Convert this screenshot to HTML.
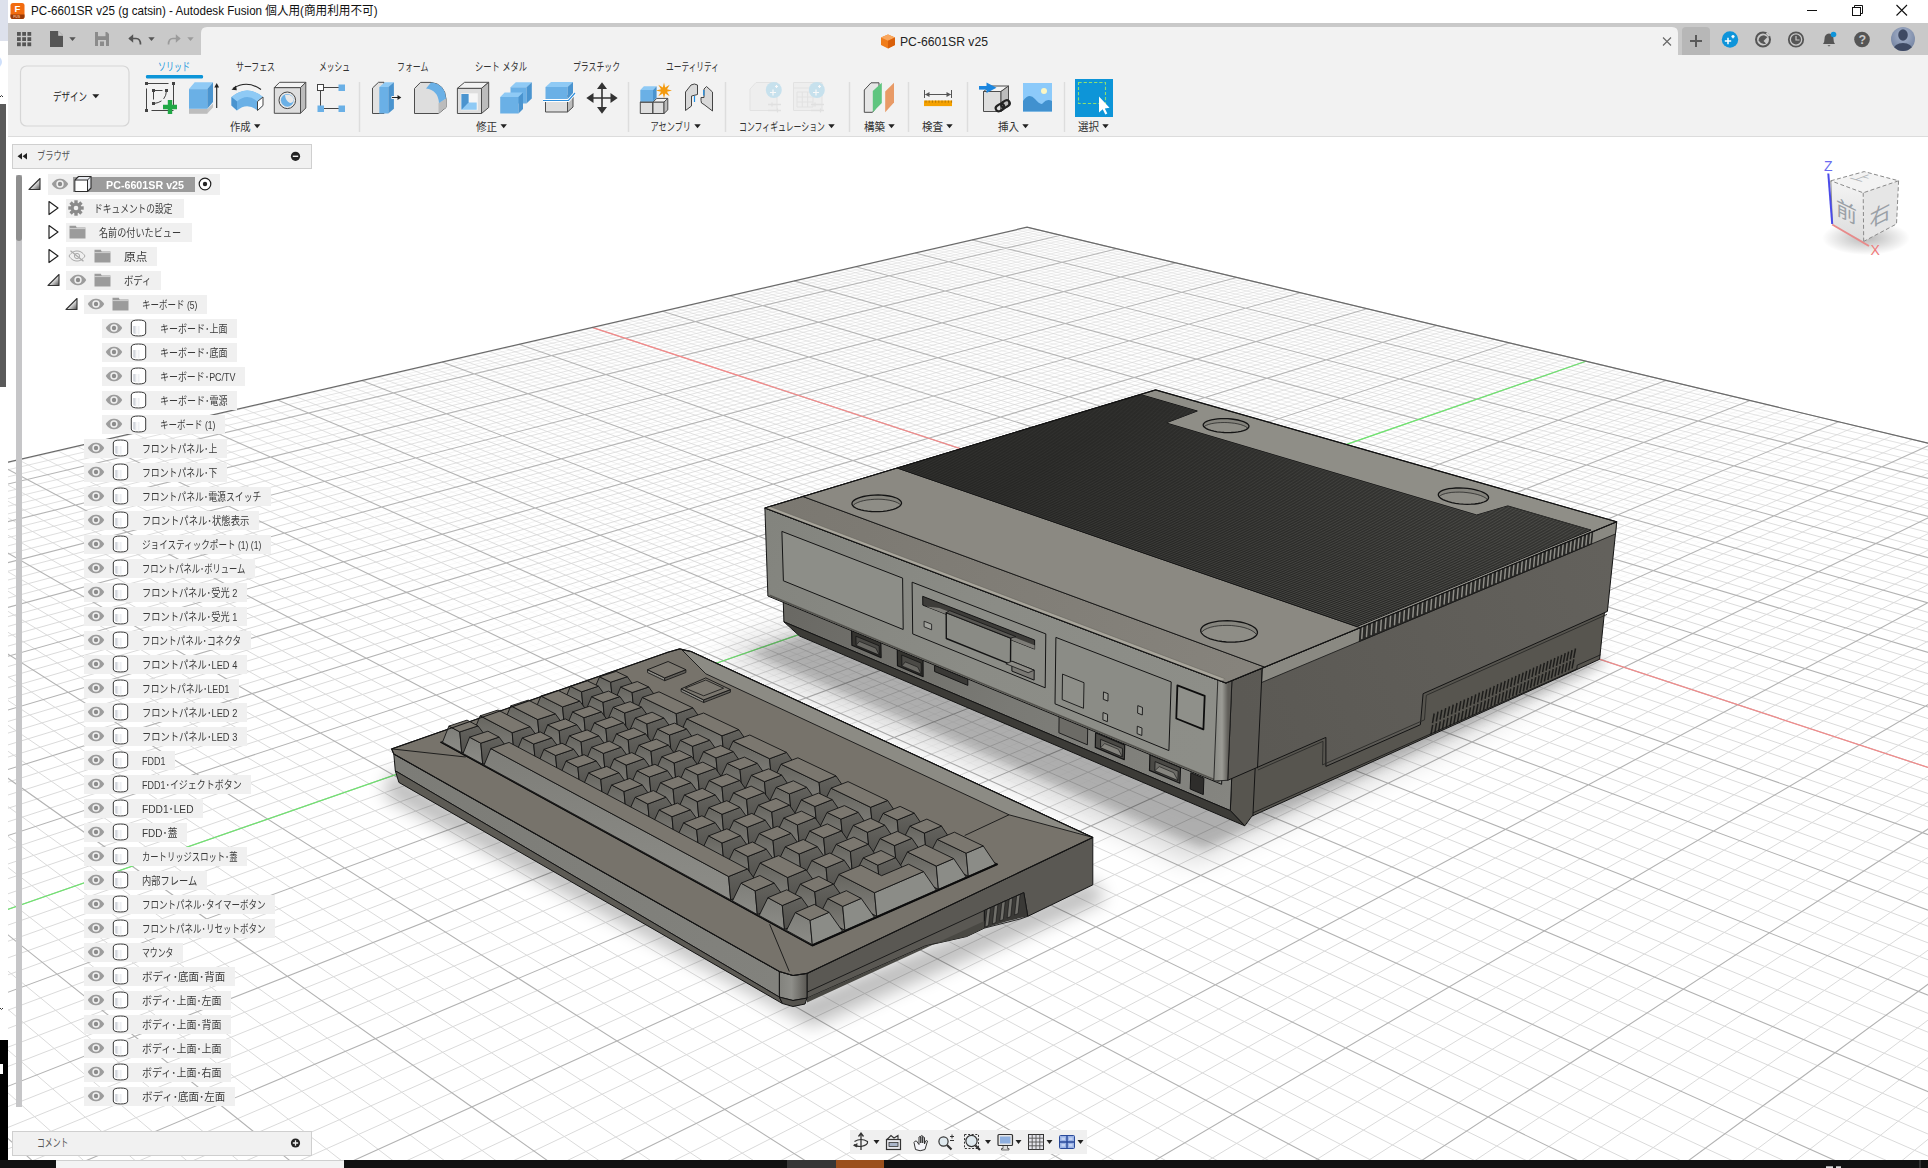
<!DOCTYPE html>
<html lang="ja"><head><meta charset="utf-8"><title>PC-6601SR v25 - Autodesk Fusion</title>
<style>
html,body{margin:0;padding:0}
body{width:1928px;height:1168px;overflow:hidden;background:#fff;position:relative;font-family:"Liberation Sans","Noto Sans CJK JP",sans-serif;font-size:11px;color:#3a3a3a}
#scene{position:absolute;left:0;top:0}
#ui{position:absolute;left:0;top:0}
.row{position:absolute;left:0;width:330px}
.rb{position:absolute;top:0;height:100%;background:#f0f0f0}
.ic{position:absolute;top:50%;transform:translateY(-50%)}
.rt{position:absolute;top:50%;margin-top:-7.2px;line-height:16px;font-size:11px;white-space:pre;transform-origin:0 50%}
.lb{position:absolute;white-space:pre;transform-origin:0 50%;line-height:1}
#browserhdr{position:absolute;left:12px;top:144px;width:298px;height:23px;background:#f1f1f1;border:1px solid #cfcfcf}
#comment{position:absolute;left:12px;top:1131px;width:298px;height:23px;background:#f1f1f1;border:1px solid #cfcfcf}
#scroll{position:absolute;left:16px;top:175px;width:6px;height:932px;background:#c6c6c8}
#thumb{position:absolute;left:16px;top:175px;width:6px;height:66px;background:#8f8f8f;border-radius:3px}
#navbar{position:absolute;left:850px;top:1130px;width:237px;height:24px;background:#f0f0f0}
</style></head>
<body>
<svg id="scene" width="1928" height="1168" viewBox="0 0 1928 1168" font-family='Liberation Sans,Noto Sans CJK JP,sans-serif'><defs><clipPath id="cv"><rect x="8" y="137" width="1920" height="1023"/></clipPath></defs><g clip-path="url(#cv)"><defs><radialGradient id="fineg" gradientUnits="userSpaceOnUse" cx="1050" cy="200" r="900" gradientTransform="translate(1050,200) scale(1,0.72) translate(-1050,-200)"><stop offset="0" stop-color="#d0d0d0" stop-opacity=".28"/><stop offset=".4" stop-color="#d2d2d2" stop-opacity=".42"/><stop offset=".75" stop-color="#d6d6d6" stop-opacity=".32"/><stop offset=".98" stop-color="#d9d9d9" stop-opacity="0"/></radialGradient><linearGradient id="minorg" gradientUnits="userSpaceOnUse" x1="0" y1="230" x2="0" y2="640"><stop offset="0" stop-color="#d0d0d0" stop-opacity=".4"/><stop offset="1" stop-color="#dadada"/></linearGradient><linearGradient id="majorg" gradientUnits="userSpaceOnUse" x1="0" y1="230" x2="0" y2="700"><stop offset="0" stop-color="#a8a8a8" stop-opacity=".8"/><stop offset="1" stop-color="#b2b2b2"/></linearGradient></defs>
<path d="M-1181.6 741.7L1033.4 228.8M-1177.9 750.0L1044.3 231.4M-1174.3 758.5L1055.2 234.0M-1170.5 767.1L1066.2 236.7M-1166.7 775.8L1077.3 239.3M-1162.9 784.6L1088.5 242.0M-1159.0 793.6L1099.8 244.7M-1155.0 802.7L1111.2 247.4M-1151.0 812.0L1122.7 250.2M-1146.9 821.4L1134.3 253.0M-1142.8 830.9L1146.0 255.8M-1138.6 840.6L1157.7 258.6M-1134.3 850.4L1169.6 261.4M-1130.0 860.4L1181.5 264.3M-1125.6 870.5L1193.6 267.2M-1121.1 880.8L1205.8 270.1M-1116.5 891.3L1218.0 273.1M-1111.9 901.9L1230.4 276.0M-1107.2 912.7L1242.9 279.0M-1102.5 923.7L1255.5 282.0M-1097.6 934.9L1268.2 285.1M-1092.7 946.2L1281.0 288.1M-1087.6 957.8L1293.9 291.2M-1082.5 969.5L1306.9 294.4M-1077.4 981.4L1320.1 297.5M-1072.1 993.6L1333.3 300.7M-1066.7 1005.9L1346.7 303.9M-1061.2 1018.5L1360.2 307.1M-1055.7 1031.3L1373.8 310.4M-1050.0 1044.4L1387.6 313.7M-1044.2 1057.6L1401.4 317.0M-1038.4 1071.1L1415.4 320.4M-1032.4 1084.9L1429.5 323.8M-1026.3 1098.9L1443.8 327.2M-1020.1 1113.2L1458.2 330.6M-1013.8 1127.7L1472.7 334.1M-1007.3 1142.5L1487.3 337.6M-1000.8 1157.6L1502.1 341.2M-994.1 1173.0L1517.0 344.7M-987.2 1188.8L1532.1 348.3M-980.3 1204.8L1547.3 352.0M-973.2 1221.1L1562.6 355.7M-965.9 1237.8L1578.1 359.4M-958.5 1254.8L1593.7 363.1M-951.0 1272.2L1609.5 366.9M-943.3 1289.9L1625.5 370.7M-935.4 1308.0L1641.6 374.6M-927.4 1326.5L1657.8 378.5M-919.2 1345.4L1674.2 382.4M-910.8 1364.7L1690.8 386.4M-902.2 1384.4L1707.6 390.4M-893.4 1404.5L1724.5 394.5M-884.5 1425.2L1741.5 398.6M-875.3 1446.3L1758.8 402.7M-865.9 1467.8L1776.2 406.9M-856.3 1489.9L1793.8 411.1M-846.5 1512.5L1811.6 415.4M-836.4 1535.7L1829.5 419.7M-826.1 1559.4L1847.7 424.0M-815.6 1583.6L1866.0 428.4M-804.8 1608.5L1884.5 432.8M-793.7 1634.0L1903.3 437.3M-782.3 1660.2L1922.2 441.9M-770.6 1687.0L1941.3 446.5M-758.7 1714.6L1960.6 451.1M-746.4 1742.8L1980.1 455.8M-733.8 1771.8L1999.9 460.5M-720.8 1801.6L2019.8 465.3M-707.5 1832.3L2040.0 470.1M-693.8 1863.7L2060.4 475.0M-679.7 1896.1L2081.0 479.9M-665.3 1929.4L2101.8 484.9M-650.4 1963.7L2122.9 490.0M-635.0 1999.0L2144.2 495.1M-619.2 2035.3L2165.8 500.3M-603.0 2072.8L2187.6 505.5M-586.2 2111.4L2209.6 510.8M-568.9 2151.2L2231.9 516.1M-551.0 2192.3L2254.4 521.5M-532.6 2234.7L2277.3 527.0M-513.5 2278.5L2300.3 532.5M-493.8 2323.8L2323.7 538.1M-473.5 2370.6L2347.3 543.8M-452.4 2419.1L2371.2 549.5M-430.6 2469.3L2395.4 555.3M-408.0 2521.2L2419.8 561.2M-384.6 2575.1L2444.6 567.1M-360.3 2631.0L2469.7 573.1M-335.1 2689.0L2495.1 579.2M-308.9 2749.2L2520.7 585.4M-281.7 2811.9L2546.7 591.6M-253.4 2877.0L2573.1 597.9M-223.9 2944.8L2599.7 604.3M-193.1 3015.5L2626.7 610.8M-161.1 3089.2L2654.1 617.3M-127.7 3166.1L2681.7 624.0M-92.7 3246.5L2709.8 630.7M-56.2 3330.5L2738.2 637.5M-17.9 3418.5L2766.9 644.4M22.1 3510.8L2796.1 651.4M64.2 3607.5L2825.6 658.5M108.4 3709.1L2855.5 665.6M154.8 3816.0L2885.9 672.9M203.8 3928.6L2916.6 680.3M255.4 4047.3L2947.7 687.7M309.9 4172.6L2979.3 695.3M367.5 4305.2L3011.3 703.0M428.6 4445.7L3043.7 710.8M493.4 4594.8L3076.6 718.6M562.3 4753.3L3110.0 726.6M635.6 4922.1L3143.8 734.8M714.0 5102.3L3178.1 743.0M797.8 5295.1L3212.9 751.3M-1166.6 732.8L892.4 5298.4M-1132.7 725.0L988.5 5111.7M-1099.3 717.3L1078.5 4936.8M-1066.3 709.7L1163.0 4772.7M-1033.7 702.2L1242.5 4618.3M-1001.6 694.8L1317.4 4472.8M-969.9 687.5L1388.0 4335.4M-938.6 680.3L1454.9 4205.6M-907.8 673.1L1518.1 4082.7M-877.3 666.1L1578.1 3966.1M-847.2 659.2L1635.1 3855.5M-817.5 652.3L1689.2 3750.2M-788.1 645.6L1740.8 3650.0M-759.2 638.9L1789.9 3554.6M-730.6 632.3L1836.8 3463.5M-702.3 625.8L1881.6 3376.5M-674.4 619.4L1924.4 3293.3M-646.8 613.0L1965.4 3213.6M-619.6 606.7L2004.7 3137.3M-592.7 600.5L2042.3 3064.2M-566.1 594.4L2078.4 2994.0M-539.9 588.4L2113.1 2926.5M-513.9 582.4L2146.5 2861.7M-488.3 576.5L2178.6 2799.4M-462.9 570.6L2209.5 2739.3M-437.9 564.8L2239.3 2681.5M-413.1 559.1L2268.0 2625.7M-388.6 553.5L2295.6 2572.0M-364.4 547.9L2322.4 2520.0M-340.5 542.4L2348.2 2469.9M-316.9 537.0L2373.1 2421.4M-293.5 531.6L2397.2 2374.6M-270.4 526.2L2420.6 2329.2M-247.5 521.0L2443.2 2285.3M-224.9 515.8L2465.0 2242.8M-202.5 510.6L2486.2 2201.6M-180.4 505.5L2506.8 2161.7M-158.6 500.5L2526.7 2122.9M-136.9 495.5L2546.1 2085.3M-115.5 490.6L2564.9 2048.8M-94.3 485.7L2583.1 2013.3M-73.4 480.8L2600.9 1978.9M-52.7 476.1L2618.1 1945.4M-32.2 471.3L2634.9 1912.8M-11.9 466.7L2651.2 1881.2M8.2 462.0L2667.0 1850.3M28.1 457.5L2682.5 1820.3M47.7 452.9L2697.5 1791.1M67.2 448.4L2712.2 1762.6M86.5 444.0L2726.5 1734.8M105.5 439.6L2740.4 1707.8M124.4 435.3L2754.0 1681.4M143.1 430.9L2767.2 1655.6M161.6 426.7L2780.2 1630.5M179.9 422.5L2792.8 1606.0M198.0 418.3L2805.1 1582.0M216.0 414.1L2817.1 1558.7M233.8 410.0L2828.9 1535.8M251.4 406.0L2840.4 1513.5M268.8 402.0L2851.6 1491.7M286.1 398.0L2862.6 1470.4M303.2 394.1L2873.3 1449.5M320.1 390.2L2883.8 1429.1M336.9 386.3L2894.1 1409.1M353.5 382.5L2904.2 1389.6M369.9 378.7L2914.0 1370.5M386.3 374.9L2923.6 1351.8M402.4 371.2L2933.1 1333.4M418.4 367.5L2942.3 1315.5M434.2 363.8L2951.4 1297.9M449.9 360.2L2960.2 1280.6M465.5 356.6L2968.9 1263.7M480.9 353.1L2977.5 1247.1M496.2 349.6L2985.8 1230.9M511.3 346.1L2994.0 1215.0M526.3 342.6L3002.1 1199.3M541.2 339.2L3010.0 1184.0M555.9 335.8L3017.7 1169.0M570.5 332.4L3025.3 1154.2M585.0 329.1L3032.8 1139.7M599.4 325.8L3040.1 1125.5M613.6 322.5L3047.3 1111.5M627.7 319.3L3054.3 1097.8M641.6 316.0L3061.3 1084.3M655.5 312.9L3068.1 1071.1M669.2 309.7L3074.8 1058.1M682.8 306.6L3081.4 1045.3M696.3 303.4L3087.8 1032.7M709.7 300.4L3094.2 1020.4M723.0 297.3L3100.4 1008.2M736.1 294.3L3106.6 996.3M749.2 291.3L3112.6 984.6M762.1 288.3L3118.6 973.0M774.9 285.3L3124.4 961.6M787.7 282.4L3130.2 950.5M800.3 279.5L3135.8 939.5M812.8 276.6L3141.4 928.6M825.2 273.7L3146.9 918.0M837.5 270.9L3152.3 907.5M849.7 268.1L3157.6 897.2M861.8 265.3L3162.8 887.0M873.8 262.5L3168.0 877.0M885.7 259.8L3173.0 867.2M897.6 257.1L3178.0 857.5M909.3 254.4L3182.9 847.9M920.9 251.7L3187.8 838.5M932.4 249.0L3192.6 829.2M943.9 246.4L3197.3 820.1M955.3 243.8L3201.9 811.1M966.5 241.2L3206.5 802.2M977.7 238.6L3211.0 793.4M988.8 236.0L3215.4 784.8M999.8 233.5L3219.8 776.3M1010.7 231.0L3224.1 767.9M1021.6 228.5L3228.4 759.6" stroke="url(#fineg)" stroke-width="1" fill="none"/>
<path d="M-1183.4 737.6L1028.0 227.5M-1179.8 745.9L1038.8 230.1M-1176.1 754.3L1049.7 232.7M-1168.6 771.4L1071.8 238.0M-1164.8 780.2L1082.9 240.7M-1161.0 789.1L1094.2 243.4M-1157.0 798.2L1105.5 246.1M-1149.0 816.6L1128.5 251.6M-1144.9 826.1L1140.1 254.4M-1140.7 835.7L1151.8 257.2M-1136.5 845.5L1163.6 260.0M-1127.8 865.4L1187.6 265.7M-1123.3 875.6L1199.7 268.7M-1118.8 886.0L1211.9 271.6M-1114.2 896.6L1224.2 274.5M-1104.9 918.2L1249.2 280.5M-1100.0 929.3L1261.8 283.6M-1095.1 940.5L1274.6 286.6M-1090.2 952.0L1287.4 289.7M-1080.0 975.4L1313.5 295.9M-1074.7 987.5L1326.7 299.1M-1069.4 999.7L1340.0 302.3M-1064.0 1012.2L1353.5 305.5M-1052.8 1037.8L1380.7 312.1M-1047.1 1051.0L1394.5 315.4M-1041.3 1064.3L1408.4 318.7M-1035.4 1078.0L1422.5 322.1M-1023.2 1106.0L1451.0 328.9M-1016.9 1120.4L1465.4 332.4M-1010.6 1135.1L1480.0 335.9M-1004.1 1150.1L1494.7 339.4M-990.7 1180.9L1524.5 346.5M-983.8 1196.7L1539.7 350.2M-976.7 1212.9L1554.9 353.8M-969.6 1229.4L1570.3 357.5M-954.8 1263.4L1601.6 365.0M-947.1 1281.0L1617.5 368.8M-939.4 1298.9L1633.5 372.7M-931.4 1317.2L1649.7 376.5M-915.0 1355.0L1682.5 384.4M-906.5 1374.5L1699.2 388.4M-897.8 1394.4L1716.0 392.4M-889.0 1414.8L1733.0 396.5M-870.6 1457.0L1767.5 404.8M-861.1 1478.8L1785.0 409.0M-851.4 1501.2L1802.7 413.2M-841.5 1524.0L1820.5 417.5M-820.9 1571.4L1856.8 426.2M-810.2 1596.0L1875.3 430.6M-799.2 1621.2L1893.9 435.1M-788.0 1647.0L1912.7 439.6M-764.7 1700.7L1950.9 448.8M-752.6 1728.6L1970.4 453.4M-740.1 1757.2L1990.0 458.1M-727.3 1786.6L2009.8 462.9M-700.7 1847.9L2050.2 472.6M-686.8 1879.8L2070.7 477.5M-672.6 1912.6L2091.4 482.4M-657.9 1946.4L2112.4 487.5M-627.2 2017.0L2155.0 497.7M-611.2 2053.9L2176.6 502.9M-594.6 2091.9L2198.6 508.1M-577.6 2131.1L2220.7 513.4M-541.9 2213.3L2265.8 524.3M-523.1 2256.4L2288.8 529.8M-503.8 2301.0L2312.0 535.3M-483.7 2347.0L2335.4 540.9M-441.6 2444.0L2383.2 552.4M-419.4 2495.0L2407.6 558.2M-396.4 2547.9L2432.2 564.1M-372.6 2602.8L2457.1 570.1M-322.1 2718.8L2507.9 582.3M-295.4 2780.2L2533.7 588.5M-267.7 2844.1L2559.9 594.8M-238.8 2910.6L2586.4 601.1M-177.3 3052.0L2640.3 614.0M-144.6 3127.2L2667.8 620.6M-110.4 3205.9L2695.7 627.3M-74.7 3288.0L2723.9 634.1M1.9 3464.1L2781.5 647.9M42.9 3558.5L2810.8 654.9M86.0 3657.7L2840.5 662.0M131.3 3761.9L2870.6 669.3M229.2 3987.1L2932.1 684.0M282.2 4109.1L2963.5 691.5M338.3 4238.0L2995.2 699.1M397.6 4374.4L3027.5 706.9M527.3 4672.8L3093.2 722.6M598.4 4836.3L3126.8 730.7M674.2 5010.7L3160.9 738.8M755.2 5197.0L3195.4 747.1M-1149.6 728.9L941.3 5203.5M-1115.9 721.1L1034.2 5022.9M-1082.7 713.5L1121.4 4853.5M-1050.0 705.9L1203.3 4694.3M-985.7 691.1L1353.2 4403.1M-954.2 683.9L1421.9 4269.6M-923.2 676.7L1486.9 4143.3M-892.5 669.6L1548.5 4023.6M-832.3 655.7L1662.5 3802.2M-802.8 648.9L1715.3 3699.5M-773.6 642.2L1765.6 3601.7M-744.8 635.6L1813.6 3508.5M-688.3 622.6L1903.2 3334.4M-660.6 616.2L1945.1 3253.0M-633.2 609.9L1985.2 3175.1M-606.1 603.6L2023.7 3100.4M-552.9 591.4L2096.0 2959.9M-526.8 585.4L2130.0 2893.8M-501.0 579.4L2162.7 2830.2M-475.5 573.5L2194.2 2769.1M-425.4 562.0L2253.7 2653.4M-400.8 556.3L2281.9 2598.6M-376.5 550.7L2309.1 2545.8M-352.4 545.2L2335.4 2494.8M-305.2 534.3L2385.3 2397.8M-281.9 528.9L2409.0 2351.7M-258.9 523.6L2432.0 2307.1M-236.2 518.4L2454.2 2263.9M-191.5 508.1L2496.6 2181.5M-169.5 503.0L2516.9 2142.1M-147.7 498.0L2536.5 2104.0M-126.2 493.0L2555.6 2066.9M-83.8 483.3L2592.1 1996.0M-63.0 478.5L2609.5 1962.0M-42.4 473.7L2626.5 1929.0M-22.0 469.0L2643.1 1896.9M18.2 459.7L2674.8 1835.2M37.9 455.2L2690.1 1805.6M57.5 450.7L2704.9 1776.7M76.9 446.2L2719.4 1748.6M115.0 437.4L2747.2 1694.5M133.8 433.1L2760.7 1668.4M152.4 428.8L2773.7 1643.0M170.8 424.6L2786.5 1618.2M207.0 416.2L2811.2 1570.3M224.9 412.1L2823.1 1547.2M242.6 408.0L2834.7 1524.6M260.1 404.0L2846.0 1502.5M294.6 396.0L2868.0 1459.9M311.7 392.1L2878.6 1439.2M328.5 388.2L2889.0 1419.1M345.2 384.4L2899.2 1399.3M378.1 376.8L2918.8 1361.1M394.3 373.0L2928.4 1342.5M410.4 369.3L2937.7 1324.4M426.3 365.7L2946.9 1306.6M457.7 358.4L2964.6 1272.1M473.2 354.9L2973.2 1255.4M488.6 351.3L2981.7 1239.0M503.8 347.8L2990.0 1222.9M533.8 340.9L3006.0 1191.6M548.6 337.5L3013.9 1176.5M563.3 334.1L3021.5 1161.6M577.8 330.8L3029.1 1146.9M606.5 324.2L3043.7 1118.5M620.6 320.9L3050.8 1104.6M634.7 317.7L3057.8 1091.0M648.6 314.4L3064.7 1077.7M676.0 308.1L3078.1 1051.7M689.6 305.0L3084.6 1039.0M703.0 301.9L3091.0 1026.5M716.4 298.8L3097.3 1014.3M742.7 292.8L3109.6 990.4M755.7 289.8L3115.6 978.8M768.5 286.8L3121.5 967.3M781.3 283.9L3127.3 956.0M806.5 278.0L3138.6 934.0M819.0 275.2L3144.1 923.3M831.4 272.3L3149.6 912.7M843.6 269.5L3154.9 902.3M867.8 263.9L3165.4 882.0M879.8 261.2L3170.5 872.1M891.7 258.4L3175.5 862.3M903.4 255.7L3180.5 852.7M926.7 250.4L3190.2 833.8M938.2 247.7L3194.9 824.6M949.6 245.1L3199.6 815.5M960.9 242.5L3204.2 806.6M983.3 237.3L3213.2 789.1M994.3 234.8L3217.6 780.5M1005.3 232.2L3222.0 772.1M1016.2 229.7L3226.3 763.7" stroke="url(#minorg)" stroke-width="1" fill="none"/>
<path d="M-1172.4 762.8L1060.7 235.3M-1153.0 807.3L1117.0 248.8M-1132.2 855.4L1175.6 262.9M-1109.6 907.3L1236.7 277.5M-1085.1 963.6L1300.4 292.8M-1058.5 1024.9L1367.0 308.8M-1029.4 1091.9L1436.7 325.5M-997.4 1165.3L1509.5 342.9M-962.2 1246.2L1585.9 361.3M-923.3 1335.9L1666.0 380.5M-879.9 1435.7L1750.1 400.6M-831.3 1547.4L1838.6 421.8M-776.5 1673.5L1931.7 444.2M-714.2 1816.8L2029.9 467.7M-642.8 1981.2L2133.5 492.5M-560.0 2171.6L2243.1 518.8M-463.0 2394.7L2359.2 546.6M-347.8 2659.7L2482.3 576.2M-208.7 2979.8L2613.2 607.5M-37.3 3374.0L2752.5 640.9M179.0 3871.6L2901.2 676.6M460.5 4519.1L3060.1 714.7M841.9 5396.6L3230.5 755.5M-1183.7 736.7L841.9 5396.6M-1017.6 698.5L1280.5 4544.4M-862.2 662.6L1607.0 3910.1M-716.4 629.0L1859.5 3419.5M-579.4 597.5L2060.6 3028.7M-450.4 567.7L2224.5 2710.2M-328.7 539.7L2360.7 2445.5M-213.7 513.2L2475.7 2222.0M-104.9 488.1L2574.1 2030.9M-1.8 464.3L2659.2 1865.6M96.0 441.8L2733.5 1721.2M189.0 420.4L2799.0 1593.9M277.5 400.0L2857.1 1481.0M361.7 380.6L2909.1 1380.0M442.1 362.0L2955.8 1289.2M518.9 344.3L2998.1 1207.1M592.2 327.4L3036.4 1132.6M662.4 311.3L3071.4 1064.5M729.6 295.8L3103.5 1002.2M794.0 280.9L3133.0 944.9M855.8 266.7L3160.2 892.1M915.1 253.0L3185.4 843.2M972.1 239.9L3208.7 797.8M1027.0 227.2L3230.5 755.5" stroke="url(#majorg)" stroke-width="1.1" fill="none"/>
<path d="M592.2 327.4L3036.4 1132.6" stroke="#f48a8a" stroke-width="1.2" fill="none"/>
<path d="M-962.2 1246.2L1585.9 361.3" stroke="#6ee66e" stroke-width="1.2" fill="none"/>
<path d="M-1183.7 736.7L1027.0 227.2L3230.5 755.5" stroke="#6a6a6a" stroke-width="1.2" fill="none"/>
<defs>
<filter id="blur12" x="-20%" y="-20%" width="140%" height="140%"><feGaussianBlur stdDeviation="14"/></filter>
<filter id="blur8" x="-20%" y="-20%" width="140%" height="140%"><feGaussianBlur stdDeviation="9"/></filter>
<filter id="blur5" x="-20%" y="-20%" width="140%" height="140%"><feGaussianBlur stdDeviation="5"/></filter>
<linearGradient id="gfs" gradientUnits="userSpaceOnUse" x1="765" y1="520" x2="1225" y2="700"><stop offset="0" stop-color="#83847e"/><stop offset=".5" stop-color="#8b8c86"/><stop offset="1" stop-color="#8d8e88"/></linearGradient>
<linearGradient id="grs" gradientUnits="userSpaceOnUse" x1="1240" y1="700" x2="1610" y2="560"><stop offset="0" stop-color="#5b5954"/><stop offset="1" stop-color="#63615c"/></linearGradient>
<linearGradient id="glf" gradientUnits="userSpaceOnUse" x1="790" y1="610" x2="1235" y2="790"><stop offset="0" stop-color="#6a6964"/><stop offset=".5" stop-color="#7a7a75"/><stop offset="1" stop-color="#858580"/></linearGradient>
<linearGradient id="gtf" gradientUnits="userSpaceOnUse" x1="780" y1="500" x2="1240" y2="675"><stop offset="0" stop-color="#7b7871"/><stop offset="1" stop-color="#86837c"/></linearGradient>
<linearGradient id="gcorner" gradientUnits="userSpaceOnUse" x1="1216" y1="0" x2="1228" y2="0"><stop offset="0" stop-color="#8d8e88"/><stop offset=".5" stop-color="#9b9b95"/><stop offset="1" stop-color="#605e59"/></linearGradient>
<linearGradient id="gribs" gradientUnits="userSpaceOnUse" x1="1150" y1="400" x2="1300" y2="640"><stop offset="0" stop-color="#363634"/><stop offset="1" stop-color="#5a5a56"/></linearGradient>
<linearGradient id="gkf0" x1="0" y1="0" x2="0" y2="1"><stop offset="0" stop-color="#66655f"/><stop offset="1" stop-color="#807f7a"/></linearGradient>
<linearGradient id="gkf1" x1="0" y1="0" x2="0" y2="1"><stop offset="0" stop-color="#7e7e79"/><stop offset="1" stop-color="#8c8c87"/></linearGradient>
<linearGradient id="gkr0" x1="0" y1="0" x2="0" y2="1"><stop offset="0" stop-color="#64635e"/><stop offset="1" stop-color="#51504c"/></linearGradient>
<linearGradient id="gkbf" gradientUnits="userSpaceOnUse" x1="400" y1="760" x2="780" y2="985"><stop offset="0" stop-color="#7c7c77"/><stop offset="1" stop-color="#82827d"/></linearGradient>
<linearGradient id="gkbc" gradientUnits="userSpaceOnUse" x1="779" y1="0" x2="807" y2="0"><stop offset="0" stop-color="#82827d"/><stop offset=".45" stop-color="#8e8e89"/><stop offset="1" stop-color="#5a5853"/></linearGradient>
</defs><path d="M716.7 653.7L1193.5 862.6L1464.3 739.1L1602.3 660.2L1152.2 511.9Z" fill="#000" opacity=".16" filter="url(#blur12)"/>
<path d="M748.2 652.2L1204.7 849.2L1608.9 662.3L1152.2 511.9Z" fill="#000" opacity=".18" filter="url(#blur5)"/>
<path d="M1231.7 777.4L1604.7 609.9L1599.6 659.3L1251.9 816.1L1244.8 825.8L1230.3 810.6Z" fill="#57554f" stroke="#141414" stroke-width="1" stroke-linejoin="round" />
<path d="M782.8 586.9L1232.0 770.7L1230.3 810.6L783.9 621.8Z" fill="url(#glf)" stroke="#141414" stroke-width="1" stroke-linejoin="round" />
<path d="M783.9 621.8L1230.3 810.6L1244.8 825.8L799.7 636.1Z" fill="#3c3b37" stroke="#141414" stroke-width="1" stroke-linejoin="round" />
<path d="M851.6 630.2L880.8 642.4L881.1 657.6L851.9 645.3Z" fill="#34332f" stroke="#141414" stroke-width="1.2" stroke-linejoin="round" /><path d="M855.9 636.2L879.2 645.8L879.3 655.1L856.1 645.3Z" fill="#4b4a46" stroke="#141414" stroke-width="0.8" stroke-linejoin="round" /><path d="M856.1 645.3L879.3 655.1L875.8 648.2L859.4 641.4Z" fill="#6a6964" stroke="#141414" stroke-width="0.6" stroke-linejoin="round" />
<path d="M897.3 648.9L923.0 659.6L923.1 676.6L897.5 665.8Z" fill="#34332f" stroke="#141414" stroke-width="1.2" stroke-linejoin="round" /><path d="M901.7 655.0L921.2 663.1L921.3 674.1L901.9 665.9Z" fill="#4b4a46" stroke="#141414" stroke-width="0.8" stroke-linejoin="round" /><path d="M901.9 665.9L921.3 674.1L917.7 667.1L905.3 661.9Z" fill="#6a6964" stroke="#141414" stroke-width="0.6" stroke-linejoin="round" />
<path d="M934.6 665.3L967.8 679.1L967.8 685.4L934.6 671.5Z" fill="#3a3936" stroke="#141414" stroke-width="1" stroke-linejoin="round" />
<path d="M1059.1 716.2L1087.7 728.1L1087.4 744.8L1058.9 732.8Z" fill="#6c6b66" stroke="#141414" stroke-width="0.9" stroke-linejoin="round" />
<path d="M1095.6 732.8L1124.7 744.9L1124.3 759.6L1095.3 747.4Z" fill="#4a4945" stroke="#141414" stroke-width="1.2" stroke-linejoin="round" /><path d="M1100.6 739.4L1122.5 748.5L1122.3 756.8L1100.5 747.6Z" fill="#6d6c67" stroke="#141414" stroke-width="0.8" stroke-linejoin="round" /><path d="M1100.5 747.6L1122.3 756.8L1118.3 749.3L1104.7 743.6Z" fill="#85847e" stroke="#141414" stroke-width="0.6" stroke-linejoin="round" />
<path d="M1149.9 754.8L1180.5 767.5L1179.9 783.3L1149.5 770.4Z" fill="#4a4945" stroke="#141414" stroke-width="1.2" stroke-linejoin="round" /><path d="M1155.1 761.6L1178.2 771.2L1177.9 780.4L1154.8 770.7Z" fill="#6d6c67" stroke="#141414" stroke-width="0.8" stroke-linejoin="round" /><path d="M1154.8 770.7L1177.9 780.4L1173.7 772.7L1159.3 766.6Z" fill="#85847e" stroke="#141414" stroke-width="0.6" stroke-linejoin="round" />
<path d="M1190.8 772.7L1203.9 778.2L1203.3 794.6L1190.2 789.0Z" fill="#2e2d2b" stroke="#141414" stroke-width="1" stroke-linejoin="round" />
<path d="M1432.5 723.2L1434.2 713.5" fill="none" stroke="#1d1d1b" stroke-width="1.5" />
<path d="M1430.9 734.7L1432.7 724.9" fill="none" stroke="#1d1d1b" stroke-width="1.5" />
<path d="M1436.3 721.5L1438.0 711.7" fill="none" stroke="#1d1d1b" stroke-width="1.5" />
<path d="M1434.8 732.9L1436.5 723.2" fill="none" stroke="#1d1d1b" stroke-width="1.5" />
<path d="M1440.1 719.7L1441.8 709.9" fill="none" stroke="#1d1d1b" stroke-width="1.5" />
<path d="M1438.6 731.1L1440.3 721.4" fill="none" stroke="#1d1d1b" stroke-width="1.5" />
<path d="M1443.9 717.9L1445.7 708.2" fill="none" stroke="#1d1d1b" stroke-width="1.5" />
<path d="M1442.4 729.3L1444.1 719.6" fill="none" stroke="#1d1d1b" stroke-width="1.5" />
<path d="M1447.7 716.2L1449.5 706.4" fill="none" stroke="#1d1d1b" stroke-width="1.5" />
<path d="M1446.2 727.6L1447.9 717.9" fill="none" stroke="#1d1d1b" stroke-width="1.5" />
<path d="M1451.5 714.4L1453.2 704.7" fill="none" stroke="#1d1d1b" stroke-width="1.5" />
<path d="M1450.0 725.8L1451.7 716.1" fill="none" stroke="#1d1d1b" stroke-width="1.5" />
<path d="M1455.3 712.7L1457.0 703.0" fill="none" stroke="#1d1d1b" stroke-width="1.5" />
<path d="M1453.8 724.0L1455.5 714.4" fill="none" stroke="#1d1d1b" stroke-width="1.5" />
<path d="M1459.1 710.9L1460.8 701.2" fill="none" stroke="#1d1d1b" stroke-width="1.5" />
<path d="M1457.5 722.3L1459.2 712.6" fill="none" stroke="#1d1d1b" stroke-width="1.5" />
<path d="M1462.8 709.2L1464.5 699.5" fill="none" stroke="#1d1d1b" stroke-width="1.5" />
<path d="M1461.3 720.5L1463.0 710.9" fill="none" stroke="#1d1d1b" stroke-width="1.5" />
<path d="M1466.6 707.4L1468.3 697.8" fill="none" stroke="#1d1d1b" stroke-width="1.5" />
<path d="M1465.0 718.8L1466.7 709.1" fill="none" stroke="#1d1d1b" stroke-width="1.5" />
<path d="M1470.3 705.7L1472.0 696.1" fill="none" stroke="#1d1d1b" stroke-width="1.5" />
<path d="M1468.7 717.0L1470.5 707.4" fill="none" stroke="#1d1d1b" stroke-width="1.5" />
<path d="M1474.0 704.0L1475.7 694.4" fill="none" stroke="#1d1d1b" stroke-width="1.5" />
<path d="M1472.4 715.3L1474.2 705.7" fill="none" stroke="#1d1d1b" stroke-width="1.5" />
<path d="M1477.7 702.3L1479.4 692.6" fill="none" stroke="#1d1d1b" stroke-width="1.5" />
<path d="M1476.1 713.6L1477.9 704.0" fill="none" stroke="#1d1d1b" stroke-width="1.5" />
<path d="M1481.4 700.6L1483.1 690.9" fill="none" stroke="#1d1d1b" stroke-width="1.5" />
<path d="M1479.8 711.8L1481.6 702.2" fill="none" stroke="#1d1d1b" stroke-width="1.5" />
<path d="M1485.1 698.9L1486.8 689.3" fill="none" stroke="#1d1d1b" stroke-width="1.5" />
<path d="M1483.5 710.1L1485.3 700.5" fill="none" stroke="#1d1d1b" stroke-width="1.5" />
<path d="M1488.8 697.1L1490.5 687.6" fill="none" stroke="#1d1d1b" stroke-width="1.5" />
<path d="M1487.2 708.4L1488.9 698.8" fill="none" stroke="#1d1d1b" stroke-width="1.5" />
<path d="M1492.4 695.5L1494.2 685.9" fill="none" stroke="#1d1d1b" stroke-width="1.5" />
<path d="M1490.8 706.7L1492.6 697.1" fill="none" stroke="#1d1d1b" stroke-width="1.5" />
<path d="M1496.1 693.8L1497.8 684.2" fill="none" stroke="#1d1d1b" stroke-width="1.5" />
<path d="M1494.5 705.0L1496.2 695.4" fill="none" stroke="#1d1d1b" stroke-width="1.5" />
<path d="M1499.7 692.1L1501.5 682.5" fill="none" stroke="#1d1d1b" stroke-width="1.5" />
<path d="M1498.1 703.3L1499.9 693.7" fill="none" stroke="#1d1d1b" stroke-width="1.5" />
<path d="M1503.3 690.4L1505.1 680.9" fill="none" stroke="#1d1d1b" stroke-width="1.5" />
<path d="M1501.8 701.6L1503.5 692.1" fill="none" stroke="#1d1d1b" stroke-width="1.5" />
<path d="M1507.0 688.7L1508.7 679.2" fill="none" stroke="#1d1d1b" stroke-width="1.5" />
<path d="M1505.4 699.9L1507.1 690.4" fill="none" stroke="#1d1d1b" stroke-width="1.5" />
<path d="M1510.6 687.0L1512.3 677.5" fill="none" stroke="#1d1d1b" stroke-width="1.5" />
<path d="M1509.0 698.2L1510.7 688.7" fill="none" stroke="#1d1d1b" stroke-width="1.5" />
<path d="M1514.2 685.4L1515.9 675.9" fill="none" stroke="#1d1d1b" stroke-width="1.5" />
<path d="M1512.6 696.5L1514.3 687.0" fill="none" stroke="#1d1d1b" stroke-width="1.5" />
<path d="M1517.8 683.7L1519.5 674.2" fill="none" stroke="#1d1d1b" stroke-width="1.5" />
<path d="M1516.2 694.8L1517.9 685.4" fill="none" stroke="#1d1d1b" stroke-width="1.5" />
<path d="M1521.3 682.1L1523.1 672.6" fill="none" stroke="#1d1d1b" stroke-width="1.5" />
<path d="M1519.7 693.2L1521.5 683.7" fill="none" stroke="#1d1d1b" stroke-width="1.5" />
<path d="M1524.9 680.4L1526.6 670.9" fill="none" stroke="#1d1d1b" stroke-width="1.5" />
<path d="M1523.3 691.5L1525.0 682.1" fill="none" stroke="#1d1d1b" stroke-width="1.5" />
<path d="M1528.4 678.8L1530.2 669.3" fill="none" stroke="#1d1d1b" stroke-width="1.5" />
<path d="M1526.8 689.8L1528.6 680.4" fill="none" stroke="#1d1d1b" stroke-width="1.5" />
<path d="M1532.0 677.1L1533.7 667.7" fill="none" stroke="#1d1d1b" stroke-width="1.5" />
<path d="M1530.4 688.2L1532.1 678.8" fill="none" stroke="#1d1d1b" stroke-width="1.5" />
<path d="M1535.5 675.5L1537.3 666.1" fill="none" stroke="#1d1d1b" stroke-width="1.5" />
<path d="M1533.9 686.5L1535.7 677.1" fill="none" stroke="#1d1d1b" stroke-width="1.5" />
<path d="M1539.0 673.8L1540.8 664.4" fill="none" stroke="#1d1d1b" stroke-width="1.5" />
<path d="M1537.4 684.9L1539.2 675.5" fill="none" stroke="#1d1d1b" stroke-width="1.5" />
<path d="M1542.6 672.2L1544.3 662.8" fill="none" stroke="#1d1d1b" stroke-width="1.5" />
<path d="M1540.9 683.2L1542.7 673.9" fill="none" stroke="#1d1d1b" stroke-width="1.5" />
<path d="M1546.1 670.6L1547.8 661.2" fill="none" stroke="#1d1d1b" stroke-width="1.5" />
<path d="M1544.4 681.6L1546.2 672.2" fill="none" stroke="#1d1d1b" stroke-width="1.5" />
<path d="M1549.5 669.0L1551.3 659.6" fill="none" stroke="#1d1d1b" stroke-width="1.5" />
<path d="M1547.9 680.0L1549.7 670.6" fill="none" stroke="#1d1d1b" stroke-width="1.5" />
<path d="M1553.0 667.4L1554.8 658.0" fill="none" stroke="#1d1d1b" stroke-width="1.5" />
<path d="M1551.4 678.3L1553.2 669.0" fill="none" stroke="#1d1d1b" stroke-width="1.5" />
<path d="M1556.5 665.8L1558.3 656.4" fill="none" stroke="#1d1d1b" stroke-width="1.5" />
<path d="M1554.9 676.7L1556.6 667.4" fill="none" stroke="#1d1d1b" stroke-width="1.5" />
<path d="M1560.0 664.2L1561.7 654.8" fill="none" stroke="#1d1d1b" stroke-width="1.5" />
<path d="M1558.3 675.1L1560.1 665.8" fill="none" stroke="#1d1d1b" stroke-width="1.5" />
<path d="M1563.4 662.6L1565.2 653.2" fill="none" stroke="#1d1d1b" stroke-width="1.5" />
<path d="M1561.8 673.5L1563.5 664.2" fill="none" stroke="#1d1d1b" stroke-width="1.5" />
<path d="M1566.8 661.0L1568.6 651.6" fill="none" stroke="#1d1d1b" stroke-width="1.5" />
<path d="M1565.2 671.9L1567.0 662.6" fill="none" stroke="#1d1d1b" stroke-width="1.5" />
<path d="M1570.3 659.4L1572.0 650.1" fill="none" stroke="#1d1d1b" stroke-width="1.5" />
<path d="M1568.6 670.3L1570.4 661.0" fill="none" stroke="#1d1d1b" stroke-width="1.5" />
<path d="M1573.7 657.8L1575.5 648.5" fill="none" stroke="#1d1d1b" stroke-width="1.5" />
<path d="M1572.0 668.7L1573.8 659.4" fill="none" stroke="#1d1d1b" stroke-width="1.5" />
<path d="M1255.2 767.3L1252.9 816.1" fill="none" stroke="#141414" stroke-width="1" />
<path d="M1253.1 812.8L1576.8 669.0L1577.2 665.2L1600.6 654.8" fill="none" stroke="#141414" stroke-width="0.8" />
<path d="M1231.9 680.6L1616.7 521.8L1607.4 611.4L1423.1 693.7L1420.4 724.7L1325.9 766.4L1325.9 737.4L1227.7 780.3Z" fill="url(#grs)" stroke="#141414" stroke-width="1" stroke-linejoin="round" />
<path d="M1607.0 614.4L1426.3 695.3L1424.5 719.8L1322.5 764.9L1323.0 741.3L1257.9 770.0" fill="none" stroke="#2a2a28" stroke-width="0.9" />
<path d="M1262.2 668.1L1616.7 521.8L1615.4 534.0L1261.6 682.5Z" fill="#8a8982" stroke="#141414" stroke-width="0.8" stroke-linejoin="round" />
<path d="M1262.2 668.1L1257.5 768.2" fill="none" stroke="#141414" stroke-width="1" />
<path d="M764.9 508.0L1225.9 683.1L1221.6 784.3L767.9 596.0Z" fill="url(#gfs)" stroke="#141414" stroke-width="1" stroke-linejoin="round" />
<path d="M769.5 595.2L1219.5 781.8" fill="none" stroke="#55544f" stroke-width="1.6" />
<path d="M1217.8 680.0L1231.9 680.6L1227.7 780.3L1213.8 781.0Z" fill="url(#gcorner)" stroke="#141414" stroke-width="0.8" stroke-linejoin="round" />
<path d="M781.9 531.4L902.6 578.1L903.2 629.5L783.4 580.8Z" fill="#8d8e88" stroke="#141414" stroke-width="1" stroke-linejoin="round" />
<path d="M912.1 582.2L1045.8 633.9L1045.2 687.8L912.7 633.9Z" fill="#8b8c86" stroke="#141414" stroke-width="1" stroke-linejoin="round" />
<path d="M1055.9 637.4L1171.2 681.9L1168.9 750.6L1055.0 703.8Z" fill="#8b8c86" stroke="#141414" stroke-width="1" stroke-linejoin="round" />
<path d="M1062.5 674.1L1084.0 682.7L1083.5 708.3L1062.2 699.6Z" fill="#8e8f89" stroke="#141414" stroke-width="0.9" stroke-linejoin="round" />
<path d="M1103.5 691.9L1108.1 693.7L1107.9 701.1L1103.3 699.3Z" fill="#9a9b95" stroke="#141414" stroke-width="0.9" stroke-linejoin="round" />
<path d="M1137.8 705.6L1142.5 707.5L1142.3 715.0L1137.6 713.1Z" fill="#9a9b95" stroke="#141414" stroke-width="0.9" stroke-linejoin="round" />
<path d="M1103.0 712.5L1107.6 714.4L1107.4 721.7L1102.9 719.9Z" fill="#9a9b95" stroke="#141414" stroke-width="0.9" stroke-linejoin="round" />
<path d="M1137.3 726.2L1142.0 728.1L1141.8 735.5L1137.1 733.6Z" fill="#9a9b95" stroke="#141414" stroke-width="0.9" stroke-linejoin="round" />
<path d="M1177.4 685.3L1204.7 695.9L1203.4 729.4L1176.3 718.5Z" fill="#8f908a" stroke="#0d0d0d" stroke-width="1.8" stroke-linejoin="round" stroke-linejoin="round"/>
<path d="M922.7 596.3L1034.6 640.0L1034.6 649.1L922.8 605.1Z" fill="#3d3c39" stroke="#141414" stroke-width="1" stroke-linejoin="round" />
<path d="M926.5 606.6L1034.6 649.1L1034.6 645.2L939.4 607.9Z" fill="#7d7c77" />
<path d="M946.2 612.7L1010.7 638.1L1010.5 664.4L946.3 638.5Z" fill="#8a8b85" stroke="#141414" stroke-width="1.4" stroke-linejoin="round" />
<path d="M946.2 612.7L1010.7 638.1L1015.8 636.6L949.6 610.6Z" fill="#595854" stroke="#141414" stroke-width="0.8" stroke-linejoin="round" />
<path d="M1011.9 661.2L1034.2 670.2L1034.1 680.1L1011.9 671.1Z" fill="#7a7974" stroke="#141414" stroke-width="1" stroke-linejoin="round" />
<path d="M1011.9 661.2L1034.2 670.2L1028.2 672.7L1005.9 663.8Z" fill="#8d8c86" stroke="#141414" stroke-width="0.8" stroke-linejoin="round" />
<path d="M924.1 621.2L931.6 624.2L931.6 629.8L924.1 626.8Z" fill="#a2a39d" stroke="#141414" stroke-width="0.8" stroke-linejoin="round" />
<path d="M764.9 508.0L1225.9 683.1L1616.7 521.8L1155.6 389.9Z" fill="#8f8e87" stroke="#141414" stroke-width="1" stroke-linejoin="round" />
<path d="M764.9 508.0L1225.9 683.1L1264.7 667.1L803.0 496.5Z" fill="url(#gtf)" stroke="#141414" stroke-width="0.9" stroke-linejoin="round" />
<path d="M803.0 496.5L1264.7 667.1L1360.2 627.7L897.3 468.0Z" fill="#8b8982" stroke="#141414" stroke-width="0.9" stroke-linejoin="round" />
<path d="M764.9 508.0L1220.1 680.9L1225.2 678.8L769.9 506.5Z" fill="#a8a59b" />
<path d="M769.9 506.5L1225.2 678.8" fill="none" stroke="#6a6862" stroke-width="0.6" />
<clipPath id="ventc"><path d="M897.3 468.0L1356.8 626.5L1591.0 530.1L1507.8 505.9L1476.7 515.0L1166.1 422.9L1197.3 411.0L1140.5 394.5Z"/></clipPath>
<path d="M897.3 468.0L1356.8 626.5L1591.0 530.1L1507.8 505.9L1476.7 515.0L1166.1 422.9L1197.3 411.0L1140.5 394.5Z" fill="#222220" stroke="#141414" stroke-width="1"/>
<path d="M898.6 467.6L1358.1 625.9M901.1 466.9L1360.6 624.9M903.7 466.1L1363.2 623.8M906.2 465.3L1365.7 622.8M908.8 464.6L1368.3 621.7M911.3 463.8L1370.8 620.7M913.8 463.0L1373.4 619.6M916.3 462.3L1375.9 618.6M918.8 461.5L1378.4 617.6M921.3 460.8L1380.9 616.5M923.9 460.0L1383.5 615.5M926.4 459.2L1386.0 614.5M928.9 458.5L1388.5 613.4M931.3 457.7L1391.0 612.4M933.8 457.0L1393.5 611.4M936.3 456.2L1396.0 610.3M938.8 455.5L1398.5 609.3M941.3 454.7L1400.9 608.3M943.7 454.0L1403.4 607.3M946.2 453.2L1405.9 606.3M948.7 452.5L1408.4 605.2M951.1 451.7L1410.8 604.2M953.6 451.0L1413.3 603.2M956.0 450.3L1415.7 602.2M958.5 449.5L1418.2 601.2M960.9 448.8L1420.6 600.2M963.4 448.1L1423.1 599.2M965.8 447.3L1425.5 598.2M968.2 446.6L1427.9 597.2M970.7 445.8L1430.3 596.2M973.1 445.1L1432.8 595.2M975.5 444.4L1435.2 594.2M977.9 443.7L1437.6 593.2M980.3 442.9L1440.0 592.2M982.7 442.2L1442.4 591.2M985.1 441.5L1444.8 590.2M987.5 440.8L1447.2 589.3M989.9 440.0L1449.6 588.3M992.3 439.3L1451.9 587.3M994.7 438.6L1454.3 586.3M997.1 437.9L1456.7 585.3M999.4 437.1L1459.1 584.4M1001.8 436.4L1461.4 583.4M1004.2 435.7L1463.8 582.4M1006.6 435.0L1466.1 581.5M1008.9 434.3L1468.5 580.5M1011.3 433.6L1470.8 579.5M1013.6 432.9L1473.2 578.6M1016.0 432.2L1475.5 577.6M1018.3 431.4L1477.8 576.6M1020.7 430.7L1480.2 575.7M1023.0 430.0L1482.5 574.7M1025.3 429.3L1484.8 573.8M1027.7 428.6L1487.1 572.8M1030.0 427.9L1489.4 571.9M1032.3 427.2L1491.7 570.9M1034.6 426.5L1494.0 570.0M1036.9 425.8L1496.3 569.0M1039.3 425.1L1498.6 568.1M1041.6 424.4L1500.9 567.1M1043.9 423.7L1503.2 566.2M1046.2 423.0L1505.5 565.3M1048.5 422.3L1507.7 564.3M1050.8 421.6L1510.0 563.4M1053.0 420.9L1512.3 562.5M1055.3 420.3L1514.5 561.5M1057.6 419.6L1516.8 560.6M1059.9 418.9L1519.1 559.7M1062.2 418.2L1521.3 558.7M1064.4 417.5L1523.5 557.8M1066.7 416.8L1525.8 556.9M1069.0 416.1L1528.0 556.0M1071.2 415.5L1530.3 555.1M1073.5 414.8L1532.5 554.1M1075.7 414.1L1534.7 553.2M1078.0 413.4L1536.9 552.3M1080.2 412.7L1539.1 551.4M1082.4 412.1L1541.4 550.5M1084.7 411.4L1543.6 549.6M1086.9 410.7L1545.8 548.7M1089.1 410.0L1548.0 547.8M1091.4 409.4L1550.2 546.9M1093.6 408.7L1552.3 546.0M1095.8 408.0L1554.5 545.1M1098.0 407.4L1556.7 544.2M1100.2 406.7L1558.9 543.3M1102.4 406.0L1561.1 542.4M1104.6 405.4L1563.2 541.5M1106.8 404.7L1565.4 540.6M1109.0 404.0L1567.6 539.7M1111.2 403.4L1569.7 538.8M1113.4 402.7L1571.9 537.9M1115.6 402.0L1574.0 537.0M1117.8 401.4L1576.2 536.2M1120.0 400.7L1578.3 535.3M1122.1 400.1L1580.4 534.4M1124.3 399.4L1582.6 533.5M1126.5 398.7L1584.7 532.6M1128.7 398.1L1586.8 531.8M1130.8 397.4L1589.0 530.9M1133.0 396.8L1591.1 530.0M1135.1 396.1L1593.2 529.1M1137.3 395.5L1595.3 528.3M1139.4 394.8L1597.4 527.4" stroke="url(#gribs)" stroke-width=".85" fill="none" clip-path="url(#ventc)" opacity=".85"/>
<path d="M1360.2 627.7L1592.8 531.7L1591.6 543.9L1359.3 641.6Z" fill="#2a2a28" stroke="#141414" stroke-width="0.7" stroke-linejoin="round" />
<path d="M1362.5 627.2L1361.8 638.4M1367.3 625.3L1366.5 636.4M1372.0 623.3L1371.2 634.5M1376.7 621.4L1375.9 632.5M1381.3 619.5L1380.6 630.6M1386.0 617.5L1385.2 628.6M1390.6 615.6L1389.9 626.7M1395.2 613.7L1394.5 624.8M1399.9 611.8L1399.1 622.8M1404.4 609.9L1403.7 620.9M1409.0 608.0L1408.2 619.0M1413.6 606.1L1412.8 617.1M1418.1 604.3L1417.3 615.2M1422.6 602.4L1421.8 613.4M1427.1 600.5L1426.3 611.5M1431.6 598.7L1430.8 609.6M1436.1 596.9L1435.3 607.8M1440.5 595.0L1439.7 605.9M1445.0 593.2L1444.1 604.0M1449.4 591.4L1448.6 602.2M1453.8 589.5L1453.0 600.4M1458.2 587.7L1457.3 598.5M1462.6 585.9L1461.7 596.7M1466.9 584.1L1466.1 594.9M1471.3 582.3L1470.4 593.1M1475.6 580.5L1474.7 591.3M1479.9 578.8L1479.0 589.5M1484.2 577.0L1483.3 587.7M1488.5 575.2L1487.6 585.9M1492.8 573.5L1491.9 584.1M1497.0 571.7L1496.1 582.4M1501.3 569.9L1500.3 580.6M1505.5 568.2L1504.6 578.8M1509.7 566.5L1508.8 577.1M1513.9 564.7L1512.9 575.3M1518.1 563.0L1517.1 573.6M1522.2 561.3L1521.3 571.9M1526.4 559.6L1525.4 570.1M1530.5 557.9L1529.5 568.4M1534.6 556.2L1533.7 566.7M1538.7 554.5L1537.8 565.0M1542.8 552.8L1541.8 563.3M1546.9 551.1L1545.9 561.6M1551.0 549.4L1550.0 559.9M1555.0 547.8L1554.0 558.2M1559.0 546.1L1558.1 556.5M1563.1 544.4L1562.1 554.9M1567.1 542.8L1566.1 553.2M1571.1 541.1L1570.1 551.5M1575.1 539.5L1574.0 549.9M1579.0 537.8L1578.0 548.2M1583.0 536.2L1581.9 546.6M1586.9 534.6L1585.9 544.9M1590.8 533.0L1589.8 543.3" stroke="#8f8e88" stroke-width="1.5" fill="none" stroke-linecap="round"/>
<clipPath id="cc0"><path d="M893.3 509.3L896.0 508.3L898.2 507.2L899.9 506.0L901.0 504.7L901.5 503.4L901.4 502.1L900.6 500.9L899.3 499.7L897.5 498.5L895.1 497.5L892.3 496.7L889.1 496.0L885.6 495.5L881.9 495.2L878.1 495.0L874.2 495.1L870.4 495.4L866.8 495.9L863.4 496.5L860.3 497.3L857.6 498.3L855.4 499.4L853.7 500.6L852.5 501.8L852.0 503.1L852.0 504.4L852.7 505.7L853.9 506.9L855.7 508.0L858.1 509.1L860.9 509.9L864.1 510.6L867.7 511.2L871.4 511.5L875.3 511.6L879.2 511.6L883.1 511.3L886.8 510.8L890.2 510.1Z"/></clipPath>
<path d="M893.3 509.3L896.0 508.3L898.2 507.2L899.9 506.0L901.0 504.7L901.5 503.4L901.4 502.1L900.6 500.9L899.3 499.7L897.5 498.5L895.1 497.5L892.3 496.7L889.1 496.0L885.6 495.5L881.9 495.2L878.1 495.0L874.2 495.1L870.4 495.4L866.8 495.9L863.4 496.5L860.3 497.3L857.6 498.3L855.4 499.4L853.7 500.6L852.5 501.8L852.0 503.1L852.0 504.4L852.7 505.7L853.9 506.9L855.7 508.0L858.1 509.1L860.9 509.9L864.1 510.6L867.7 511.2L871.4 511.5L875.3 511.6L879.2 511.6L883.1 511.3L886.8 510.8L890.2 510.1Z" fill="#85847d"/>
<path d="M893.4 513.5L896.1 512.5L898.3 511.4L899.9 510.2L901.0 508.9L901.5 507.6L901.4 506.3L900.7 505.0L899.4 503.8L897.5 502.7L895.1 501.7L892.3 500.9L889.1 500.2L885.7 499.7L882.0 499.3L878.1 499.2L874.3 499.3L870.5 499.6L866.9 500.0L863.4 500.7L860.4 501.5L857.7 502.5L855.4 503.6L853.7 504.8L852.6 506.0L852.0 507.3L852.1 508.6L852.8 509.9L854.0 511.1L855.8 512.3L858.2 513.3L861.0 514.2L864.2 514.9L867.7 515.4L871.5 515.7L875.4 515.9L879.3 515.8L883.2 515.5L886.8 515.0L890.3 514.3Z" fill="#8e8d86" stroke="#2a2a28" stroke-width=".8" clip-path="url(#cc0)"/>
<path d="M893.3 509.3L896.0 508.3L898.2 507.2L899.9 506.0L901.0 504.7L901.5 503.4L901.4 502.1L900.6 500.9L899.3 499.7L897.5 498.5L895.1 497.5L892.3 496.7L889.1 496.0L885.6 495.5L881.9 495.2L878.1 495.0L874.2 495.1L870.4 495.4L866.8 495.9L863.4 496.5L860.3 497.3L857.6 498.3L855.4 499.4L853.7 500.6L852.5 501.8L852.0 503.1L852.0 504.4L852.7 505.7L853.9 506.9L855.7 508.0L858.1 509.1L860.9 509.9L864.1 510.6L867.7 511.2L871.4 511.5L875.3 511.6L879.2 511.6L883.1 511.3L886.8 510.8L890.2 510.1Z" fill="none" stroke="#141414" stroke-width="1.3"/>
<clipPath id="cc1"><path d="M1243.5 430.6L1245.6 429.8L1247.2 428.9L1248.3 427.9L1248.9 426.8L1248.9 425.7L1248.3 424.6L1247.2 423.6L1245.6 422.6L1243.5 421.6L1240.9 420.8L1238.0 420.0L1234.9 419.5L1231.5 419.0L1227.9 418.7L1224.4 418.6L1220.9 418.7L1217.5 418.9L1214.3 419.3L1211.4 419.9L1208.8 420.5L1206.7 421.4L1205.0 422.3L1203.9 423.3L1203.3 424.3L1203.2 425.4L1203.7 426.5L1204.8 427.6L1206.4 428.6L1208.5 429.6L1211.0 430.4L1213.9 431.2L1217.1 431.8L1220.5 432.2L1224.1 432.5L1227.7 432.6L1231.3 432.5L1234.8 432.3L1238.0 431.9L1240.9 431.3Z"/></clipPath>
<path d="M1243.5 430.6L1245.6 429.8L1247.2 428.9L1248.3 427.9L1248.9 426.8L1248.9 425.7L1248.3 424.6L1247.2 423.6L1245.6 422.6L1243.5 421.6L1240.9 420.8L1238.0 420.0L1234.9 419.5L1231.5 419.0L1227.9 418.7L1224.4 418.6L1220.9 418.7L1217.5 418.9L1214.3 419.3L1211.4 419.9L1208.8 420.5L1206.7 421.4L1205.0 422.3L1203.9 423.3L1203.3 424.3L1203.2 425.4L1203.7 426.5L1204.8 427.6L1206.4 428.6L1208.5 429.6L1211.0 430.4L1213.9 431.2L1217.1 431.8L1220.5 432.2L1224.1 432.5L1227.7 432.6L1231.3 432.5L1234.8 432.3L1238.0 431.9L1240.9 431.3Z" fill="#85847d"/>
<path d="M1243.3 434.6L1245.4 433.7L1247.1 432.8L1248.2 431.8L1248.7 430.7L1248.7 429.6L1248.1 428.5L1247.0 427.5L1245.4 426.4L1243.3 425.5L1240.8 424.6L1237.9 423.9L1234.7 423.3L1231.3 422.9L1227.8 422.6L1224.2 422.5L1220.7 422.6L1217.3 422.8L1214.1 423.2L1211.2 423.7L1208.7 424.4L1206.5 425.2L1204.9 426.1L1203.7 427.1L1203.1 428.2L1203.1 429.3L1203.6 430.4L1204.7 431.5L1206.2 432.5L1208.3 433.5L1210.8 434.3L1213.7 435.1L1217.0 435.7L1220.4 436.1L1224.0 436.4L1227.6 436.5L1231.2 436.5L1234.6 436.2L1237.8 435.8L1240.8 435.3Z" fill="#8e8d86" stroke="#2a2a28" stroke-width=".8" clip-path="url(#cc1)"/>
<path d="M1243.5 430.6L1245.6 429.8L1247.2 428.9L1248.3 427.9L1248.9 426.8L1248.9 425.7L1248.3 424.6L1247.2 423.6L1245.6 422.6L1243.5 421.6L1240.9 420.8L1238.0 420.0L1234.9 419.5L1231.5 419.0L1227.9 418.7L1224.4 418.6L1220.9 418.7L1217.5 418.9L1214.3 419.3L1211.4 419.9L1208.8 420.5L1206.7 421.4L1205.0 422.3L1203.9 423.3L1203.3 424.3L1203.2 425.4L1203.7 426.5L1204.8 427.6L1206.4 428.6L1208.5 429.6L1211.0 430.4L1213.9 431.2L1217.1 431.8L1220.5 432.2L1224.1 432.5L1227.7 432.6L1231.3 432.5L1234.8 432.3L1238.0 431.9L1240.9 431.3Z" fill="none" stroke="#141414" stroke-width="1.3"/>
<clipPath id="cc2"><path d="M1483.8 502.0L1485.9 501.1L1487.4 500.0L1488.3 498.8L1488.6 497.6L1488.3 496.3L1487.3 495.0L1485.8 493.7L1483.7 492.6L1481.2 491.5L1478.2 490.5L1474.8 489.6L1471.2 488.9L1467.4 488.4L1463.5 488.1L1459.6 488.0L1455.8 488.0L1452.1 488.3L1448.8 488.7L1445.8 489.4L1443.2 490.2L1441.1 491.1L1439.6 492.2L1438.6 493.3L1438.3 494.6L1438.5 495.8L1439.4 497.1L1440.9 498.4L1442.9 499.6L1445.5 500.7L1448.4 501.7L1451.8 502.6L1455.5 503.3L1459.3 503.8L1463.3 504.2L1467.3 504.3L1471.1 504.2L1474.8 504.0L1478.2 503.5L1481.2 502.8Z"/></clipPath>
<path d="M1483.8 502.0L1485.9 501.1L1487.4 500.0L1488.3 498.8L1488.6 497.6L1488.3 496.3L1487.3 495.0L1485.8 493.7L1483.7 492.6L1481.2 491.5L1478.2 490.5L1474.8 489.6L1471.2 488.9L1467.4 488.4L1463.5 488.1L1459.6 488.0L1455.8 488.0L1452.1 488.3L1448.8 488.7L1445.8 489.4L1443.2 490.2L1441.1 491.1L1439.6 492.2L1438.6 493.3L1438.3 494.6L1438.5 495.8L1439.4 497.1L1440.9 498.4L1442.9 499.6L1445.5 500.7L1448.4 501.7L1451.8 502.6L1455.5 503.3L1459.3 503.8L1463.3 504.2L1467.3 504.3L1471.1 504.2L1474.8 504.0L1478.2 503.5L1481.2 502.8Z" fill="#85847d"/>
<path d="M1483.5 506.2L1485.5 505.2L1487.0 504.2L1488.0 503.0L1488.2 501.7L1487.9 500.4L1487.0 499.2L1485.5 497.9L1483.4 496.7L1480.8 495.6L1477.8 494.6L1474.5 493.8L1470.9 493.1L1467.0 492.6L1463.1 492.2L1459.2 492.1L1455.4 492.2L1451.8 492.4L1448.5 492.9L1445.5 493.5L1442.9 494.3L1440.8 495.3L1439.3 496.3L1438.3 497.5L1438.0 498.7L1438.2 500.0L1439.1 501.3L1440.6 502.6L1442.6 503.8L1445.1 504.9L1448.1 505.9L1451.5 506.8L1455.1 507.5L1459.0 508.0L1463.0 508.4L1466.9 508.5L1470.8 508.4L1474.5 508.2L1477.9 507.7L1480.9 507.0Z" fill="#8e8d86" stroke="#2a2a28" stroke-width=".8" clip-path="url(#cc2)"/>
<path d="M1483.8 502.0L1485.9 501.1L1487.4 500.0L1488.3 498.8L1488.6 497.6L1488.3 496.3L1487.3 495.0L1485.8 493.7L1483.7 492.6L1481.2 491.5L1478.2 490.5L1474.8 489.6L1471.2 488.9L1467.4 488.4L1463.5 488.1L1459.6 488.0L1455.8 488.0L1452.1 488.3L1448.8 488.7L1445.8 489.4L1443.2 490.2L1441.1 491.1L1439.6 492.2L1438.6 493.3L1438.3 494.6L1438.5 495.8L1439.4 497.1L1440.9 498.4L1442.9 499.6L1445.5 500.7L1448.4 501.7L1451.8 502.6L1455.5 503.3L1459.3 503.8L1463.3 504.2L1467.3 504.3L1471.1 504.2L1474.8 504.0L1478.2 503.5L1481.2 502.8Z" fill="none" stroke="#141414" stroke-width="1.3"/>
<clipPath id="cc3"><path d="M1250.6 639.1L1253.2 637.9L1255.3 636.4L1256.7 634.9L1257.4 633.2L1257.4 631.6L1256.7 629.9L1255.4 628.3L1253.3 626.7L1250.7 625.3L1247.6 624.0L1244.1 622.9L1240.1 622.0L1235.9 621.3L1231.6 620.9L1227.2 620.7L1222.8 620.8L1218.6 621.2L1214.6 621.8L1211.0 622.6L1207.8 623.6L1205.1 624.9L1203.0 626.3L1201.6 627.8L1200.8 629.4L1200.7 631.1L1201.3 632.8L1202.6 634.4L1204.5 636.0L1207.1 637.5L1210.2 638.8L1213.8 639.9L1217.7 640.8L1222.0 641.5L1226.4 642.0L1230.9 642.1L1235.4 642.0L1239.7 641.7L1243.7 641.1L1247.4 640.2Z"/></clipPath>
<path d="M1250.6 639.1L1253.2 637.9L1255.3 636.4L1256.7 634.9L1257.4 633.2L1257.4 631.6L1256.7 629.9L1255.4 628.3L1253.3 626.7L1250.7 625.3L1247.6 624.0L1244.1 622.9L1240.1 622.0L1235.9 621.3L1231.6 620.9L1227.2 620.7L1222.8 620.8L1218.6 621.2L1214.6 621.8L1211.0 622.6L1207.8 623.6L1205.1 624.9L1203.0 626.3L1201.6 627.8L1200.8 629.4L1200.7 631.1L1201.3 632.8L1202.6 634.4L1204.5 636.0L1207.1 637.5L1210.2 638.8L1213.8 639.9L1217.7 640.8L1222.0 641.5L1226.4 642.0L1230.9 642.1L1235.4 642.0L1239.7 641.7L1243.7 641.1L1247.4 640.2Z" fill="#85847d"/>
<path d="M1250.4 643.8L1253.0 642.6L1255.1 641.1L1256.5 639.6L1257.2 637.9L1257.2 636.2L1256.5 634.6L1255.1 632.9L1253.1 631.4L1250.5 629.9L1247.4 628.6L1243.9 627.5L1239.9 626.6L1235.7 626.0L1231.4 625.5L1227.0 625.4L1222.6 625.5L1218.4 625.8L1214.4 626.4L1210.8 627.2L1207.6 628.3L1204.9 629.5L1202.8 630.9L1201.4 632.5L1200.6 634.1L1200.5 635.8L1201.1 637.4L1202.4 639.1L1204.3 640.7L1206.9 642.2L1210.0 643.5L1213.6 644.6L1217.5 645.5L1221.8 646.2L1226.2 646.7L1230.7 646.9L1235.2 646.8L1239.5 646.4L1243.5 645.8L1247.2 644.9Z" fill="#8e8d86" stroke="#2a2a28" stroke-width=".8" clip-path="url(#cc3)"/>
<path d="M1250.6 639.1L1253.2 637.9L1255.3 636.4L1256.7 634.9L1257.4 633.2L1257.4 631.6L1256.7 629.9L1255.4 628.3L1253.3 626.7L1250.7 625.3L1247.6 624.0L1244.1 622.9L1240.1 622.0L1235.9 621.3L1231.6 620.9L1227.2 620.7L1222.8 620.8L1218.6 621.2L1214.6 621.8L1211.0 622.6L1207.8 623.6L1205.1 624.9L1203.0 626.3L1201.6 627.8L1200.8 629.4L1200.7 631.1L1201.3 632.8L1202.6 634.4L1204.5 636.0L1207.1 637.5L1210.2 638.8L1213.8 639.9L1217.7 640.8L1222.0 641.5L1226.4 642.0L1230.9 642.1L1235.4 642.0L1239.7 641.7L1243.7 641.1L1247.4 640.2Z" fill="none" stroke="#141414" stroke-width="1.3"/>
<path d="M764.9 508.0L1225.9 683.1L1616.7 521.8L1155.6 389.9Z" fill="none" stroke="#141414" stroke-width="1.1" stroke-linejoin="round" /><path d="M392.0 770.0L800.0 1000.0L1093.0 880.0L1105.0 900.0L812.0 1026.0L384.0 796.0Z" fill="#000" opacity=".26" filter="url(#blur8)"/>
<path d="M807.0 973.4L1092.8 837.4L1092.8 884.8L1027.8 916.3L1023.8 892.6L984.4 910.4L984.4 928.1L966.7 936.5L925.3 945.9L807.0 998.1Z" fill="#5a5853" stroke="#141414" stroke-width="1" stroke-linejoin="round" />
<path d="M984.4 910.4L1023.8 892.6L1027.8 916.3L1008.0 921.0L984.4 928.1Z" fill="#3a3936" />
<path d="M987.0 909.0L990.5 907.4L988.5 925.5L985.0 927.0Z" fill="#706f6a" stroke="#141414" stroke-width="0.6" stroke-linejoin="round" />
<path d="M994.4 905.7L997.9 904.1L995.9 922.5L992.4 924.0Z" fill="#706f6a" stroke="#141414" stroke-width="0.6" stroke-linejoin="round" />
<path d="M1001.8 902.4L1005.3 900.8L1003.3 919.5L999.8 921.0Z" fill="#706f6a" stroke="#141414" stroke-width="0.6" stroke-linejoin="round" />
<path d="M1009.2 899.1L1012.7 897.5L1010.7 916.5L1007.2 918.0Z" fill="#706f6a" stroke="#141414" stroke-width="0.6" stroke-linejoin="round" />
<path d="M1016.6 895.8L1020.1 894.2L1018.1 913.5L1014.6 915.0Z" fill="#706f6a" stroke="#141414" stroke-width="0.6" stroke-linejoin="round" />
<path d="M984.4 910.4L1023.8 892.6L1027.8 916.3L1020.0 919.0L984.4 928.1Z" fill="none" stroke="#141414" stroke-width="0.9" stroke-linejoin="round" />
<path d="M807.0 992.2L984.4 910.4" fill="none" stroke="#141414" stroke-width="0.9" />
<path d="M807.0 998.1L925.3 945.9L966.7 936.5L984.4 928.1L984.4 921.0L807.0 1002.5Z" fill="#494843" />
<path d="M393.8 754.0L779.4 971.5L779.4 997.1L395.3 770.8Z" fill="url(#gkbf)" stroke="#141414" stroke-width="1" stroke-linejoin="round" />
<path d="M395.3 770.8L779.4 997.1L782.4 1003.5L398.9 782.4Z" fill="#5d5b55" stroke="#141414" stroke-width="1" stroke-linejoin="round" />
<path d="M779.4 971.5L793.0 975.5L807.0 973.4L807.0 998.1L793.0 1000.5L779.4 997.1Z" fill="url(#gkbc)" stroke="#141414" stroke-width="1" stroke-linejoin="round" />
<path d="M779.4 997.1L793.0 1000.5L807.0 998.1L805.0 1004.0L793.0 1006.5L782.4 1003.5Z" fill="#55534e" stroke="#141414" stroke-width="1" stroke-linejoin="round" />
<path d="M391.6 748.9L668.0 652.2L679.7 648.9L691.0 651.5L1092.8 837.4L807.0 973.4L793.0 975.5L779.4 971.5L393.8 754.0Z" fill="#77736b" stroke="#141414" stroke-width="1" stroke-linejoin="round" />
<path d="M682.0 650.0L691.0 651.5L1092.8 837.4L1009.0 814.8L705.8 673.8Z" fill="#8c8b84" stroke="#141414" stroke-width="0.9" stroke-linejoin="round" />
<path d="M964.7 835.5L1009.0 814.8" fill="none" stroke="#141414" stroke-width="0.9" />
<path d="M391.6 748.9L465.7 757.0" fill="none" stroke="#141414" stroke-width="0.9" />
<path d="M769.6 924.2L789.3 971.5" fill="none" stroke="#141414" stroke-width="0.9" />
<path d="M440.7 742.2L812.2 945.7L997.5 864.2L619.6 683.0Z" fill="#4b4a46" stroke="#141414" stroke-width="1.2" stroke-linejoin="round" />
<path d="M647.5 669.7L664.7 677.9L664.7 680.7L647.5 672.5Z" fill="#8a8983" stroke="#141414" stroke-width="0.8" stroke-linejoin="round" /><path d="M664.7 677.9L685.9 669.7L685.9 672.5L664.7 680.7Z" fill="#5f5d58" stroke="#141414" stroke-width="0.8" stroke-linejoin="round" /><path d="M647.5 669.7L668.1 661.5L685.9 669.7L664.7 677.9Z" fill="#7b776f" stroke="#141414" stroke-width="0.9" stroke-linejoin="round" />
<path d="M681.1 688.9L703.7 699.9L703.7 702.5L681.1 691.5Z" fill="#8a8983" stroke="#141414" stroke-width="0.8" stroke-linejoin="round" /><path d="M703.7 699.9L730.4 689.6L730.4 692.2L703.7 702.5Z" fill="#5f5d58" stroke="#141414" stroke-width="0.8" stroke-linejoin="round" /><path d="M681.1 688.9L705.8 677.9L730.4 689.6L703.7 699.9Z" fill="#7b776f" stroke="#141414" stroke-width="0.9" stroke-linejoin="round" />
<path d="M685.2 688.2L705.8 680.0L723.6 688.2L703.7 695.8Z" fill="#7d7971" stroke="#141414" stroke-width="0.8" stroke-linejoin="round" />
<path d="M599.5 676.8L610.7 682.2L612.5 702.0L592.9 692.5Z" fill="url(#gkf0)" stroke="#141414" stroke-width="0.9" stroke-linejoin="round" /><path d="M610.7 682.2L627.3 676.7L639.0 693.1L612.5 702.0Z" fill="url(#gkr0)" stroke="#141414" stroke-width="0.9" stroke-linejoin="round" /><path d="M599.5 676.8L610.7 682.2L627.3 676.7L616.1 671.4Z" fill="#7b776f" stroke="#141414" stroke-width="0.9" stroke-linejoin="round" />
<path d="M620.7 687.0L632.1 692.5L633.9 712.5L614.0 702.8Z" fill="url(#gkf0)" stroke="#141414" stroke-width="0.9" stroke-linejoin="round" /><path d="M632.1 692.5L648.8 687.0L660.5 703.4L633.9 712.5Z" fill="url(#gkr0)" stroke="#141414" stroke-width="0.9" stroke-linejoin="round" /><path d="M620.7 687.0L632.1 692.5L648.8 687.0L637.3 681.5Z" fill="#7b776f" stroke="#141414" stroke-width="0.9" stroke-linejoin="round" />
<path d="M642.3 697.4L676.2 713.7L678.0 734.1L635.4 713.3Z" fill="url(#gkf0)" stroke="#141414" stroke-width="0.9" stroke-linejoin="round" /><path d="M676.2 713.7L692.9 707.9L704.8 724.7L678.0 734.1Z" fill="url(#gkr0)" stroke="#141414" stroke-width="0.9" stroke-linejoin="round" /><path d="M642.3 697.4L676.2 713.7L692.9 707.9L659.0 691.8Z" fill="#7b776f" stroke="#141414" stroke-width="0.9" stroke-linejoin="round" />
<path d="M686.8 718.8L722.0 735.8L723.9 756.6L679.6 734.9Z" fill="url(#gkf0)" stroke="#141414" stroke-width="0.9" stroke-linejoin="round" /><path d="M722.0 735.8L738.8 729.7L750.7 746.7L723.9 756.6Z" fill="url(#gkr0)" stroke="#141414" stroke-width="0.9" stroke-linejoin="round" /><path d="M686.8 718.8L722.0 735.8L738.8 729.7L703.6 713.0Z" fill="#7b776f" stroke="#141414" stroke-width="0.9" stroke-linejoin="round" />
<path d="M733.0 741.1L769.6 758.7L771.5 779.9L725.5 757.4Z" fill="url(#gkf0)" stroke="#141414" stroke-width="0.9" stroke-linejoin="round" /><path d="M769.6 758.7L786.5 752.4L798.5 769.6L771.5 779.9Z" fill="url(#gkr0)" stroke="#141414" stroke-width="0.9" stroke-linejoin="round" /><path d="M733.0 741.1L769.6 758.7L786.5 752.4L749.8 735.0Z" fill="#7b776f" stroke="#141414" stroke-width="0.9" stroke-linejoin="round" />
<path d="M781.0 764.2L819.1 782.5L821.1 804.1L773.2 780.7Z" fill="url(#gkf0)" stroke="#141414" stroke-width="0.9" stroke-linejoin="round" /><path d="M819.1 782.5L836.0 775.9L848.1 793.5L821.1 804.1Z" fill="url(#gkr0)" stroke="#141414" stroke-width="0.9" stroke-linejoin="round" /><path d="M781.0 764.2L819.1 782.5L836.0 775.9L797.9 757.8Z" fill="#7b776f" stroke="#141414" stroke-width="0.9" stroke-linejoin="round" />
<path d="M831.0 788.2L870.6 807.3L872.7 829.4L822.8 805.0Z" fill="url(#gkf0)" stroke="#141414" stroke-width="0.9" stroke-linejoin="round" /><path d="M870.6 807.3L887.6 800.5L899.8 818.3L872.7 829.4Z" fill="url(#gkr0)" stroke="#141414" stroke-width="0.9" stroke-linejoin="round" /><path d="M831.0 788.2L870.6 807.3L887.6 800.5L848.0 781.6Z" fill="#7b776f" stroke="#141414" stroke-width="0.9" stroke-linejoin="round" />
<path d="M883.1 813.3L897.2 820.1L899.3 842.4L874.5 830.3Z" fill="url(#gkf0)" stroke="#141414" stroke-width="0.9" stroke-linejoin="round" /><path d="M897.2 820.1L914.2 813.1L926.5 831.1L899.3 842.4Z" fill="url(#gkr0)" stroke="#141414" stroke-width="0.9" stroke-linejoin="round" /><path d="M883.1 813.3L897.2 820.1L914.2 813.1L900.1 806.4Z" fill="#7b776f" stroke="#141414" stroke-width="0.9" stroke-linejoin="round" />
<path d="M909.9 826.2L924.4 833.1L926.4 855.7L901.2 843.3Z" fill="url(#gkf0)" stroke="#141414" stroke-width="0.9" stroke-linejoin="round" /><path d="M924.4 833.1L941.4 826.0L953.6 844.1L926.4 855.7Z" fill="url(#gkr0)" stroke="#141414" stroke-width="0.9" stroke-linejoin="round" /><path d="M909.9 826.2L924.4 833.1L941.4 826.0L926.9 819.1Z" fill="#7b776f" stroke="#141414" stroke-width="0.9" stroke-linejoin="round" />
<path d="M937.3 839.4L966.1 853.2L968.3 876.2L928.4 856.6Z" fill="url(#gkf0)" stroke="#141414" stroke-width="0.9" stroke-linejoin="round" /><path d="M966.1 853.2L983.2 845.9L995.5 864.2L968.3 876.2Z" fill="#8b8c87" stroke="#141414" stroke-width="0.9" stroke-linejoin="round" /><path d="M937.3 839.4L966.1 853.2L983.2 845.9L954.4 832.2Z" fill="#7b776f" stroke="#141414" stroke-width="0.9" stroke-linejoin="round" />
<path d="M570.4 686.3L581.6 691.8L583.4 711.8L563.9 702.1Z" fill="url(#gkf0)" stroke="#141414" stroke-width="0.9" stroke-linejoin="round" /><path d="M581.6 691.8L598.5 686.2L610.4 702.7L583.4 711.8Z" fill="url(#gkr0)" stroke="#141414" stroke-width="0.9" stroke-linejoin="round" /><path d="M570.4 686.3L581.6 691.8L598.5 686.2L587.3 680.8Z" fill="#7b776f" stroke="#141414" stroke-width="0.9" stroke-linejoin="round" />
<path d="M591.6 696.7L603.0 702.3L604.8 722.5L584.9 712.6Z" fill="url(#gkf0)" stroke="#141414" stroke-width="0.9" stroke-linejoin="round" /><path d="M603.0 702.3L619.9 696.6L631.9 713.2L604.8 722.5Z" fill="url(#gkr0)" stroke="#141414" stroke-width="0.9" stroke-linejoin="round" /><path d="M591.6 696.7L603.0 702.3L619.9 696.6L608.5 691.1Z" fill="#7b776f" stroke="#141414" stroke-width="0.9" stroke-linejoin="round" />
<path d="M613.1 707.3L624.7 713.0L626.5 733.4L606.3 723.3Z" fill="url(#gkf0)" stroke="#141414" stroke-width="0.9" stroke-linejoin="round" /><path d="M624.7 713.0L641.7 707.2L653.7 723.9L626.5 733.4Z" fill="url(#gkr0)" stroke="#141414" stroke-width="0.9" stroke-linejoin="round" /><path d="M613.1 707.3L624.7 713.0L641.7 707.2L630.1 701.6Z" fill="#7b776f" stroke="#141414" stroke-width="0.9" stroke-linejoin="round" />
<path d="M635.1 718.1L646.9 723.9L648.7 744.5L628.1 734.2Z" fill="url(#gkf0)" stroke="#141414" stroke-width="0.9" stroke-linejoin="round" /><path d="M646.9 723.9L663.9 718.0L676.0 734.9L648.7 744.5Z" fill="url(#gkr0)" stroke="#141414" stroke-width="0.9" stroke-linejoin="round" /><path d="M635.1 718.1L646.9 723.9L663.9 718.0L652.1 712.2Z" fill="#7b776f" stroke="#141414" stroke-width="0.9" stroke-linejoin="round" />
<path d="M657.5 729.1L669.5 735.0L671.4 755.8L650.3 745.3Z" fill="url(#gkf0)" stroke="#141414" stroke-width="0.9" stroke-linejoin="round" /><path d="M669.5 735.0L686.6 729.0L698.7 746.0L671.4 755.8Z" fill="url(#gkr0)" stroke="#141414" stroke-width="0.9" stroke-linejoin="round" /><path d="M657.5 729.1L669.5 735.0L686.6 729.0L674.5 723.1Z" fill="#7b776f" stroke="#141414" stroke-width="0.9" stroke-linejoin="round" />
<path d="M680.3 740.3L692.5 746.3L694.4 767.3L673.0 756.6Z" fill="url(#gkf0)" stroke="#141414" stroke-width="0.9" stroke-linejoin="round" /><path d="M692.5 746.3L709.7 740.2L721.8 757.3L694.4 767.3Z" fill="url(#gkr0)" stroke="#141414" stroke-width="0.9" stroke-linejoin="round" /><path d="M680.3 740.3L692.5 746.3L709.7 740.2L697.4 734.2Z" fill="#7b776f" stroke="#141414" stroke-width="0.9" stroke-linejoin="round" />
<path d="M703.5 751.7L716.0 757.9L718.0 779.1L696.1 768.1Z" fill="url(#gkf0)" stroke="#141414" stroke-width="0.9" stroke-linejoin="round" /><path d="M716.0 757.9L733.2 751.6L745.4 768.9L718.0 779.1Z" fill="url(#gkr0)" stroke="#141414" stroke-width="0.9" stroke-linejoin="round" /><path d="M703.5 751.7L716.0 757.9L733.2 751.6L720.7 745.5Z" fill="#7b776f" stroke="#141414" stroke-width="0.9" stroke-linejoin="round" />
<path d="M727.2 763.4L740.0 769.7L742.0 791.1L719.6 779.9Z" fill="url(#gkf0)" stroke="#141414" stroke-width="0.9" stroke-linejoin="round" /><path d="M740.0 769.7L757.2 763.3L769.5 780.6L742.0 791.1Z" fill="url(#gkr0)" stroke="#141414" stroke-width="0.9" stroke-linejoin="round" /><path d="M727.2 763.4L740.0 769.7L757.2 763.3L744.4 757.1Z" fill="#7b776f" stroke="#141414" stroke-width="0.9" stroke-linejoin="round" />
<path d="M751.4 775.3L764.5 781.7L766.4 803.3L743.7 791.9Z" fill="url(#gkf0)" stroke="#141414" stroke-width="0.9" stroke-linejoin="round" /><path d="M764.5 781.7L781.7 775.1L794.0 792.7L766.4 803.3Z" fill="url(#gkr0)" stroke="#141414" stroke-width="0.9" stroke-linejoin="round" /><path d="M751.4 775.3L764.5 781.7L781.7 775.1L768.7 768.8Z" fill="#7b776f" stroke="#141414" stroke-width="0.9" stroke-linejoin="round" />
<path d="M776.1 787.4L789.4 793.9L791.4 815.8L768.2 804.2Z" fill="url(#gkf0)" stroke="#141414" stroke-width="0.9" stroke-linejoin="round" /><path d="M789.4 793.9L806.7 787.3L819.0 804.9L791.4 815.8Z" fill="url(#gkr0)" stroke="#141414" stroke-width="0.9" stroke-linejoin="round" /><path d="M776.1 787.4L789.4 793.9L806.7 787.3L793.4 780.8Z" fill="#7b776f" stroke="#141414" stroke-width="0.9" stroke-linejoin="round" />
<path d="M801.3 799.8L814.9 806.5L816.9 828.5L793.2 816.7Z" fill="url(#gkf0)" stroke="#141414" stroke-width="0.9" stroke-linejoin="round" /><path d="M814.9 806.5L832.2 799.6L844.6 817.4L816.9 828.5Z" fill="url(#gkr0)" stroke="#141414" stroke-width="0.9" stroke-linejoin="round" /><path d="M801.3 799.8L814.9 806.5L832.2 799.6L818.6 793.1Z" fill="#7b776f" stroke="#141414" stroke-width="0.9" stroke-linejoin="round" />
<path d="M827.0 812.4L840.9 819.2L842.9 841.5L818.7 829.4Z" fill="url(#gkf0)" stroke="#141414" stroke-width="0.9" stroke-linejoin="round" /><path d="M840.9 819.2L858.2 812.3L870.6 830.2L842.9 841.5Z" fill="url(#gkr0)" stroke="#141414" stroke-width="0.9" stroke-linejoin="round" /><path d="M827.0 812.4L840.9 819.2L858.2 812.3L844.4 805.6Z" fill="#7b776f" stroke="#141414" stroke-width="0.9" stroke-linejoin="round" />
<path d="M853.3 825.3L867.4 832.3L869.5 854.8L844.8 842.5Z" fill="url(#gkf0)" stroke="#141414" stroke-width="0.9" stroke-linejoin="round" /><path d="M867.4 832.3L884.8 825.2L897.2 843.3L869.5 854.8Z" fill="url(#gkr0)" stroke="#141414" stroke-width="0.9" stroke-linejoin="round" /><path d="M853.3 825.3L867.4 832.3L884.8 825.2L870.6 818.3Z" fill="#7b776f" stroke="#141414" stroke-width="0.9" stroke-linejoin="round" />
<path d="M880.1 838.5L894.5 845.6L896.6 868.4L871.4 855.8Z" fill="url(#gkf0)" stroke="#141414" stroke-width="0.9" stroke-linejoin="round" /><path d="M894.5 845.6L911.9 838.3L924.4 856.6L896.6 868.4Z" fill="url(#gkr0)" stroke="#141414" stroke-width="0.9" stroke-linejoin="round" /><path d="M880.1 838.5L894.5 845.6L911.9 838.3L897.4 831.3Z" fill="#7b776f" stroke="#141414" stroke-width="0.9" stroke-linejoin="round" />
<path d="M907.4 852.0L936.3 866.1L938.4 889.3L898.5 869.3Z" fill="url(#gkf0)" stroke="#141414" stroke-width="0.9" stroke-linejoin="round" /><path d="M936.3 866.1L953.7 858.6L966.2 877.1L938.4 889.3Z" fill="#8b8c87" stroke="#141414" stroke-width="0.9" stroke-linejoin="round" /><path d="M907.4 852.0L936.3 866.1L953.7 858.6L924.8 844.6Z" fill="#7b776f" stroke="#141414" stroke-width="0.9" stroke-linejoin="round" />
<path d="M540.9 696.0L562.6 706.9L564.4 727.2L534.4 711.8Z" fill="url(#gkf0)" stroke="#141414" stroke-width="0.9" stroke-linejoin="round" /><path d="M562.6 706.9L579.8 701.1L592.0 717.8L564.4 727.2Z" fill="url(#gkr0)" stroke="#141414" stroke-width="0.9" stroke-linejoin="round" /><path d="M540.9 696.0L562.6 706.9L579.8 701.1L558.1 690.4Z" fill="#7b776f" stroke="#141414" stroke-width="0.9" stroke-linejoin="round" />
<path d="M572.6 711.9L584.0 717.7L585.9 738.1L565.9 727.9Z" fill="url(#gkf0)" stroke="#141414" stroke-width="0.9" stroke-linejoin="round" /><path d="M584.0 717.7L601.4 711.8L613.5 728.6L585.9 738.1Z" fill="url(#gkr0)" stroke="#141414" stroke-width="0.9" stroke-linejoin="round" /><path d="M572.6 711.9L584.0 717.7L601.4 711.8L589.9 706.1Z" fill="#7b776f" stroke="#141414" stroke-width="0.9" stroke-linejoin="round" />
<path d="M594.3 722.8L605.9 728.7L607.8 749.3L587.4 738.9Z" fill="url(#gkf0)" stroke="#141414" stroke-width="0.9" stroke-linejoin="round" /><path d="M605.9 728.7L623.3 722.7L635.5 739.6L607.8 749.3Z" fill="url(#gkr0)" stroke="#141414" stroke-width="0.9" stroke-linejoin="round" /><path d="M594.3 722.8L605.9 728.7L623.3 722.7L611.6 716.9Z" fill="#7b776f" stroke="#141414" stroke-width="0.9" stroke-linejoin="round" />
<path d="M616.4 733.9L628.2 739.9L630.1 760.8L609.3 750.1Z" fill="url(#gkf0)" stroke="#141414" stroke-width="0.9" stroke-linejoin="round" /><path d="M628.2 739.9L645.6 733.8L657.9 750.8L630.1 760.8Z" fill="url(#gkr0)" stroke="#141414" stroke-width="0.9" stroke-linejoin="round" /><path d="M616.4 733.9L628.2 739.9L645.6 733.8L633.7 727.9Z" fill="#7b776f" stroke="#141414" stroke-width="0.9" stroke-linejoin="round" />
<path d="M638.9 745.2L651.0 751.3L652.9 772.4L631.7 761.6Z" fill="url(#gkf0)" stroke="#141414" stroke-width="0.9" stroke-linejoin="round" /><path d="M651.0 751.3L668.4 745.1L680.8 762.3L652.9 772.4Z" fill="url(#gkr0)" stroke="#141414" stroke-width="0.9" stroke-linejoin="round" /><path d="M638.9 745.2L651.0 751.3L668.4 745.1L656.3 739.1Z" fill="#7b776f" stroke="#141414" stroke-width="0.9" stroke-linejoin="round" />
<path d="M661.8 756.7L674.2 763.0L676.1 784.2L654.5 773.2Z" fill="url(#gkf0)" stroke="#141414" stroke-width="0.9" stroke-linejoin="round" /><path d="M674.2 763.0L691.7 756.6L704.1 773.9L676.1 784.2Z" fill="url(#gkr0)" stroke="#141414" stroke-width="0.9" stroke-linejoin="round" /><path d="M661.8 756.7L674.2 763.0L691.7 756.6L679.3 750.5Z" fill="#7b776f" stroke="#141414" stroke-width="0.9" stroke-linejoin="round" />
<path d="M685.2 768.5L697.8 774.8L699.8 796.4L677.8 785.1Z" fill="url(#gkf0)" stroke="#141414" stroke-width="0.9" stroke-linejoin="round" /><path d="M697.8 774.8L715.4 768.4L727.8 785.8L699.8 796.4Z" fill="url(#gkr0)" stroke="#141414" stroke-width="0.9" stroke-linejoin="round" /><path d="M685.2 768.5L697.8 774.8L715.4 768.4L702.8 762.1Z" fill="#7b776f" stroke="#141414" stroke-width="0.9" stroke-linejoin="round" />
<path d="M709.1 780.5L722.0 787.0L724.0 808.7L701.5 797.2Z" fill="url(#gkf0)" stroke="#141414" stroke-width="0.9" stroke-linejoin="round" /><path d="M722.0 787.0L739.6 780.4L752.0 798.0L724.0 808.7Z" fill="url(#gkr0)" stroke="#141414" stroke-width="0.9" stroke-linejoin="round" /><path d="M709.1 780.5L722.0 787.0L739.6 780.4L726.7 774.0Z" fill="#7b776f" stroke="#141414" stroke-width="0.9" stroke-linejoin="round" />
<path d="M733.5 792.8L746.6 799.3L748.6 821.3L725.7 809.6Z" fill="url(#gkf0)" stroke="#141414" stroke-width="0.9" stroke-linejoin="round" /><path d="M746.6 799.3L764.2 792.6L776.8 810.3L748.6 821.3Z" fill="url(#gkr0)" stroke="#141414" stroke-width="0.9" stroke-linejoin="round" /><path d="M733.5 792.8L746.6 799.3L764.2 792.6L751.1 786.1Z" fill="#7b776f" stroke="#141414" stroke-width="0.9" stroke-linejoin="round" />
<path d="M758.4 805.2L771.8 812.0L773.8 834.2L750.4 822.2Z" fill="url(#gkf0)" stroke="#141414" stroke-width="0.9" stroke-linejoin="round" /><path d="M771.8 812.0L789.4 805.1L802.0 823.0L773.8 834.2Z" fill="url(#gkr0)" stroke="#141414" stroke-width="0.9" stroke-linejoin="round" /><path d="M758.4 805.2L771.8 812.0L789.4 805.1L776.0 798.4Z" fill="#7b776f" stroke="#141414" stroke-width="0.9" stroke-linejoin="round" />
<path d="M783.8 818.0L797.4 824.9L799.5 847.3L775.6 835.1Z" fill="url(#gkf0)" stroke="#141414" stroke-width="0.9" stroke-linejoin="round" /><path d="M797.4 824.9L815.1 817.8L827.7 835.9L799.5 847.3Z" fill="url(#gkr0)" stroke="#141414" stroke-width="0.9" stroke-linejoin="round" /><path d="M783.8 818.0L797.4 824.9L815.1 817.8L801.4 811.1Z" fill="#7b776f" stroke="#141414" stroke-width="0.9" stroke-linejoin="round" />
<path d="M809.7 831.0L823.7 838.0L825.7 860.7L801.3 848.2Z" fill="url(#gkf0)" stroke="#141414" stroke-width="0.9" stroke-linejoin="round" /><path d="M823.7 838.0L841.4 830.9L854.0 849.0L825.7 860.7Z" fill="url(#gkr0)" stroke="#141414" stroke-width="0.9" stroke-linejoin="round" /><path d="M809.7 831.0L823.7 838.0L841.4 830.9L827.4 823.9Z" fill="#7b776f" stroke="#141414" stroke-width="0.9" stroke-linejoin="round" />
<path d="M836.2 844.3L850.4 851.5L852.5 874.4L827.6 861.6Z" fill="url(#gkf0)" stroke="#141414" stroke-width="0.9" stroke-linejoin="round" /><path d="M850.4 851.5L868.2 844.2L880.9 862.5L852.5 874.4Z" fill="url(#gkr0)" stroke="#141414" stroke-width="0.9" stroke-linejoin="round" /><path d="M836.2 844.3L850.4 851.5L868.2 844.2L853.9 837.1Z" fill="#7b776f" stroke="#141414" stroke-width="0.9" stroke-linejoin="round" />
<path d="M863.2 857.9L877.8 865.2L879.9 888.4L854.4 875.4Z" fill="url(#gkf0)" stroke="#141414" stroke-width="0.9" stroke-linejoin="round" /><path d="M877.8 865.2L895.5 857.7L908.3 876.2L879.9 888.4Z" fill="url(#gkr0)" stroke="#141414" stroke-width="0.9" stroke-linejoin="round" /><path d="M863.2 857.9L877.8 865.2L895.5 857.7L881.0 850.5Z" fill="#7b776f" stroke="#141414" stroke-width="0.9" stroke-linejoin="round" />
<path d="M510.8 705.8L537.7 719.6L539.5 740.2L504.3 721.8Z" fill="url(#gkf0)" stroke="#141414" stroke-width="0.9" stroke-linejoin="round" /><path d="M537.7 719.6L555.3 713.8L567.6 730.6L539.5 740.2Z" fill="url(#gkr0)" stroke="#141414" stroke-width="0.9" stroke-linejoin="round" /><path d="M510.8 705.8L537.7 719.6L555.3 713.8L528.3 700.1Z" fill="#7b776f" stroke="#141414" stroke-width="0.9" stroke-linejoin="round" />
<path d="M547.7 724.8L559.2 730.7L561.0 751.4L541.0 740.9Z" fill="url(#gkf0)" stroke="#141414" stroke-width="0.9" stroke-linejoin="round" /><path d="M559.2 730.7L576.8 724.7L589.2 741.7L561.0 751.4Z" fill="url(#gkr0)" stroke="#141414" stroke-width="0.9" stroke-linejoin="round" /><path d="M547.7 724.8L559.2 730.7L576.8 724.7L565.3 718.9Z" fill="#7b776f" stroke="#141414" stroke-width="0.9" stroke-linejoin="round" />
<path d="M569.4 735.9L581.1 741.9L582.9 762.9L562.5 752.2Z" fill="url(#gkf0)" stroke="#141414" stroke-width="0.9" stroke-linejoin="round" /><path d="M581.1 741.9L598.8 735.8L611.2 752.9L582.9 762.9Z" fill="url(#gkr0)" stroke="#141414" stroke-width="0.9" stroke-linejoin="round" /><path d="M569.4 735.9L581.1 741.9L598.8 735.8L587.1 729.9Z" fill="#7b776f" stroke="#141414" stroke-width="0.9" stroke-linejoin="round" />
<path d="M591.5 747.3L603.4 753.4L605.3 774.5L584.5 763.7Z" fill="url(#gkf0)" stroke="#141414" stroke-width="0.9" stroke-linejoin="round" /><path d="M603.4 753.4L621.1 747.2L633.7 764.4L605.3 774.5Z" fill="url(#gkr0)" stroke="#141414" stroke-width="0.9" stroke-linejoin="round" /><path d="M591.5 747.3L603.4 753.4L621.1 747.2L609.2 741.1Z" fill="#7b776f" stroke="#141414" stroke-width="0.9" stroke-linejoin="round" />
<path d="M614.0 758.9L626.2 765.1L628.1 786.5L606.9 775.4Z" fill="url(#gkf0)" stroke="#141414" stroke-width="0.9" stroke-linejoin="round" /><path d="M626.2 765.1L644.0 758.7L656.5 776.1L628.1 786.5Z" fill="url(#gkr0)" stroke="#141414" stroke-width="0.9" stroke-linejoin="round" /><path d="M614.0 758.9L626.2 765.1L644.0 758.7L631.8 752.6Z" fill="#7b776f" stroke="#141414" stroke-width="0.9" stroke-linejoin="round" />
<path d="M637.0 770.7L649.4 777.0L651.4 798.6L629.7 787.3Z" fill="url(#gkf0)" stroke="#141414" stroke-width="0.9" stroke-linejoin="round" /><path d="M649.4 777.0L667.3 770.6L679.9 788.0L651.4 798.6Z" fill="url(#gkr0)" stroke="#141414" stroke-width="0.9" stroke-linejoin="round" /><path d="M637.0 770.7L649.4 777.0L667.3 770.6L654.9 764.3Z" fill="#7b776f" stroke="#141414" stroke-width="0.9" stroke-linejoin="round" />
<path d="M660.5 782.7L673.1 789.2L675.1 811.0L653.0 799.5Z" fill="url(#gkf0)" stroke="#141414" stroke-width="0.9" stroke-linejoin="round" /><path d="M673.1 789.2L691.0 782.6L703.7 800.2L675.1 811.0Z" fill="url(#gkr0)" stroke="#141414" stroke-width="0.9" stroke-linejoin="round" /><path d="M660.5 782.7L673.1 789.2L691.0 782.6L678.4 776.2Z" fill="#7b776f" stroke="#141414" stroke-width="0.9" stroke-linejoin="round" />
<path d="M684.4 795.0L697.3 801.6L699.3 823.7L676.8 811.9Z" fill="url(#gkf0)" stroke="#141414" stroke-width="0.9" stroke-linejoin="round" /><path d="M697.3 801.6L715.2 794.9L728.0 812.6L699.3 823.7Z" fill="url(#gkr0)" stroke="#141414" stroke-width="0.9" stroke-linejoin="round" /><path d="M684.4 795.0L697.3 801.6L715.2 794.9L702.3 788.3Z" fill="#7b776f" stroke="#141414" stroke-width="0.9" stroke-linejoin="round" />
<path d="M708.9 807.6L722.0 814.3L724.0 836.6L701.0 824.5Z" fill="url(#gkf0)" stroke="#141414" stroke-width="0.9" stroke-linejoin="round" /><path d="M722.0 814.3L740.0 807.4L752.7 825.3L724.0 836.6Z" fill="url(#gkr0)" stroke="#141414" stroke-width="0.9" stroke-linejoin="round" /><path d="M708.9 807.6L722.0 814.3L740.0 807.4L726.8 800.7Z" fill="#7b776f" stroke="#141414" stroke-width="0.9" stroke-linejoin="round" />
<path d="M733.8 820.4L747.2 827.3L749.3 849.8L725.8 837.5Z" fill="url(#gkf0)" stroke="#141414" stroke-width="0.9" stroke-linejoin="round" /><path d="M747.2 827.3L765.2 820.2L778.0 838.3L749.3 849.8Z" fill="url(#gkr0)" stroke="#141414" stroke-width="0.9" stroke-linejoin="round" /><path d="M733.8 820.4L747.2 827.3L765.2 820.2L751.8 813.4Z" fill="#7b776f" stroke="#141414" stroke-width="0.9" stroke-linejoin="round" />
<path d="M759.2 833.5L773.0 840.5L775.0 863.2L751.0 850.7Z" fill="url(#gkf0)" stroke="#141414" stroke-width="0.9" stroke-linejoin="round" /><path d="M773.0 840.5L791.0 833.3L803.9 851.5L775.0 863.2Z" fill="url(#gkr0)" stroke="#141414" stroke-width="0.9" stroke-linejoin="round" /><path d="M759.2 833.5L773.0 840.5L791.0 833.3L777.3 826.3Z" fill="#7b776f" stroke="#141414" stroke-width="0.9" stroke-linejoin="round" />
<path d="M785.2 846.8L799.2 854.0L801.4 877.0L776.9 864.2Z" fill="url(#gkf0)" stroke="#141414" stroke-width="0.9" stroke-linejoin="round" /><path d="M799.2 854.0L817.3 846.6L830.2 865.0L801.4 877.0Z" fill="url(#gkr0)" stroke="#141414" stroke-width="0.9" stroke-linejoin="round" /><path d="M785.2 846.8L799.2 854.0L817.3 846.6L803.3 839.5Z" fill="#7b776f" stroke="#141414" stroke-width="0.9" stroke-linejoin="round" />
<path d="M811.8 860.5L826.1 867.8L828.2 891.0L803.2 877.9Z" fill="url(#gkf0)" stroke="#141414" stroke-width="0.9" stroke-linejoin="round" /><path d="M826.1 867.8L844.2 860.3L857.2 878.8L828.2 891.0Z" fill="url(#gkr0)" stroke="#141414" stroke-width="0.9" stroke-linejoin="round" /><path d="M811.8 860.5L826.1 867.8L844.2 860.3L829.9 853.0Z" fill="#7b776f" stroke="#141414" stroke-width="0.9" stroke-linejoin="round" />
<path d="M838.9 874.4L874.5 892.7L876.7 916.3L830.1 892.0Z" fill="url(#gkf0)" stroke="#141414" stroke-width="0.9" stroke-linejoin="round" />
<path d="M874.5 892.7L923.5 871.6L936.3 890.2L876.7 916.3Z" fill="#8b8c87" stroke="#141414" stroke-width="0.9" stroke-linejoin="round" />
<path d="M838.9 874.4L874.5 892.7L923.5 871.6L908.6 864.2L881.6 875.7L860.8 865.2Z" fill="#7b776f" stroke="#141414" stroke-width="0.9" stroke-linejoin="round" />
<path d="M480.1 715.8L512.2 732.7L514.0 753.5L473.7 731.9Z" fill="url(#gkf0)" stroke="#141414" stroke-width="0.9" stroke-linejoin="round" /><path d="M512.2 732.7L530.1 726.7L542.7 743.7L514.0 753.5Z" fill="url(#gkr0)" stroke="#141414" stroke-width="0.9" stroke-linejoin="round" /><path d="M480.1 715.8L512.2 732.7L530.1 726.7L498.0 710.0Z" fill="#7b776f" stroke="#141414" stroke-width="0.9" stroke-linejoin="round" />
<path d="M522.2 738.0L533.7 744.0L535.6 765.0L515.5 754.3Z" fill="url(#gkf0)" stroke="#141414" stroke-width="0.9" stroke-linejoin="round" /><path d="M533.7 744.0L551.7 737.9L564.3 755.0L535.6 765.0Z" fill="url(#gkr0)" stroke="#141414" stroke-width="0.9" stroke-linejoin="round" /><path d="M522.2 738.0L533.7 744.0L551.7 737.9L540.2 731.9Z" fill="#7b776f" stroke="#141414" stroke-width="0.9" stroke-linejoin="round" />
<path d="M543.9 749.4L555.6 755.5L557.5 776.7L537.1 765.8Z" fill="url(#gkf0)" stroke="#141414" stroke-width="0.9" stroke-linejoin="round" /><path d="M555.6 755.5L573.7 749.3L586.3 766.5L557.5 776.7Z" fill="url(#gkr0)" stroke="#141414" stroke-width="0.9" stroke-linejoin="round" /><path d="M543.9 749.4L555.6 755.5L573.7 749.3L562.0 743.2Z" fill="#7b776f" stroke="#141414" stroke-width="0.9" stroke-linejoin="round" />
<path d="M566.0 761.0L577.9 767.3L579.9 788.7L559.0 777.5Z" fill="url(#gkf0)" stroke="#141414" stroke-width="0.9" stroke-linejoin="round" /><path d="M577.9 767.3L596.1 760.9L608.8 778.3L579.9 788.7Z" fill="url(#gkr0)" stroke="#141414" stroke-width="0.9" stroke-linejoin="round" /><path d="M566.0 761.0L577.9 767.3L596.1 760.9L584.1 754.7Z" fill="#7b776f" stroke="#141414" stroke-width="0.9" stroke-linejoin="round" />
<path d="M588.6 772.9L600.8 779.3L602.7 800.9L581.5 789.5Z" fill="url(#gkf0)" stroke="#141414" stroke-width="0.9" stroke-linejoin="round" /><path d="M600.8 779.3L618.9 772.7L631.7 790.3L602.7 800.9Z" fill="url(#gkr0)" stroke="#141414" stroke-width="0.9" stroke-linejoin="round" /><path d="M588.6 772.9L600.8 779.3L618.9 772.7L606.7 766.4Z" fill="#7b776f" stroke="#141414" stroke-width="0.9" stroke-linejoin="round" />
<path d="M611.6 785.0L624.0 791.5L626.0 813.3L604.3 801.7Z" fill="url(#gkf0)" stroke="#141414" stroke-width="0.9" stroke-linejoin="round" /><path d="M624.0 791.5L642.2 784.8L655.1 802.5L626.0 813.3Z" fill="url(#gkr0)" stroke="#141414" stroke-width="0.9" stroke-linejoin="round" /><path d="M611.6 785.0L624.0 791.5L642.2 784.8L629.8 778.4Z" fill="#7b776f" stroke="#141414" stroke-width="0.9" stroke-linejoin="round" />
<path d="M635.1 797.3L647.8 804.0L649.8 826.0L627.6 814.2Z" fill="url(#gkf0)" stroke="#141414" stroke-width="0.9" stroke-linejoin="round" /><path d="M647.8 804.0L666.0 797.2L678.9 815.0L649.8 826.0Z" fill="url(#gkr0)" stroke="#141414" stroke-width="0.9" stroke-linejoin="round" /><path d="M635.1 797.3L647.8 804.0L666.0 797.2L653.4 790.6Z" fill="#7b776f" stroke="#141414" stroke-width="0.9" stroke-linejoin="round" />
<path d="M659.1 809.9L672.0 816.7L674.0 839.0L651.4 826.9Z" fill="url(#gkf0)" stroke="#141414" stroke-width="0.9" stroke-linejoin="round" /><path d="M672.0 816.7L690.3 809.8L703.3 827.7L674.0 839.0Z" fill="url(#gkr0)" stroke="#141414" stroke-width="0.9" stroke-linejoin="round" /><path d="M659.1 809.9L672.0 816.7L690.3 809.8L677.4 803.1Z" fill="#7b776f" stroke="#141414" stroke-width="0.9" stroke-linejoin="round" />
<path d="M683.6 822.8L696.7 829.7L698.8 852.2L675.7 839.9Z" fill="url(#gkf0)" stroke="#141414" stroke-width="0.9" stroke-linejoin="round" /><path d="M696.7 829.7L715.1 822.6L728.1 840.7L698.8 852.2Z" fill="url(#gkr0)" stroke="#141414" stroke-width="0.9" stroke-linejoin="round" /><path d="M683.6 822.8L696.7 829.7L715.1 822.6L701.9 815.8Z" fill="#7b776f" stroke="#141414" stroke-width="0.9" stroke-linejoin="round" />
<path d="M708.6 835.9L722.0 843.0L724.1 865.8L700.5 853.2Z" fill="url(#gkf0)" stroke="#141414" stroke-width="0.9" stroke-linejoin="round" /><path d="M722.0 843.0L740.4 835.7L753.5 854.0L724.1 865.8Z" fill="url(#gkr0)" stroke="#141414" stroke-width="0.9" stroke-linejoin="round" /><path d="M708.6 835.9L722.0 843.0L740.4 835.7L726.9 828.8Z" fill="#7b776f" stroke="#141414" stroke-width="0.9" stroke-linejoin="round" />
<path d="M734.1 849.3L747.8 856.5L749.9 879.6L725.9 866.7Z" fill="url(#gkf0)" stroke="#141414" stroke-width="0.9" stroke-linejoin="round" /><path d="M747.8 856.5L766.3 849.2L779.4 867.5L749.9 879.6Z" fill="url(#gkr0)" stroke="#141414" stroke-width="0.9" stroke-linejoin="round" /><path d="M734.1 849.3L747.8 856.5L766.3 849.2L752.5 842.0Z" fill="#7b776f" stroke="#141414" stroke-width="0.9" stroke-linejoin="round" />
<path d="M760.1 863.0L787.6 877.5L789.7 900.8L751.7 880.5Z" fill="url(#gkf0)" stroke="#141414" stroke-width="0.9" stroke-linejoin="round" /><path d="M787.6 877.5L806.1 869.8L819.3 888.4L789.7 900.8Z" fill="url(#gkr0)" stroke="#141414" stroke-width="0.9" stroke-linejoin="round" /><path d="M760.1 863.0L787.6 877.5L806.1 869.8L778.6 855.6Z" fill="#7b776f" stroke="#141414" stroke-width="0.9" stroke-linejoin="round" />
<path d="M800.3 884.1L814.8 891.8L817.0 915.4L791.6 901.9Z" fill="url(#gkf0)" stroke="#141414" stroke-width="0.9" stroke-linejoin="round" /><path d="M814.8 891.8L833.4 884.0L846.6 902.7L817.0 915.4Z" fill="url(#gkr0)" stroke="#141414" stroke-width="0.9" stroke-linejoin="round" /><path d="M800.3 884.1L814.8 891.8L833.4 884.0L818.8 876.4Z" fill="#7b776f" stroke="#141414" stroke-width="0.9" stroke-linejoin="round" />
<path d="M827.8 898.6L842.7 906.4L844.9 930.3L818.9 916.5Z" fill="url(#gkf0)" stroke="#141414" stroke-width="0.9" stroke-linejoin="round" /><path d="M842.7 906.4L861.2 898.4L874.5 917.3L844.9 930.3Z" fill="#8b8c87" stroke="#141414" stroke-width="0.9" stroke-linejoin="round" /><path d="M827.8 898.6L842.7 906.4L861.2 898.4L846.4 890.7Z" fill="#7b776f" stroke="#141414" stroke-width="0.9" stroke-linejoin="round" />
<path d="M448.9 726.1L459.8 731.9L461.7 752.7L442.5 742.2Z" fill="url(#gkf1)" stroke="#141414" stroke-width="0.9" stroke-linejoin="round" /><path d="M459.8 731.9L478.0 725.9L490.8 742.9L461.7 752.7Z" fill="url(#gkr0)" stroke="#141414" stroke-width="0.9" stroke-linejoin="round" /><path d="M448.9 726.1L459.8 731.9L478.0 725.9L467.0 720.1Z" fill="#7b776f" stroke="#141414" stroke-width="0.9" stroke-linejoin="round" />
<path d="M469.6 737.2L480.8 743.2L482.7 764.2L463.1 753.5Z" fill="url(#gkf1)" stroke="#141414" stroke-width="0.9" stroke-linejoin="round" /><path d="M480.8 743.2L499.1 737.1L511.9 754.2L482.7 764.2Z" fill="url(#gkr0)" stroke="#141414" stroke-width="0.9" stroke-linejoin="round" /><path d="M469.6 737.2L480.8 743.2L499.1 737.1L487.9 731.2Z" fill="#7b776f" stroke="#141414" stroke-width="0.9" stroke-linejoin="round" />
<path d="M490.8 748.6L728.6 876.5L730.7 899.9L484.1 765.0Z" fill="url(#gkf1)" stroke="#141414" stroke-width="0.9" stroke-linejoin="round" /><path d="M728.6 876.5L747.4 868.9L760.8 887.5L730.7 899.9Z" fill="url(#gkr0)" stroke="#141414" stroke-width="0.9" stroke-linejoin="round" /><path d="M490.8 748.6L728.6 876.5L747.4 868.9L509.1 742.4Z" fill="#7b776f" stroke="#141414" stroke-width="0.9" stroke-linejoin="round" />
<path d="M741.0 883.2L755.2 890.9L757.3 914.5L732.5 900.9Z" fill="url(#gkf1)" stroke="#141414" stroke-width="0.9" stroke-linejoin="round" /><path d="M755.2 890.9L774.1 883.0L787.5 901.8L757.3 914.5Z" fill="url(#gkr0)" stroke="#141414" stroke-width="0.9" stroke-linejoin="round" /><path d="M741.0 883.2L755.2 890.9L774.1 883.0L759.9 875.5Z" fill="#7b776f" stroke="#141414" stroke-width="0.9" stroke-linejoin="round" />
<path d="M767.9 897.7L782.3 905.5L784.5 929.4L759.2 915.5Z" fill="url(#gkf1)" stroke="#141414" stroke-width="0.9" stroke-linejoin="round" /><path d="M782.3 905.5L801.3 897.5L814.8 916.4L784.5 929.4Z" fill="url(#gkr0)" stroke="#141414" stroke-width="0.9" stroke-linejoin="round" /><path d="M767.9 897.7L782.3 905.5L801.3 897.5L786.8 889.8Z" fill="#7b776f" stroke="#141414" stroke-width="0.9" stroke-linejoin="round" />
<path d="M795.3 912.5L810.1 920.4L812.3 944.6L786.5 930.4Z" fill="url(#gkf1)" stroke="#141414" stroke-width="0.9" stroke-linejoin="round" /><path d="M810.1 920.4L829.1 912.3L842.6 931.3L812.3 944.6Z" fill="#8b8c87" stroke="#141414" stroke-width="0.9" stroke-linejoin="round" /><path d="M795.3 912.5L810.1 920.4L829.1 912.3L814.3 904.4Z" fill="#7b776f" stroke="#141414" stroke-width="0.9" stroke-linejoin="round" />
<path d="M812.2 945.7L997.5 864.2" fill="none" stroke="#0c0c0c" stroke-width="2" />
<path d="M440.7 742.2L812.2 945.7" fill="none" stroke="#0c0c0c" stroke-width="0.8" />
<path d="M391.6 748.9L668.0 652.2L679.7 648.9L691.0 651.5L1092.8 837.4L807.0 973.4L793.0 975.5L779.4 971.5L393.8 754.0Z" fill="none" stroke="#141414" stroke-width="1.1" stroke-linejoin="round" /></g><defs><radialGradient id="vcs"><stop offset="0" stop-color="#000" stop-opacity=".28"/><stop offset="1" stop-color="#000" stop-opacity="0"/></radialGradient><linearGradient id="vcf" x1="0" y1="0" x2="0" y2="1"><stop offset="0" stop-color="#f4f4f4"/><stop offset="1" stop-color="#dcdcdc"/></linearGradient></defs>
<ellipse cx="1866" cy="238" rx="44" ry="17" fill="url(#vcs)"/>
<path d="M1830.8 180.8L1864.2 171.6L1898.6 180.8L1863.2 192.8Z" fill="#f3f3f3"/>
<path d="M1830.8 180.8L1863.2 192.8L1863.7 241.4L1832.4 224.0Z" fill="url(#vcf)"/>
<path d="M1863.2 192.8L1898.6 180.8L1896.5 224.0L1863.7 241.4Z" fill="#e6e6e6"/>
<path d="M1830.8 180.8L1864.2 171.6L1898.6 180.8L1863.2 192.8ZM1863.2 192.8L1863.7 241.4M1898.6 180.8L1896.5 224.0L1863.7 241.4" fill="none" stroke="#8a8a8a" stroke-width="1" stroke-dasharray="4 2.4"/>
<path d="M1830.8 180.8L1832.4 224.0" stroke="#8a8a8a" stroke-width="1"/>
<path d="M1828.3 173.5L1832.2 224" stroke="#4a4ae8" stroke-width="2"/>
<path d="M1832.2 224.5L1869 246" stroke="#e88a8a" stroke-width="2"/>
<text x="1824" y="171" font-size="14" fill="#6a6af0">Z</text><text x="1870.5" y="255" font-size="14" fill="#f07a7a">X</text>
<text transform="matrix(1 .5 0 1 1836 200)" x="0" y="14" font-size="21" fill="#9aa0a6">前</text>
<text transform="matrix(1 -.52 0 1 1869.5 220)" x="0" y="8" font-size="21" fill="#9aa0a6">右</text>
<text transform="matrix(1 .3 -1.2 .45 1866 173)" x="-2" y="12" font-size="13" fill="#b0b4b8">上</text></svg>
<svg id="ui" width="1928" height="1168" viewBox="0 0 1928 1168" style="pointer-events:none"><rect x="0" y="0" width="8" height="1168" fill="#fff"/>
<rect x="0" y="0" width="8" height="41" fill="#dde1ec"/>
<path d="M0 41Q8 41 8 49V86H0Z" fill="#fff"/><circle cx="-4" cy="62" r="6" fill="#cfe0fb"/>
<path d="M0 97L1.5 95.5L3 97" stroke="#333" stroke-width="1" fill="none"/>
<rect x="0" y="104" width="6" height="283" fill="#5a5a5a"/>
<path d="M0 1008L1.5 1009.5L3 1008" stroke="#333" stroke-width="1" fill="none"/>
<rect x="0" y="1040" width="8" height="128" fill="#000"/><rect x="0" y="1064" width="3" height="10" fill="#fff"/>
<rect x="8" y="0" width="1920" height="23" fill="#fff"/>
<rect x="10.5" y="3" width="14" height="16" rx="2.5" fill="#f26b0f"/><path d="M10.5 14.5H24.5V16.5Q24.5 19 22 19H13Q10.5 19 10.5 16.5Z" fill="#9a3a07"/>
<text x="14.6" y="12.3" font-size="9.5" font-weight="700" fill="#fff">F</text><text x="13.2" y="17.9" font-size="3.4" font-weight="700" fill="#f3b48a">FUS</text>
<text x="31.0" y="15.3" font-size="12.2" fill="#111" font-weight="400" textLength="346.5" lengthAdjust="spacingAndGlyphs" >PC-6601SR v25 (g catsin) - Autodesk Fusion 個人用(商用利用不可)</text>
<path d="M1807 10.5H1817" stroke="#111" stroke-width="1"/>
<rect x="1852.5" y="7.5" width="8" height="8" fill="none" stroke="#111"/><path d="M1854.5 7.5V5.5H1862.5V13.5H1860.5" fill="none" stroke="#111"/>
<path d="M1896.5 5L1907 15.5M1907 5L1896.5 15.5" stroke="#111" stroke-width="1.1"/>
<rect x="8" y="23" width="1920" height="32" fill="#c9c9c9"/>
<path d="M201 55V33Q201 27 207 27H1672Q1678 27 1678 33V55Z" fill="#f2f2f2"/>
<rect x="17.0" y="32.0" width="3.8" height="3.8" fill="#555"/>
<rect x="22.2" y="32.0" width="3.8" height="3.8" fill="#555"/>
<rect x="27.4" y="32.0" width="3.8" height="3.8" fill="#555"/>
<rect x="17.0" y="37.2" width="3.8" height="3.8" fill="#555"/>
<rect x="22.2" y="37.2" width="3.8" height="3.8" fill="#555"/>
<rect x="27.4" y="37.2" width="3.8" height="3.8" fill="#555"/>
<rect x="17.0" y="42.4" width="3.8" height="3.8" fill="#555"/>
<rect x="22.2" y="42.4" width="3.8" height="3.8" fill="#555"/>
<rect x="27.4" y="42.4" width="3.8" height="3.8" fill="#555"/>
<path d="M50 31H58.5L63 35.5V47H50Z" fill="#555"/><path d="M58.5 31V35.5H63" fill="#c9c9c9" stroke="#c9c9c9" stroke-width=".6"/>
<path d="M69.3 37.2H75.7L72.5 41Z" fill="#555"/>
<path d="M95 32H107L109 34V46H95Z" fill="#8b8b8b"/><rect x="98" y="32" width="7.5" height="4.2" fill="#c9c9c9"/><rect x="98" y="40" width="8" height="6" fill="#c9c9c9"/><rect x="100" y="41.5" width="4" height="4.5" fill="#8b8b8b"/>
<path d="M129.5 38.5H136Q140.5 38.5 140.5 44.5" fill="none" stroke="#555" stroke-width="1.7"/><path d="M128.3 38.5L133.2 34.2V42.8Z" fill="#555"/>
<path d="M148.3 37.2H154.7L151.5 41Z" fill="#555"/>
<path d="M179.5 38.5H173Q168.5 38.5 168.5 44.5" fill="none" stroke="#9b9b9b" stroke-width="1.7"/><path d="M180.7 38.5L175.8 34.2V42.8Z" fill="#9b9b9b"/>
<path d="M187.3 37.2H193.7L190.5 41Z" fill="#9b9b9b"/>
<path d="M881 37.5L888 34.5L895 37.5V45L888 48.5L881 45Z" fill="#f07d1a"/><path d="M881 37.5L888 34.5L895 37.5L888 40.7Z" fill="#f9a75e"/><path d="M888 40.7L895 37.5V45L888 48.5Z" fill="#d9600a"/>
<text x="900.0" y="46.0" font-size="12.6" fill="#222" font-weight="400" textLength="88.0" lengthAdjust="spacingAndGlyphs" >PC-6601SR v25</text>
<path d="M1663 37.5L1671 45.5M1671 37.5L1663 45.5" stroke="#666" stroke-width="1.1"/>
<path d="M1682 55V31Q1682 27 1686 27H1706Q1710 27 1710 31V55Z" fill="#b7b7b7"/><path d="M1690 41H1702M1696 35V47" stroke="#5a5a5a" stroke-width="2"/>
<circle cx="1730" cy="39.5" r="8.2" fill="#0e94da"/><path d="M1724.8 41h6.4M1728 37.8v6.4M1733 35v3.2M1731.4 36.6h3.2" stroke="#fff" stroke-width="1.5"/>
<circle cx="1763" cy="39.5" r="7" fill="none" stroke="#555" stroke-width="2"/><path d="M1758.5 40.5Q1759 35.5 1764 35.3L1767.5 37L1763.5 41L1766 43.5Q1762 45.5 1758.5 40.5Z" fill="#555"/><path d="M1766.5 33L1769.5 36" stroke="#c9c9c9" stroke-width="2"/>
<circle cx="1796" cy="39.5" r="7.2" fill="none" stroke="#555" stroke-width="1.8"/><circle cx="1796" cy="39.5" r="5" fill="#555"/><path d="M1796 36V40H1799.5" stroke="#c9c9c9" stroke-width="1.2" fill="none"/>
<path d="M1823 44Q1824.5 42.5 1824.5 39Q1824.5 34 1829 33.5Q1833.5 34 1833.5 39Q1833.5 42.5 1835 44Z" fill="#555"/><path d="M1827.5 45.3H1830.5Q1829 47.5 1827.5 45.3Z" fill="#555"/><circle cx="1833.5" cy="34.5" r="2.8" fill="#0e94da"/>
<circle cx="1862" cy="39.5" r="7.8" fill="#555"/><text x="1858.4" y="44" font-size="12.5" font-weight="700" fill="#c9c9c9">?</text>
<defs><radialGradient id="av" cx=".5" cy=".35" r=".7"><stop offset="0" stop-color="#aab6cd"/><stop offset="1" stop-color="#6f7f9e"/></radialGradient><clipPath id="avc"><circle cx="1903" cy="39" r="12"/></clipPath></defs><circle cx="1903" cy="39" r="12" fill="url(#av)"/><g clip-path="url(#avc)" fill="#3f4a63"><ellipse cx="1903" cy="35" rx="4.8" ry="5.8"/><path d="M1892 52Q1894 43 1903 43T1914 52Z"/></g>
<rect x="8" y="55" width="1920" height="81" fill="#f2f2f2"/><rect x="8" y="136" width="1920" height="1" fill="#dcdcdc"/>
<rect x="20.5" y="66" width="108.5" height="60" rx="6" fill="#f2f2f2" stroke="#d6d6d6" stroke-width="1.2"/>
<text x="53.0" y="100.5" font-size="11.5" fill="#222" font-weight="400" textLength="34.0" lengthAdjust="spacingAndGlyphs" >デザイン</text>
<path d="M92.3 94.3H99.3L95.8 98.3Z" fill="#222"/>
<text x="158.0" y="71.2" font-size="11.5" fill="#1a97dc" font-weight="400" textLength="32.0" lengthAdjust="spacingAndGlyphs" >ソリッド</text>
<text x="236.0" y="71.2" font-size="11.5" fill="#333" font-weight="400" textLength="39.0" lengthAdjust="spacingAndGlyphs" >サーフェス</text>
<text x="319.0" y="71.2" font-size="11.5" fill="#333" font-weight="400" textLength="31.0" lengthAdjust="spacingAndGlyphs" >メッシュ</text>
<text x="397.0" y="71.2" font-size="11.5" fill="#333" font-weight="400" textLength="31.5" lengthAdjust="spacingAndGlyphs" >フォーム</text>
<text x="475.0" y="71.2" font-size="11.5" fill="#333" font-weight="400" textLength="52.0" lengthAdjust="spacingAndGlyphs" >シート メタル</text>
<text x="573.0" y="71.2" font-size="11.5" fill="#333" font-weight="400" textLength="47.0" lengthAdjust="spacingAndGlyphs" >プラスチック</text>
<text x="666.0" y="71.2" font-size="11.5" fill="#333" font-weight="400" textLength="53.0" lengthAdjust="spacingAndGlyphs" >ユーティリティ</text>
<rect x="146" y="75" width="57" height="3.4" rx="1.2" fill="#0d95d8"/>
<text x="230.0" y="131.0" font-size="11.5" fill="#333" font-weight="400" textLength="20.7" lengthAdjust="spacingAndGlyphs" >作成</text>
<path d="M254.0 124.3H260.4L257.2 128.2Z" fill="#222"/>
<text x="476.0" y="131.0" font-size="11.5" fill="#333" font-weight="400" textLength="21.2" lengthAdjust="spacingAndGlyphs" >修正</text>
<path d="M500.5 124.3H506.9L503.7 128.2Z" fill="#222"/>
<text x="650.5" y="131.0" font-size="11.5" fill="#333" font-weight="400" textLength="40.5" lengthAdjust="spacingAndGlyphs" >アセンブリ</text>
<path d="M694.3 124.3H700.7L697.5 128.2Z" fill="#222"/>
<text x="739.0" y="131.0" font-size="11.5" fill="#333" font-weight="400" textLength="86.0" lengthAdjust="spacingAndGlyphs" >コンフィギュレーション</text>
<path d="M828.3 124.3H834.7L831.5 128.2Z" fill="#222"/>
<text x="864.0" y="131.0" font-size="11.5" fill="#333" font-weight="400" textLength="21.0" lengthAdjust="spacingAndGlyphs" >構築</text>
<path d="M888.3 124.3H894.7L891.5 128.2Z" fill="#222"/>
<text x="922.0" y="131.0" font-size="11.5" fill="#333" font-weight="400" textLength="21.0" lengthAdjust="spacingAndGlyphs" >検査</text>
<path d="M946.3 124.3H952.7L949.5 128.2Z" fill="#222"/>
<text x="998.0" y="131.0" font-size="11.5" fill="#333" font-weight="400" textLength="21.0" lengthAdjust="spacingAndGlyphs" >挿入</text>
<path d="M1022.3 124.3H1028.7L1025.5 128.2Z" fill="#222"/>
<text x="1078.0" y="131.0" font-size="11.5" fill="#333" font-weight="400" textLength="21.0" lengthAdjust="spacingAndGlyphs" >選択</text>
<path d="M1102.3 124.3H1108.7L1105.5 128.2Z" fill="#222"/>
<rect x="146.5" y="83.5" width="27" height="27" fill="none" stroke="#444" stroke-width="1" stroke-dasharray="22 5"/>
<rect x="145.0" y="82.0" width="3" height="3" fill="#444"/>
<rect x="172.0" y="82.0" width="3" height="3" fill="#444"/>
<rect x="145.0" y="109.0" width="3" height="3" fill="#444"/>
<path d="M153.5 90.5H166.5M153.5 90.5V103.5M166.5 90.5Q166 102 154 103.5" fill="none" stroke="#444" stroke-width="1" stroke-dasharray="9 3"/>
<rect x="152.0" y="89.0" width="3" height="3" fill="#444"/>
<rect x="165.0" y="89.0" width="3" height="3" fill="#444"/>
<rect x="152.0" y="102.0" width="3" height="3" fill="#444"/>
<path d="M163 107H177M170 100V114" stroke="#20a845" stroke-width="4.4"/>
<path d="M189.0 109.0L207.3 109.0L213.0 103.8L213.0 107.5L207.3 113.6L189.0 113.6Z" fill="#c4c4c4" />
<path d="M189.0 109.0L207.3 109.0L207.3 113.6L189.0 113.6Z" fill="#bdbdbd" />
<path d="M189.0 89.1L207.3 89.1L207.3 108.8L189.0 108.8Z" fill="#6ab0e6" /><path d="M189.0 89.1L194.7 82.3L213.0 82.3L207.3 89.1Z" fill="#8fcaf5" /><path d="M207.3 89.1L213.0 82.3L213.0 102.0L207.3 108.8Z" fill="#4a94cf" />
<path d="M216.7 108V85" stroke="#222" stroke-width="1.1"/><path d="M214.3 87.5L216.7 83L219.1 87.5Z" fill="#222"/>
<path d="M231.5 97Q247 84 263 97V105.5L257.5 110.5Q247 102 237 110.5L231.5 105.5Z" fill="#6ab0e6"/>
<path d="M231.5 97Q247 84 263 97L257.5 101.5Q247 92.5 237 101.5Z" fill="#8fcaf5"/>
<path d="M231.5 97L237 101.5V110.5L231.5 105.5Z" fill="#4a94cf"/>
<path d="M257.5 101.5L263 97V105.5L257.5 110.5Z" fill="#fff" stroke="#444" stroke-width="1"/>
<path d="M261 89.5Q247 79.5 233 88.5" fill="none" stroke="#222" stroke-width="1.1"/><path d="M231.5 89.8L236 85.5L236.8 90.2Z" fill="#222"/>
<path d="M274.3 87.6L300.5 87.6L300.5 113.3L274.3 113.3Z" fill="#dedede" stroke="#4d4d4d" stroke-width="1" stroke-linejoin="round" /><path d="M274.3 87.6L279.6 82.3L305.8 82.3L300.5 87.6Z" fill="#f3f3f3" stroke="#4d4d4d" stroke-width="1" stroke-linejoin="round" /><path d="M300.5 87.6L305.8 82.3L305.8 108.0L300.5 113.3Z" fill="#bcbcbc" stroke="#4d4d4d" stroke-width="1" stroke-linejoin="round" />
<circle cx="287.3" cy="100.3" r="8.3" fill="#e8e8e8" stroke="#444" stroke-width="1"/><circle cx="287.3" cy="100.3" r="6.4" fill="#6ab0e6"/><path d="M285 95Q292 93.5 293.8 99.5Q293 103 290 103Q285.5 101 285 95Z" fill="#e8e8e8"/>
<path d="M320.5 87.5H342M320.5 87.5V108.5M320.5 108.5H342" stroke="#444" stroke-width="1" fill="none"/>
<rect x="317.5" y="84.5" width="6" height="6" fill="#fff" stroke="#444"/>
<rect x="338.5" y="84.5" width="6.5" height="6.5" fill="#6ab0e6"/>
<rect x="317.5" y="105.5" width="6.5" height="6.5" fill="#6ab0e6"/>
<rect x="338.5" y="105.5" width="6.5" height="6.5" fill="#6ab0e6"/>
<path d="M359.5 82V132" stroke="#dddddd" stroke-width="1.4"/>
<path d="M628.5 82V132" stroke="#dddddd" stroke-width="1.4"/>
<path d="M725.5 82V132" stroke="#dddddd" stroke-width="1.4"/>
<path d="M849.5 82V132" stroke="#dddddd" stroke-width="1.4"/>
<path d="M908.5 82V132" stroke="#dddddd" stroke-width="1.4"/>
<path d="M967.5 82V132" stroke="#dddddd" stroke-width="1.4"/>
<path d="M1064.5 82V132" stroke="#dddddd" stroke-width="1.4"/>
<path d="M372.5 113.5L372.5 88.0L378.5 82.3L384.0 82.3L384.0 113.5Z" fill="#e2e2e2" stroke="#4d4d4d" stroke-width="1" stroke-linejoin="round" />
<path d="M379.3 87.0L388.3 87.0L388.3 113.5L379.3 113.5Z" fill="#6ab0e6" /><path d="M379.3 87.0L384.9 82.2L393.9 82.2L388.3 87.0Z" fill="#8fcaf5" /><path d="M388.3 87.0L393.9 82.2L393.9 108.7L388.3 113.5Z" fill="#4a94cf" />
<path d="M391.5 97.5H399" stroke="#fff" stroke-width="3"/><path d="M392 97.5H399" stroke="#222" stroke-width="1.1"/><path d="M397.5 95L401.3 97.5L397.5 100Z" fill="#222"/>
<path d="M414.5 113.5V88.5L420.5 82.4H431Q445 84 446 99V107.5L438.5 113.5Z" fill="#dedede" stroke="#4d4d4d" stroke-width="1" stroke-linejoin="round"/>
<path d="M438.5 113.5V103L446 98.5V107.5Z" fill="#bcbcbc"/>
<path d="M426 88.5L431 82.4Q445 84 446 98.5L439 103Q438 90 426 88.5Z" fill="#6ab0e6"/>
<path d="M457.4 88.3L481.5 88.3L481.5 113.5L457.4 113.5Z" fill="#dedede" stroke="#4d4d4d" stroke-width="1" stroke-linejoin="round" /><path d="M457.4 88.3L464.6 82.3L488.7 82.3L481.5 88.3Z" fill="#f3f3f3" stroke="#4d4d4d" stroke-width="1" stroke-linejoin="round" /><path d="M481.5 88.3L488.7 82.3L488.7 107.5L481.5 113.5Z" fill="#bcbcbc" stroke="#4d4d4d" stroke-width="1" stroke-linejoin="round" />
<rect x="460.8" y="93.3" width="17" height="17" fill="#f6f6f6"/>
<path d="M461.5 94.0L468.5 94.0L468.5 102.5L476.7 102.5L476.7 109.7L461.5 109.7Z" fill="#8fcaf5" />
<path d="M461.5 94.0L468.5 94.0L468.5 102.5L461.5 109.7Z" fill="#4a94cf" />
<path d="M510.5 87.2L526.5 87.2L526.5 103.5L510.5 103.5Z" fill="#6ab0e6" /><path d="M510.5 87.2L515.8 82.2L531.8 82.2L526.5 87.2Z" fill="#8fcaf5" /><path d="M526.5 87.2L531.8 82.2L531.8 98.5L526.5 103.5Z" fill="#4a94cf" />
<path d="M500.2 97.0L518.5 97.0L518.5 113.5L500.2 113.5Z" fill="#6ab0e6" /><path d="M500.2 97.0L504.7 92.5L523.0 92.5L518.5 97.0Z" fill="#8fcaf5" /><path d="M518.5 97.0L523.0 92.5L523.0 109.0L518.5 113.5Z" fill="#4a94cf" />
<path d="M545.5 101.0L567.5 101.0L567.5 112.0L545.5 112.0Z" fill="#dedede" stroke="#4d4d4d" stroke-width="1" stroke-linejoin="round" /><path d="M545.5 101.0L551.0 96.0L573.0 96.0L567.5 101.0Z" fill="#f3f3f3" stroke="#4d4d4d" stroke-width="1" stroke-linejoin="round" /><path d="M567.5 101.0L573.0 96.0L573.0 107.0L567.5 112.0Z" fill="#bcbcbc" stroke="#4d4d4d" stroke-width="1" stroke-linejoin="round" />
<path d="M545.5 87.0L567.5 87.0L567.5 99.5L545.5 99.5Z" fill="#6ab0e6" /><path d="M545.5 87.0L551.0 82.0L573.0 82.0L567.5 87.0Z" fill="#8fcaf5" /><path d="M567.5 87.0L573.0 82.0L573.0 94.5L567.5 99.5Z" fill="#4a94cf" />
<path d="M543 100.5H568.5L575 93" fill="none" stroke="#fff" stroke-width="3"/><path d="M543 100.5H568.5L575 93" fill="none" stroke="#2f8fdc" stroke-width="1.2"/>
<path d="M589 98H615M602 85V111" stroke="#333" stroke-width="1.6"/>
<path d="M602 82.3L607 89H597ZM602 113.7L607 107H597ZM586.3 98L593.5 93V103ZM617.7 98L610.5 93V103Z" fill="#333"/>
<path d="M640.3 102.0L653.0 102.0L653.0 113.5L640.3 113.5Z" fill="#dedede" stroke="#4d4d4d" stroke-width="1" stroke-linejoin="round" /><path d="M640.3 102.0L640.3 102.0L653.0 102.0L653.0 102.0Z" fill="#f3f3f3" stroke="#4d4d4d" stroke-width="1" stroke-linejoin="round" /><path d="M653.0 102.0L653.0 102.0L653.0 113.5L653.0 113.5Z" fill="#bcbcbc" stroke="#4d4d4d" stroke-width="1" stroke-linejoin="round" />
<path d="M653.0 102.0L664.0 102.0L664.0 113.5L653.0 113.5Z" fill="#dedede" stroke="#4d4d4d" stroke-width="1" stroke-linejoin="round" /><path d="M653.0 102.0L656.8 98.4L667.8 98.4L664.0 102.0Z" fill="#f3f3f3" stroke="#4d4d4d" stroke-width="1" stroke-linejoin="round" /><path d="M664.0 102.0L667.8 98.4L667.8 109.9L664.0 113.5Z" fill="#bcbcbc" stroke="#4d4d4d" stroke-width="1" stroke-linejoin="round" />
<path d="M640.3 90.0L653.0 90.0L653.0 101.5L640.3 101.5Z" fill="#6ab0e6" /><path d="M640.3 90.0L643.9 86.2L656.6 86.2L653.0 90.0Z" fill="#8fcaf5" /><path d="M653.0 90.0L656.6 86.2L656.6 97.7L653.0 101.5Z" fill="#4a94cf" />
<path d="M664 82.5L665.2 87.5L669.7 84.8L667.0 89.3L672.0 90.5L667.0 91.7L669.7 96.2L665.2 93.5L664.0 98.5L662.8 93.5L658.3 96.2L661.0 91.7L656.0 90.5L661.0 89.3L658.3 84.8L662.8 87.5Z" fill="#f39a0e"/>
<path d="M685.5 110.5V92L691 85Q694.5 83 697.5 85V94.5L691.5 96V106Z" fill="#d9d9d9" stroke="#444" stroke-width="1" stroke-linejoin="round"/>
<path d="M704 97.5V89L706.5 86.5L712.5 92V111L704 104.5Q700.5 103.5 701 100.5V97.5Z" fill="#d9d9d9" stroke="#444" stroke-width="1" stroke-linejoin="round"/>
<path d="M694.5 96V102M703.8 90V95.5" stroke="#1b8ee6" stroke-width="1.2"/>
<g opacity=".55"><path d="M750 110.5V89L756 82.5H777V110.5Z" fill="#ebebeb" stroke="#d6d6d6"/><circle cx="773.8" cy="90" r="8" fill="#a5d4ea"/><path d="M770 92.5h6M773 89.5v6M776.5 85v3M775 86.5h3" stroke="#fff" stroke-width="1.2"/><path d="M768 104.5h13M768 110.5h13M772 102.5v4M777.5 108.5v4" stroke="#d2d2d2" stroke-width="1.3"/>
<path d="M793.5 82.5H822V110.5H793.5Z" fill="#ebebeb" stroke="#d6d6d6"/><path d="M793.5 88H822M797 92h16v15h-16zM802.3 92v15M807.6 92v15M797 97h16M797 102h16" fill="none" stroke="#d6d6d6"/><circle cx="816.8" cy="90" r="8" fill="#a5d4ea"/><path d="M813 92.5h6M816 89.5v6M819.5 85v3M818 86.5h3" stroke="#fff" stroke-width="1.2"/><path d="M811 104.5h13M811 110.5h13M815 102.5v4M820.5 108.5v4" stroke="#d2d2d2" stroke-width="1.3"/></g>
<path d="M864.3 112.3L864.3 90.0L871.0 82.8L879.0 82.8L879.0 104.0L872.5 112.3Z" fill="#e6e6e6" stroke="#4d4d4d" stroke-width="1" stroke-linejoin="round" />
<path d="M872.8 112.3L872.8 91.0L881.8 82.8L881.8 103.0Z" fill="#5fc57f" />
<path d="M885.2 112.3L885.2 91.5L894.0 82.8L894.0 102.5Z" fill="#e89a66" />
<path d="M924.5 90V98M951.5 90V98M925.5 94.5H950.5" stroke="#555" stroke-width="1"/><path d="M925 94.5L929.5 92V97ZM951 94.5L946.5 92V97Z" fill="#555"/>
<rect x="924" y="100.5" width="28" height="5.6" fill="#f5a100"/><path d="M926.0 100.5v2.2M929.2 100.5v2.2M932.4 100.5v2.2M935.6 100.5v2.2M938.8 100.5v2.2M942.0 100.5v2.2M945.2 100.5v2.2M948.4 100.5v2.2M951.6 100.5v2.2" stroke="#a36a00" stroke-width=".8"/>
<path d="M983.5 91.5L1001.0 91.5L1001.0 111.5L983.5 111.5Z" fill="#dedede" stroke="#4d4d4d" stroke-width="1" stroke-linejoin="round" /><path d="M983.5 91.5L991.0 86.0L1008.5 86.0L1001.0 91.5Z" fill="#f3f3f3" stroke="#4d4d4d" stroke-width="1" stroke-linejoin="round" /><path d="M1001.0 91.5L1008.5 86.0L1008.5 106.0L1001.0 111.5Z" fill="#bcbcbc" stroke="#4d4d4d" stroke-width="1" stroke-linejoin="round" />
<path d="M979 87.8H987" stroke="#1b86df" stroke-width="3.6"/><path d="M986.5 82.5L996.5 87.8L986.5 93Z" fill="#1b86df"/>
<g fill="none" stroke="#222" stroke-width="2.1"><rect x="995.5" y="104.5" width="9" height="6" rx="3" transform="rotate(-32 1000 107.5)"/><rect x="1001" y="101" width="9" height="6" rx="3" transform="rotate(-32 1005.5 104)"/></g>
<rect x="1023" y="83" width="29" height="28.5" fill="#8ccafa"/><path d="M1023 111.5V101Q1029 92 1035 99T1043 103Q1047 98 1052 101V111.5Z" fill="#4191cf"/><circle cx="1044" cy="91" r="3" fill="#fbf6c4"/>
<rect x="1075" y="79" width="38" height="38" fill="#0d95d8"/><rect x="1078.5" y="82.5" width="27" height="21" fill="none" stroke="#8ee06f" stroke-width="1.1" stroke-dasharray="3.2 2"/>
<path d="M1099 96.5V112.5L1102.7 109.3L1105.3 114.5L1107.3 113.5L1104.8 108.4L1109.5 107.7Z" fill="#fff"/>
<rect x="850" y="1130" width="237" height="24" fill="#f0f0f0"/>
<path d="M861 1134V1150M858.5 1136.5L861 1133L863.5 1136.5" fill="none" stroke="#333" stroke-width="1.3"/><path d="M854.5 1141.5Q861 1137.5 867.5 1141.5Q868.5 1145 861 1146.5Q856 1146.5 854 1144.5" fill="none" stroke="#333" stroke-width="1.2"/><path d="M853 1145.5L857.5 1143L857 1147.5Z" fill="#333"/>
<path d="M873.5 1140H879.5L876.5 1144Z" fill="#222"/>
<rect x="886.5" y="1139.5" width="14" height="10" fill="#e8e8ee" stroke="#333" stroke-width="1.2"/><rect x="889" y="1142.5" width="9" height="4" fill="#a9b4c9" stroke="#333" stroke-width=".8"/><path d="M887 1139.5L891 1135.5L894 1138L898 1135.5V1139.5" fill="none" stroke="#333" stroke-width="1.1"/>
<path d="M914 1142.5L915.5 1149.5Q920 1152 925 1149.5L927.5 1141Q926.5 1140 925.5 1141L924.5 1144V1137.5Q923.5 1136.5 922.7 1137.5V1143V1136Q921.7 1135 920.8 1136V1143V1137Q919.8 1136 919 1137V1144.5L916.5 1141Q915 1140.5 914 1142.5Z" fill="#f4f4f8" stroke="#333" stroke-width="1"/>
<circle cx="943.5" cy="1141.5" r="4.6" fill="#dfe9ee" stroke="#333" stroke-width="1.2"/><path d="M947 1145L951.5 1149.5" stroke="#333" stroke-width="2.2"/><path d="M950 1136.5H954M952 1134.5V1138.5M950 1140.5H954" stroke="#333" stroke-width="1"/>
<rect x="964.5" y="1134.5" width="14" height="14" fill="none" stroke="#333" stroke-dasharray="2 1.6"/><circle cx="971.5" cy="1141" r="5.6" fill="#dfe9ee" stroke="#333" stroke-width="1.2"/><path d="M975.5 1145.5L980 1150" stroke="#333" stroke-width="2.2"/>
<path d="M985 1140H991L988 1144Z" fill="#222"/>
<rect x="998" y="1134.5" width="14.5" height="11" rx="1" fill="#e6e6e6" stroke="#333" stroke-width="1.2"/><rect x="1000" y="1136.5" width="10.5" height="7" fill="#8fb0e0"/><path d="M1003 1146V1148.5H1001.5V1150H1009V1148.5H1007.5V1146" fill="#ddd" stroke="#333" stroke-width=".7"/>
<path d="M1015.5 1140H1021.5L1018.5 1144Z" fill="#222"/>
<rect x="1028.5" y="1134.5" width="15" height="15" fill="#e4e4ea" stroke="#333" stroke-width="1"/><path d="M1032.2 1134.5V1149.5M1036 1134.5V1149.5M1039.8 1134.5V1149.5M1028.5 1138.2H1043.5M1028.5 1142H1043.5M1028.5 1145.8H1043.5" stroke="#555" stroke-width=".9"/>
<path d="M1046.5 1140H1052.5L1049.5 1144Z" fill="#222"/>
<rect x="1059.5" y="1135.5" width="15" height="13" rx="1" fill="#9bb3e6" stroke="#2a4a9a" stroke-width="1"/><path d="M1067 1135.5V1148.5M1059.5 1142H1074.5" stroke="#2a4a9a" stroke-width="1.4"/><path d="M1061.5 1137.5h3.5v2.5h-3.5zM1069 1137.5h3.5v2.5h-3.5zM1061.5 1144h3.5v2.5h-3.5zM1069 1144h3.5v2.5h-3.5z" fill="#c4d3f3"/>
<path d="M1077.5 1140H1083.5L1080.5 1144Z" fill="#222"/>
<rect x="0" y="1160" width="1928" height="8" fill="#111"/><rect x="56" y="1160" width="288" height="8" fill="#f3f3f3"/><rect x="56" y="1160" width="288" height="1" fill="#cfcfcf"/><rect x="787" y="1160" width="49" height="8" fill="#363636"/><rect x="836" y="1160" width="48" height="8" fill="#9a4f1c"/><rect x="1919.5" y="1160" width="1" height="8" fill="#555"/><rect x="1826" y="1166.3" width="7" height="1.7" fill="#ddd"/><rect x="1836" y="1166.3" width="5" height="1.7" fill="#ddd"/></svg>
<div id="browserhdr"></div>
<svg style="position:absolute;left:0;top:140px" width="330" height="40" viewBox="0 140 330 40"><path d="M17.5 156.3L22 153V159.6ZM22.5 156.3L27 153V159.6Z" fill="#222"/><text x="37.0" y="160.3" font-size="11.3" fill="#555" font-weight="400" textLength="33.0" lengthAdjust="spacingAndGlyphs" >ブラウザ</text><circle cx="295.5" cy="156.3" r="4.6" fill="#222"/><rect x="292.8" y="155.6" width="5.4" height="1.4" fill="#f1f1f1"/></svg>
<div id="scroll"></div><div id="thumb"></div>
<div class="row" style="top:174.0px;height:20.5px"><div class="rb" style="left:48.0px;width:171.6px"></div><div style="position:absolute;left:73px;top:2.5px;width:121.6px;height:15.4px;background:#9b9b9b"></div><svg class="ic" style="left:28.0px" width="13" height="13" viewBox="0 0 13 13"><defs><linearGradient id="tg1" x1="0" y1="0" x2="1" y2="1"><stop offset=".45" stop-color="#fff"/><stop offset="1" stop-color="#4a4a4a"/></linearGradient></defs><path d="M12 1V12H1Z" fill="url(#tg1)" stroke="#333" stroke-width="1.1" stroke-linejoin="round"/></svg><svg class="ic" style="left:51.0px" width="18" height="12" viewBox="0 0 18 12"><path d="M.8 6C3.4 1.7 6.4.7 9 .7S14.6 1.7 17.2 6C14.6 10.3 11.6 11.3 9 11.3S3.4 10.3.8 6Z" fill="#9c9c9c"/><circle cx="9" cy="6" r="3.7" fill="#f1f1f1"/><circle cx="9" cy="6" r="2.2" fill="#8c8c8c"/></svg><svg class="ic" style="left:74.0px" width="18" height="17" viewBox="0 0 18 17"><path d="M1 4.5L4.5 1H17V12.5L13.5 16H1Z" fill="#e9ebf0" stroke="#2d2d2d" stroke-width="1.1" stroke-linejoin="round"/><path d="M1.6 5h11.4v10.4H1.6z" fill="#fff"/><path d="M13.5 4.5V16M13.5 4.5L17 1M13.5 4.5H1" fill="none" stroke="#2d2d2d" stroke-width="1"/></svg><svg class="ic" style="left:198.0px" width="14" height="14" viewBox="0 0 14 14"><circle cx="7" cy="7" r="5.8" fill="#fff" stroke="#222" stroke-width="1.2"/><circle cx="7" cy="7" r="2.2" fill="#222"/></svg><span class="rt" style="left:106.0px;color:#fff;font-weight:700;transform:scaleX(0.9737)">PC-6601SR v25</span></div>
<div class="row" style="top:198.5px;height:19.0px"><div class="rb" style="left:66.0px;width:117.6px"></div><svg class="ic" style="left:48.0px" width="11" height="15" viewBox="0 0 11 15"><path d="M1 1L10 7.5L1 14Z" fill="#fff" stroke="#222" stroke-width="1.2" stroke-linejoin="round"/></svg><svg class="ic" style="left:68.0px" width="16" height="16" viewBox="-8 -8 16 16"><g fill="#8a8a8a"><circle r="5.3"/><rect x="-1.7" y="-7.7" width="3.4" height="4" transform="rotate(0)"/><rect x="-1.7" y="-7.7" width="3.4" height="4" transform="rotate(45)"/><rect x="-1.7" y="-7.7" width="3.4" height="4" transform="rotate(90)"/><rect x="-1.7" y="-7.7" width="3.4" height="4" transform="rotate(135)"/><rect x="-1.7" y="-7.7" width="3.4" height="4" transform="rotate(180)"/><rect x="-1.7" y="-7.7" width="3.4" height="4" transform="rotate(225)"/><rect x="-1.7" y="-7.7" width="3.4" height="4" transform="rotate(270)"/><rect x="-1.7" y="-7.7" width="3.4" height="4" transform="rotate(315)"/></g><circle r="2.3" fill="#f0f0f0"/></svg><span class="rt" style="left:94.0px;color:#3a3a3a;font-weight:400;transform:scaleX(0.7929)">ドキュメントの設定</span></div>
<div class="row" style="top:222.5px;height:19.0px"><div class="rb" style="left:66.0px;width:125.6px"></div><svg class="ic" style="left:48.0px" width="11" height="15" viewBox="0 0 11 15"><path d="M1 1L10 7.5L1 14Z" fill="#fff" stroke="#222" stroke-width="1.2" stroke-linejoin="round"/></svg><svg class="ic" style="left:69.0px" width="17" height="14" viewBox="0 0 17 14"><path d="M.5 .8h6.3l.9 1.7H16.5V13.5H.5Z" fill="#9b9b9b"/><path d="M.5 3.6H16.5" stroke="#e8e8e8" stroke-width=".7"/></svg><span class="rt" style="left:99.0px;color:#3a3a3a;font-weight:400;transform:scaleX(0.8283)">名前の付いたビュー</span></div>
<div class="row" style="top:246.5px;height:19.0px"><div class="rb" style="left:66.0px;width:90.6px"></div><svg class="ic" style="left:48.0px" width="11" height="15" viewBox="0 0 11 15"><path d="M1 1L10 7.5L1 14Z" fill="#fff" stroke="#222" stroke-width="1.2" stroke-linejoin="round"/></svg><svg class="ic" style="left:68.0px" width="18" height="12" viewBox="0 0 18 12"><path d="M1 6C3.5 2 6.5 1 9 1S14.5 2 17 6C14.5 10 11.5 11 9 11S3.5 10 1 6Z" fill="none" stroke="#aaa" stroke-width="1"/><circle cx="9" cy="6" r="2.6" fill="none" stroke="#aaa"/><path d="M2.5 .8L15.5 11.2" stroke="#aaa" stroke-width="1.3"/></svg><svg class="ic" style="left:94.0px" width="17" height="14" viewBox="0 0 17 14"><path d="M.5 .8h6.3l.9 1.7H16.5V13.5H.5Z" fill="#9b9b9b"/><path d="M.5 3.6H16.5" stroke="#e8e8e8" stroke-width=".7"/></svg><span class="rt" style="left:123.5px;color:#3a3a3a;font-weight:400;transform:scaleX(1.0591)">原点</span></div>
<div class="row" style="top:270.5px;height:19.0px"><div class="rb" style="left:66.0px;width:94.7px"></div><svg class="ic" style="left:47.0px" width="13" height="13" viewBox="0 0 13 13"><defs><linearGradient id="tg2" x1="0" y1="0" x2="1" y2="1"><stop offset=".45" stop-color="#fff"/><stop offset="1" stop-color="#4a4a4a"/></linearGradient></defs><path d="M12 1V12H1Z" fill="url(#tg2)" stroke="#333" stroke-width="1.1" stroke-linejoin="round"/></svg><svg class="ic" style="left:68.5px" width="18" height="12" viewBox="0 0 18 12"><path d="M.8 6C3.4 1.7 6.4.7 9 .7S14.6 1.7 17.2 6C14.6 10.3 11.6 11.3 9 11.3S3.4 10.3.8 6Z" fill="#9c9c9c"/><circle cx="9" cy="6" r="3.7" fill="#f1f1f1"/><circle cx="9" cy="6" r="2.2" fill="#8c8c8c"/></svg><svg class="ic" style="left:94.0px" width="17" height="14" viewBox="0 0 17 14"><path d="M.5 .8h6.3l.9 1.7H16.5V13.5H.5Z" fill="#9b9b9b"/><path d="M.5 3.6H16.5" stroke="#e8e8e8" stroke-width=".7"/></svg><span class="rt" style="left:123.5px;color:#3a3a3a;font-weight:400;transform:scaleX(0.8500)">ボディ</span></div>
<div class="row" style="top:294.5px;height:19.0px"><div class="rb" style="left:84.0px;width:122.7px"></div><svg class="ic" style="left:65.0px" width="13" height="13" viewBox="0 0 13 13"><defs><linearGradient id="tg3" x1="0" y1="0" x2="1" y2="1"><stop offset=".45" stop-color="#fff"/><stop offset="1" stop-color="#4a4a4a"/></linearGradient></defs><path d="M12 1V12H1Z" fill="url(#tg3)" stroke="#333" stroke-width="1.1" stroke-linejoin="round"/></svg><svg class="ic" style="left:86.5px" width="18" height="12" viewBox="0 0 18 12"><path d="M.8 6C3.4 1.7 6.4.7 9 .7S14.6 1.7 17.2 6C14.6 10.3 11.6 11.3 9 11.3S3.4 10.3.8 6Z" fill="#9c9c9c"/><circle cx="9" cy="6" r="3.7" fill="#f1f1f1"/><circle cx="9" cy="6" r="2.2" fill="#8c8c8c"/></svg><svg class="ic" style="left:112.0px" width="17" height="14" viewBox="0 0 17 14"><path d="M.5 .8h6.3l.9 1.7H16.5V13.5H.5Z" fill="#9b9b9b"/><path d="M.5 3.6H16.5" stroke="#e8e8e8" stroke-width=".7"/></svg><span class="rt" style="left:141.5px;color:#3a3a3a;font-weight:400;transform:scaleX(0.7748)">キーボード (5)</span></div>
<div class="row" style="top:318.5px;height:19.0px"><div class="rb" style="left:102.0px;width:134.8px"></div><svg class="ic" style="left:104.5px" width="18" height="12" viewBox="0 0 18 12"><path d="M.8 6C3.4 1.7 6.4.7 9 .7S14.6 1.7 17.2 6C14.6 10.3 11.6 11.3 9 11.3S3.4 10.3.8 6Z" fill="#9c9c9c"/><circle cx="9" cy="6" r="3.7" fill="#f1f1f1"/><circle cx="9" cy="6" r="2.2" fill="#8c8c8c"/></svg><svg class="ic" style="left:129.5px" width="17" height="18" viewBox="0 0 17 18"><defs><linearGradient id="bg4" x1="0" x2="1"><stop offset="0" stop-color="#c0c5ce"/><stop offset=".6" stop-color="#fdfdfd"/><stop offset="1" stop-color="#e4e7ec"/></linearGradient></defs><path d="M1.3 4Q1.3 1 8.5 1T15.7 4V14Q15.7 17 8.5 17T1.3 14Z" fill="#fff" stroke="#3a3a3a" stroke-width="1"/><path d="M3.4 7h6v8.6Q5 15.6 3.4 14.2Z" fill="url(#bg4)"/></svg><span class="rt" style="left:159.5px;color:#3a3a3a;font-weight:400;transform:scaleX(0.8182)">キーボード･上面</span></div>
<div class="row" style="top:342.5px;height:19.0px"><div class="rb" style="left:102.0px;width:134.8px"></div><svg class="ic" style="left:104.5px" width="18" height="12" viewBox="0 0 18 12"><path d="M.8 6C3.4 1.7 6.4.7 9 .7S14.6 1.7 17.2 6C14.6 10.3 11.6 11.3 9 11.3S3.4 10.3.8 6Z" fill="#9c9c9c"/><circle cx="9" cy="6" r="3.7" fill="#f1f1f1"/><circle cx="9" cy="6" r="2.2" fill="#8c8c8c"/></svg><svg class="ic" style="left:129.5px" width="17" height="18" viewBox="0 0 17 18"><defs><linearGradient id="bg5" x1="0" x2="1"><stop offset="0" stop-color="#c0c5ce"/><stop offset=".6" stop-color="#fdfdfd"/><stop offset="1" stop-color="#e4e7ec"/></linearGradient></defs><path d="M1.3 4Q1.3 1 8.5 1T15.7 4V14Q15.7 17 8.5 17T1.3 14Z" fill="#fff" stroke="#3a3a3a" stroke-width="1"/><path d="M3.4 7h6v8.6Q5 15.6 3.4 14.2Z" fill="url(#bg5)"/></svg><span class="rt" style="left:159.5px;color:#3a3a3a;font-weight:400;transform:scaleX(0.8182)">キーボード･底面</span></div>
<div class="row" style="top:366.5px;height:19.0px"><div class="rb" style="left:102.0px;width:142.8px"></div><svg class="ic" style="left:104.5px" width="18" height="12" viewBox="0 0 18 12"><path d="M.8 6C3.4 1.7 6.4.7 9 .7S14.6 1.7 17.2 6C14.6 10.3 11.6 11.3 9 11.3S3.4 10.3.8 6Z" fill="#9c9c9c"/><circle cx="9" cy="6" r="3.7" fill="#f1f1f1"/><circle cx="9" cy="6" r="2.2" fill="#8c8c8c"/></svg><svg class="ic" style="left:129.5px" width="17" height="18" viewBox="0 0 17 18"><defs><linearGradient id="bg6" x1="0" x2="1"><stop offset="0" stop-color="#c0c5ce"/><stop offset=".6" stop-color="#fdfdfd"/><stop offset="1" stop-color="#e4e7ec"/></linearGradient></defs><path d="M1.3 4Q1.3 1 8.5 1T15.7 4V14Q15.7 17 8.5 17T1.3 14Z" fill="#fff" stroke="#3a3a3a" stroke-width="1"/><path d="M3.4 7h6v8.6Q5 15.6 3.4 14.2Z" fill="url(#bg6)"/></svg><span class="rt" style="left:159.5px;color:#3a3a3a;font-weight:400;transform:scaleX(0.8126)">キーボード･PC/TV</span></div>
<div class="row" style="top:390.5px;height:19.0px"><div class="rb" style="left:102.0px;width:134.8px"></div><svg class="ic" style="left:104.5px" width="18" height="12" viewBox="0 0 18 12"><path d="M.8 6C3.4 1.7 6.4.7 9 .7S14.6 1.7 17.2 6C14.6 10.3 11.6 11.3 9 11.3S3.4 10.3.8 6Z" fill="#9c9c9c"/><circle cx="9" cy="6" r="3.7" fill="#f1f1f1"/><circle cx="9" cy="6" r="2.2" fill="#8c8c8c"/></svg><svg class="ic" style="left:129.5px" width="17" height="18" viewBox="0 0 17 18"><defs><linearGradient id="bg7" x1="0" x2="1"><stop offset="0" stop-color="#c0c5ce"/><stop offset=".6" stop-color="#fdfdfd"/><stop offset="1" stop-color="#e4e7ec"/></linearGradient></defs><path d="M1.3 4Q1.3 1 8.5 1T15.7 4V14Q15.7 17 8.5 17T1.3 14Z" fill="#fff" stroke="#3a3a3a" stroke-width="1"/><path d="M3.4 7h6v8.6Q5 15.6 3.4 14.2Z" fill="url(#bg7)"/></svg><span class="rt" style="left:159.5px;color:#3a3a3a;font-weight:400;transform:scaleX(0.8182)">キーボード･電源</span></div>
<div class="row" style="top:414.5px;height:19.0px"><div class="rb" style="left:102.0px;width:122.7px"></div><svg class="ic" style="left:104.5px" width="18" height="12" viewBox="0 0 18 12"><path d="M.8 6C3.4 1.7 6.4.7 9 .7S14.6 1.7 17.2 6C14.6 10.3 11.6 11.3 9 11.3S3.4 10.3.8 6Z" fill="#9c9c9c"/><circle cx="9" cy="6" r="3.7" fill="#f1f1f1"/><circle cx="9" cy="6" r="2.2" fill="#8c8c8c"/></svg><svg class="ic" style="left:129.5px" width="17" height="18" viewBox="0 0 17 18"><defs><linearGradient id="bg8" x1="0" x2="1"><stop offset="0" stop-color="#c0c5ce"/><stop offset=".6" stop-color="#fdfdfd"/><stop offset="1" stop-color="#e4e7ec"/></linearGradient></defs><path d="M1.3 4Q1.3 1 8.5 1T15.7 4V14Q15.7 17 8.5 17T1.3 14Z" fill="#fff" stroke="#3a3a3a" stroke-width="1"/><path d="M3.4 7h6v8.6Q5 15.6 3.4 14.2Z" fill="url(#bg8)"/></svg><span class="rt" style="left:159.5px;color:#3a3a3a;font-weight:400;transform:scaleX(0.7748)">キーボード (1)</span></div>
<div class="row" style="top:438.5px;height:19.0px"><div class="rb" style="left:84.0px;width:142.6px"></div><svg class="ic" style="left:86.5px" width="18" height="12" viewBox="0 0 18 12"><path d="M.8 6C3.4 1.7 6.4.7 9 .7S14.6 1.7 17.2 6C14.6 10.3 11.6 11.3 9 11.3S3.4 10.3.8 6Z" fill="#9c9c9c"/><circle cx="9" cy="6" r="3.7" fill="#f1f1f1"/><circle cx="9" cy="6" r="2.2" fill="#8c8c8c"/></svg><svg class="ic" style="left:111.5px" width="17" height="18" viewBox="0 0 17 18"><defs><linearGradient id="bg9" x1="0" x2="1"><stop offset="0" stop-color="#c0c5ce"/><stop offset=".6" stop-color="#fdfdfd"/><stop offset="1" stop-color="#e4e7ec"/></linearGradient></defs><path d="M1.3 4Q1.3 1 8.5 1T15.7 4V14Q15.7 17 8.5 17T1.3 14Z" fill="#fff" stroke="#3a3a3a" stroke-width="1"/><path d="M3.4 7h6v8.6Q5 15.6 3.4 14.2Z" fill="url(#bg9)"/></svg><span class="rt" style="left:141.5px;color:#3a3a3a;font-weight:400;transform:scaleX(0.8053)">フロントパネル･上</span></div>
<div class="row" style="top:462.5px;height:19.0px"><div class="rb" style="left:84.0px;width:142.6px"></div><svg class="ic" style="left:86.5px" width="18" height="12" viewBox="0 0 18 12"><path d="M.8 6C3.4 1.7 6.4.7 9 .7S14.6 1.7 17.2 6C14.6 10.3 11.6 11.3 9 11.3S3.4 10.3.8 6Z" fill="#9c9c9c"/><circle cx="9" cy="6" r="3.7" fill="#f1f1f1"/><circle cx="9" cy="6" r="2.2" fill="#8c8c8c"/></svg><svg class="ic" style="left:111.5px" width="17" height="18" viewBox="0 0 17 18"><defs><linearGradient id="bg10" x1="0" x2="1"><stop offset="0" stop-color="#c0c5ce"/><stop offset=".6" stop-color="#fdfdfd"/><stop offset="1" stop-color="#e4e7ec"/></linearGradient></defs><path d="M1.3 4Q1.3 1 8.5 1T15.7 4V14Q15.7 17 8.5 17T1.3 14Z" fill="#fff" stroke="#3a3a3a" stroke-width="1"/><path d="M3.4 7h6v8.6Q5 15.6 3.4 14.2Z" fill="url(#bg10)"/></svg><span class="rt" style="left:141.5px;color:#3a3a3a;font-weight:400;transform:scaleX(0.8053)">フロントパネル･下</span></div>
<div class="row" style="top:486.5px;height:19.0px"><div class="rb" style="left:84.0px;width:186.6px"></div><svg class="ic" style="left:86.5px" width="18" height="12" viewBox="0 0 18 12"><path d="M.8 6C3.4 1.7 6.4.7 9 .7S14.6 1.7 17.2 6C14.6 10.3 11.6 11.3 9 11.3S3.4 10.3.8 6Z" fill="#9c9c9c"/><circle cx="9" cy="6" r="3.7" fill="#f1f1f1"/><circle cx="9" cy="6" r="2.2" fill="#8c8c8c"/></svg><svg class="ic" style="left:111.5px" width="17" height="18" viewBox="0 0 17 18"><defs><linearGradient id="bg11" x1="0" x2="1"><stop offset="0" stop-color="#c0c5ce"/><stop offset=".6" stop-color="#fdfdfd"/><stop offset="1" stop-color="#e4e7ec"/></linearGradient></defs><path d="M1.3 4Q1.3 1 8.5 1T15.7 4V14Q15.7 17 8.5 17T1.3 14Z" fill="#fff" stroke="#3a3a3a" stroke-width="1"/><path d="M3.4 7h6v8.6Q5 15.6 3.4 14.2Z" fill="url(#bg11)"/></svg><span class="rt" style="left:141.5px;color:#3a3a3a;font-weight:400;transform:scaleX(0.8034)">フロントパネル･電源スイッチ</span></div>
<div class="row" style="top:510.5px;height:19.0px"><div class="rb" style="left:84.0px;width:174.6px"></div><svg class="ic" style="left:86.5px" width="18" height="12" viewBox="0 0 18 12"><path d="M.8 6C3.4 1.7 6.4.7 9 .7S14.6 1.7 17.2 6C14.6 10.3 11.6 11.3 9 11.3S3.4 10.3.8 6Z" fill="#9c9c9c"/><circle cx="9" cy="6" r="3.7" fill="#f1f1f1"/><circle cx="9" cy="6" r="2.2" fill="#8c8c8c"/></svg><svg class="ic" style="left:111.5px" width="17" height="18" viewBox="0 0 17 18"><defs><linearGradient id="bg12" x1="0" x2="1"><stop offset="0" stop-color="#c0c5ce"/><stop offset=".6" stop-color="#fdfdfd"/><stop offset="1" stop-color="#e4e7ec"/></linearGradient></defs><path d="M1.3 4Q1.3 1 8.5 1T15.7 4V14Q15.7 17 8.5 17T1.3 14Z" fill="#fff" stroke="#3a3a3a" stroke-width="1"/><path d="M3.4 7h6v8.6Q5 15.6 3.4 14.2Z" fill="url(#bg12)"/></svg><span class="rt" style="left:141.5px;color:#3a3a3a;font-weight:400;transform:scaleX(0.8482)">フロントパネル･状態表示</span></div>
<div class="row" style="top:534.5px;height:19.0px"><div class="rb" style="left:84.0px;width:186.6px"></div><svg class="ic" style="left:86.5px" width="18" height="12" viewBox="0 0 18 12"><path d="M.8 6C3.4 1.7 6.4.7 9 .7S14.6 1.7 17.2 6C14.6 10.3 11.6 11.3 9 11.3S3.4 10.3.8 6Z" fill="#9c9c9c"/><circle cx="9" cy="6" r="3.7" fill="#f1f1f1"/><circle cx="9" cy="6" r="2.2" fill="#8c8c8c"/></svg><svg class="ic" style="left:111.5px" width="17" height="18" viewBox="0 0 17 18"><defs><linearGradient id="bg13" x1="0" x2="1"><stop offset="0" stop-color="#c0c5ce"/><stop offset=".6" stop-color="#fdfdfd"/><stop offset="1" stop-color="#e4e7ec"/></linearGradient></defs><path d="M1.3 4Q1.3 1 8.5 1T15.7 4V14Q15.7 17 8.5 17T1.3 14Z" fill="#fff" stroke="#3a3a3a" stroke-width="1"/><path d="M3.4 7h6v8.6Q5 15.6 3.4 14.2Z" fill="url(#bg13)"/></svg><span class="rt" style="left:141.5px;color:#3a3a3a;font-weight:400;transform:scaleX(0.7797)">ジョイスティックポート (1) (1)</span></div>
<div class="row" style="top:558.5px;height:19.0px"><div class="rb" style="left:84.0px;width:170.7px"></div><svg class="ic" style="left:86.5px" width="18" height="12" viewBox="0 0 18 12"><path d="M.8 6C3.4 1.7 6.4.7 9 .7S14.6 1.7 17.2 6C14.6 10.3 11.6 11.3 9 11.3S3.4 10.3.8 6Z" fill="#9c9c9c"/><circle cx="9" cy="6" r="3.7" fill="#f1f1f1"/><circle cx="9" cy="6" r="2.2" fill="#8c8c8c"/></svg><svg class="ic" style="left:111.5px" width="17" height="18" viewBox="0 0 17 18"><defs><linearGradient id="bg14" x1="0" x2="1"><stop offset="0" stop-color="#c0c5ce"/><stop offset=".6" stop-color="#fdfdfd"/><stop offset="1" stop-color="#e4e7ec"/></linearGradient></defs><path d="M1.3 4Q1.3 1 8.5 1T15.7 4V14Q15.7 17 8.5 17T1.3 14Z" fill="#fff" stroke="#3a3a3a" stroke-width="1"/><path d="M3.4 7h6v8.6Q5 15.6 3.4 14.2Z" fill="url(#bg14)"/></svg><span class="rt" style="left:141.5px;color:#3a3a3a;font-weight:400;transform:scaleX(0.7538)">フロントパネル･ボリューム</span></div>
<div class="row" style="top:582.5px;height:19.0px"><div class="rb" style="left:84.0px;width:162.6px"></div><svg class="ic" style="left:86.5px" width="18" height="12" viewBox="0 0 18 12"><path d="M.8 6C3.4 1.7 6.4.7 9 .7S14.6 1.7 17.2 6C14.6 10.3 11.6 11.3 9 11.3S3.4 10.3.8 6Z" fill="#9c9c9c"/><circle cx="9" cy="6" r="3.7" fill="#f1f1f1"/><circle cx="9" cy="6" r="2.2" fill="#8c8c8c"/></svg><svg class="ic" style="left:111.5px" width="17" height="18" viewBox="0 0 17 18"><defs><linearGradient id="bg15" x1="0" x2="1"><stop offset="0" stop-color="#c0c5ce"/><stop offset=".6" stop-color="#fdfdfd"/><stop offset="1" stop-color="#e4e7ec"/></linearGradient></defs><path d="M1.3 4Q1.3 1 8.5 1T15.7 4V14Q15.7 17 8.5 17T1.3 14Z" fill="#fff" stroke="#3a3a3a" stroke-width="1"/><path d="M3.4 7h6v8.6Q5 15.6 3.4 14.2Z" fill="url(#bg15)"/></svg><span class="rt" style="left:141.5px;color:#3a3a3a;font-weight:400;transform:scaleX(0.8383)">フロントパネル･受光 2</span></div>
<div class="row" style="top:606.5px;height:19.0px"><div class="rb" style="left:84.0px;width:162.6px"></div><svg class="ic" style="left:86.5px" width="18" height="12" viewBox="0 0 18 12"><path d="M.8 6C3.4 1.7 6.4.7 9 .7S14.6 1.7 17.2 6C14.6 10.3 11.6 11.3 9 11.3S3.4 10.3.8 6Z" fill="#9c9c9c"/><circle cx="9" cy="6" r="3.7" fill="#f1f1f1"/><circle cx="9" cy="6" r="2.2" fill="#8c8c8c"/></svg><svg class="ic" style="left:111.5px" width="17" height="18" viewBox="0 0 17 18"><defs><linearGradient id="bg16" x1="0" x2="1"><stop offset="0" stop-color="#c0c5ce"/><stop offset=".6" stop-color="#fdfdfd"/><stop offset="1" stop-color="#e4e7ec"/></linearGradient></defs><path d="M1.3 4Q1.3 1 8.5 1T15.7 4V14Q15.7 17 8.5 17T1.3 14Z" fill="#fff" stroke="#3a3a3a" stroke-width="1"/><path d="M3.4 7h6v8.6Q5 15.6 3.4 14.2Z" fill="url(#bg16)"/></svg><span class="rt" style="left:141.5px;color:#3a3a3a;font-weight:400;transform:scaleX(0.8383)">フロントパネル･受光 1</span></div>
<div class="row" style="top:630.5px;height:19.0px"><div class="rb" style="left:84.0px;width:166.5px"></div><svg class="ic" style="left:86.5px" width="18" height="12" viewBox="0 0 18 12"><path d="M.8 6C3.4 1.7 6.4.7 9 .7S14.6 1.7 17.2 6C14.6 10.3 11.6 11.3 9 11.3S3.4 10.3.8 6Z" fill="#9c9c9c"/><circle cx="9" cy="6" r="3.7" fill="#f1f1f1"/><circle cx="9" cy="6" r="2.2" fill="#8c8c8c"/></svg><svg class="ic" style="left:111.5px" width="17" height="18" viewBox="0 0 17 18"><defs><linearGradient id="bg17" x1="0" x2="1"><stop offset="0" stop-color="#c0c5ce"/><stop offset=".6" stop-color="#fdfdfd"/><stop offset="1" stop-color="#e4e7ec"/></linearGradient></defs><path d="M1.3 4Q1.3 1 8.5 1T15.7 4V14Q15.7 17 8.5 17T1.3 14Z" fill="#fff" stroke="#3a3a3a" stroke-width="1"/><path d="M3.4 7h6v8.6Q5 15.6 3.4 14.2Z" fill="url(#bg17)"/></svg><span class="rt" style="left:141.5px;color:#3a3a3a;font-weight:400;transform:scaleX(0.7869)">フロントパネル･コネクタ</span></div>
<div class="row" style="top:654.5px;height:19.0px"><div class="rb" style="left:84.0px;width:162.6px"></div><svg class="ic" style="left:86.5px" width="18" height="12" viewBox="0 0 18 12"><path d="M.8 6C3.4 1.7 6.4.7 9 .7S14.6 1.7 17.2 6C14.6 10.3 11.6 11.3 9 11.3S3.4 10.3.8 6Z" fill="#9c9c9c"/><circle cx="9" cy="6" r="3.7" fill="#f1f1f1"/><circle cx="9" cy="6" r="2.2" fill="#8c8c8c"/></svg><svg class="ic" style="left:111.5px" width="17" height="18" viewBox="0 0 17 18"><defs><linearGradient id="bg18" x1="0" x2="1"><stop offset="0" stop-color="#c0c5ce"/><stop offset=".6" stop-color="#fdfdfd"/><stop offset="1" stop-color="#e4e7ec"/></linearGradient></defs><path d="M1.3 4Q1.3 1 8.5 1T15.7 4V14Q15.7 17 8.5 17T1.3 14Z" fill="#fff" stroke="#3a3a3a" stroke-width="1"/><path d="M3.4 7h6v8.6Q5 15.6 3.4 14.2Z" fill="url(#bg18)"/></svg><span class="rt" style="left:141.5px;color:#3a3a3a;font-weight:400;transform:scaleX(0.8428)">フロントパネル･LED 4</span></div>
<div class="row" style="top:678.5px;height:19.0px"><div class="rb" style="left:84.0px;width:154.6px"></div><svg class="ic" style="left:86.5px" width="18" height="12" viewBox="0 0 18 12"><path d="M.8 6C3.4 1.7 6.4.7 9 .7S14.6 1.7 17.2 6C14.6 10.3 11.6 11.3 9 11.3S3.4 10.3.8 6Z" fill="#9c9c9c"/><circle cx="9" cy="6" r="3.7" fill="#f1f1f1"/><circle cx="9" cy="6" r="2.2" fill="#8c8c8c"/></svg><svg class="ic" style="left:111.5px" width="17" height="18" viewBox="0 0 17 18"><defs><linearGradient id="bg19" x1="0" x2="1"><stop offset="0" stop-color="#c0c5ce"/><stop offset=".6" stop-color="#fdfdfd"/><stop offset="1" stop-color="#e4e7ec"/></linearGradient></defs><path d="M1.3 4Q1.3 1 8.5 1T15.7 4V14Q15.7 17 8.5 17T1.3 14Z" fill="#fff" stroke="#3a3a3a" stroke-width="1"/><path d="M3.4 7h6v8.6Q5 15.6 3.4 14.2Z" fill="url(#bg19)"/></svg><span class="rt" style="left:141.5px;color:#3a3a3a;font-weight:400;transform:scaleX(0.7935)">フロントパネル･LED1</span></div>
<div class="row" style="top:702.5px;height:19.0px"><div class="rb" style="left:84.0px;width:162.6px"></div><svg class="ic" style="left:86.5px" width="18" height="12" viewBox="0 0 18 12"><path d="M.8 6C3.4 1.7 6.4.7 9 .7S14.6 1.7 17.2 6C14.6 10.3 11.6 11.3 9 11.3S3.4 10.3.8 6Z" fill="#9c9c9c"/><circle cx="9" cy="6" r="3.7" fill="#f1f1f1"/><circle cx="9" cy="6" r="2.2" fill="#8c8c8c"/></svg><svg class="ic" style="left:111.5px" width="17" height="18" viewBox="0 0 17 18"><defs><linearGradient id="bg20" x1="0" x2="1"><stop offset="0" stop-color="#c0c5ce"/><stop offset=".6" stop-color="#fdfdfd"/><stop offset="1" stop-color="#e4e7ec"/></linearGradient></defs><path d="M1.3 4Q1.3 1 8.5 1T15.7 4V14Q15.7 17 8.5 17T1.3 14Z" fill="#fff" stroke="#3a3a3a" stroke-width="1"/><path d="M3.4 7h6v8.6Q5 15.6 3.4 14.2Z" fill="url(#bg20)"/></svg><span class="rt" style="left:141.5px;color:#3a3a3a;font-weight:400;transform:scaleX(0.8428)">フロントパネル･LED 2</span></div>
<div class="row" style="top:726.5px;height:19.0px"><div class="rb" style="left:84.0px;width:162.6px"></div><svg class="ic" style="left:86.5px" width="18" height="12" viewBox="0 0 18 12"><path d="M.8 6C3.4 1.7 6.4.7 9 .7S14.6 1.7 17.2 6C14.6 10.3 11.6 11.3 9 11.3S3.4 10.3.8 6Z" fill="#9c9c9c"/><circle cx="9" cy="6" r="3.7" fill="#f1f1f1"/><circle cx="9" cy="6" r="2.2" fill="#8c8c8c"/></svg><svg class="ic" style="left:111.5px" width="17" height="18" viewBox="0 0 17 18"><defs><linearGradient id="bg21" x1="0" x2="1"><stop offset="0" stop-color="#c0c5ce"/><stop offset=".6" stop-color="#fdfdfd"/><stop offset="1" stop-color="#e4e7ec"/></linearGradient></defs><path d="M1.3 4Q1.3 1 8.5 1T15.7 4V14Q15.7 17 8.5 17T1.3 14Z" fill="#fff" stroke="#3a3a3a" stroke-width="1"/><path d="M3.4 7h6v8.6Q5 15.6 3.4 14.2Z" fill="url(#bg21)"/></svg><span class="rt" style="left:141.5px;color:#3a3a3a;font-weight:400;transform:scaleX(0.8428)">フロントパネル･LED 3</span></div>
<div class="row" style="top:750.5px;height:19.0px"><div class="rb" style="left:84.0px;width:90.7px"></div><svg class="ic" style="left:86.5px" width="18" height="12" viewBox="0 0 18 12"><path d="M.8 6C3.4 1.7 6.4.7 9 .7S14.6 1.7 17.2 6C14.6 10.3 11.6 11.3 9 11.3S3.4 10.3.8 6Z" fill="#9c9c9c"/><circle cx="9" cy="6" r="3.7" fill="#f1f1f1"/><circle cx="9" cy="6" r="2.2" fill="#8c8c8c"/></svg><svg class="ic" style="left:111.5px" width="17" height="18" viewBox="0 0 17 18"><defs><linearGradient id="bg22" x1="0" x2="1"><stop offset="0" stop-color="#c0c5ce"/><stop offset=".6" stop-color="#fdfdfd"/><stop offset="1" stop-color="#e4e7ec"/></linearGradient></defs><path d="M1.3 4Q1.3 1 8.5 1T15.7 4V14Q15.7 17 8.5 17T1.3 14Z" fill="#fff" stroke="#3a3a3a" stroke-width="1"/><path d="M3.4 7h6v8.6Q5 15.6 3.4 14.2Z" fill="url(#bg22)"/></svg><span class="rt" style="left:141.5px;color:#3a3a3a;font-weight:400;transform:scaleX(0.8144)">FDD1</span></div>
<div class="row" style="top:774.5px;height:19.0px"><div class="rb" style="left:84.0px;width:166.9px"></div><svg class="ic" style="left:86.5px" width="18" height="12" viewBox="0 0 18 12"><path d="M.8 6C3.4 1.7 6.4.7 9 .7S14.6 1.7 17.2 6C14.6 10.3 11.6 11.3 9 11.3S3.4 10.3.8 6Z" fill="#9c9c9c"/><circle cx="9" cy="6" r="3.7" fill="#f1f1f1"/><circle cx="9" cy="6" r="2.2" fill="#8c8c8c"/></svg><svg class="ic" style="left:111.5px" width="17" height="18" viewBox="0 0 17 18"><defs><linearGradient id="bg23" x1="0" x2="1"><stop offset="0" stop-color="#c0c5ce"/><stop offset=".6" stop-color="#fdfdfd"/><stop offset="1" stop-color="#e4e7ec"/></linearGradient></defs><path d="M1.3 4Q1.3 1 8.5 1T15.7 4V14Q15.7 17 8.5 17T1.3 14Z" fill="#fff" stroke="#3a3a3a" stroke-width="1"/><path d="M3.4 7h6v8.6Q5 15.6 3.4 14.2Z" fill="url(#bg23)"/></svg><span class="rt" style="left:141.5px;color:#3a3a3a;font-weight:400;transform:scaleX(0.8148)">FDD1･イジェクトボタン</span></div>
<div class="row" style="top:798.5px;height:19.0px"><div class="rb" style="left:84.0px;width:118.8px"></div><svg class="ic" style="left:86.5px" width="18" height="12" viewBox="0 0 18 12"><path d="M.8 6C3.4 1.7 6.4.7 9 .7S14.6 1.7 17.2 6C14.6 10.3 11.6 11.3 9 11.3S3.4 10.3.8 6Z" fill="#9c9c9c"/><circle cx="9" cy="6" r="3.7" fill="#f1f1f1"/><circle cx="9" cy="6" r="2.2" fill="#8c8c8c"/></svg><svg class="ic" style="left:111.5px" width="17" height="18" viewBox="0 0 17 18"><defs><linearGradient id="bg24" x1="0" x2="1"><stop offset="0" stop-color="#c0c5ce"/><stop offset=".6" stop-color="#fdfdfd"/><stop offset="1" stop-color="#e4e7ec"/></linearGradient></defs><path d="M1.3 4Q1.3 1 8.5 1T15.7 4V14Q15.7 17 8.5 17T1.3 14Z" fill="#fff" stroke="#3a3a3a" stroke-width="1"/><path d="M3.4 7h6v8.6Q5 15.6 3.4 14.2Z" fill="url(#bg24)"/></svg><span class="rt" style="left:141.5px;color:#3a3a3a;font-weight:400;transform:scaleX(0.9258)">FDD1･LED</span></div>
<div class="row" style="top:822.5px;height:19.0px"><div class="rb" style="left:84.0px;width:102.8px"></div><svg class="ic" style="left:86.5px" width="18" height="12" viewBox="0 0 18 12"><path d="M.8 6C3.4 1.7 6.4.7 9 .7S14.6 1.7 17.2 6C14.6 10.3 11.6 11.3 9 11.3S3.4 10.3.8 6Z" fill="#9c9c9c"/><circle cx="9" cy="6" r="3.7" fill="#f1f1f1"/><circle cx="9" cy="6" r="2.2" fill="#8c8c8c"/></svg><svg class="ic" style="left:111.5px" width="17" height="18" viewBox="0 0 17 18"><defs><linearGradient id="bg25" x1="0" x2="1"><stop offset="0" stop-color="#c0c5ce"/><stop offset=".6" stop-color="#fdfdfd"/><stop offset="1" stop-color="#e4e7ec"/></linearGradient></defs><path d="M1.3 4Q1.3 1 8.5 1T15.7 4V14Q15.7 17 8.5 17T1.3 14Z" fill="#fff" stroke="#3a3a3a" stroke-width="1"/><path d="M3.4 7h6v8.6Q5 15.6 3.4 14.2Z" fill="url(#bg25)"/></svg><span class="rt" style="left:141.5px;color:#3a3a3a;font-weight:400;transform:scaleX(0.9077)">FDD･蓋</span></div>
<div class="row" style="top:846.5px;height:19.0px"><div class="rb" style="left:84.0px;width:162.8px"></div><svg class="ic" style="left:86.5px" width="18" height="12" viewBox="0 0 18 12"><path d="M.8 6C3.4 1.7 6.4.7 9 .7S14.6 1.7 17.2 6C14.6 10.3 11.6 11.3 9 11.3S3.4 10.3.8 6Z" fill="#9c9c9c"/><circle cx="9" cy="6" r="3.7" fill="#f1f1f1"/><circle cx="9" cy="6" r="2.2" fill="#8c8c8c"/></svg><svg class="ic" style="left:111.5px" width="17" height="18" viewBox="0 0 17 18"><defs><linearGradient id="bg26" x1="0" x2="1"><stop offset="0" stop-color="#c0c5ce"/><stop offset=".6" stop-color="#fdfdfd"/><stop offset="1" stop-color="#e4e7ec"/></linearGradient></defs><path d="M1.3 4Q1.3 1 8.5 1T15.7 4V14Q15.7 17 8.5 17T1.3 14Z" fill="#fff" stroke="#3a3a3a" stroke-width="1"/><path d="M3.4 7h6v8.6Q5 15.6 3.4 14.2Z" fill="url(#bg26)"/></svg><span class="rt" style="left:141.5px;color:#3a3a3a;font-weight:400;transform:scaleX(0.7549)">カートリッジスロット･蓋</span></div>
<div class="row" style="top:870.5px;height:19.0px"><div class="rb" style="left:84.0px;width:122.6px"></div><svg class="ic" style="left:86.5px" width="18" height="12" viewBox="0 0 18 12"><path d="M.8 6C3.4 1.7 6.4.7 9 .7S14.6 1.7 17.2 6C14.6 10.3 11.6 11.3 9 11.3S3.4 10.3.8 6Z" fill="#9c9c9c"/><circle cx="9" cy="6" r="3.7" fill="#f1f1f1"/><circle cx="9" cy="6" r="2.2" fill="#8c8c8c"/></svg><svg class="ic" style="left:111.5px" width="17" height="18" viewBox="0 0 17 18"><defs><linearGradient id="bg27" x1="0" x2="1"><stop offset="0" stop-color="#c0c5ce"/><stop offset=".6" stop-color="#fdfdfd"/><stop offset="1" stop-color="#e4e7ec"/></linearGradient></defs><path d="M1.3 4Q1.3 1 8.5 1T15.7 4V14Q15.7 17 8.5 17T1.3 14Z" fill="#fff" stroke="#3a3a3a" stroke-width="1"/><path d="M3.4 7h6v8.6Q5 15.6 3.4 14.2Z" fill="url(#bg27)"/></svg><span class="rt" style="left:141.5px;color:#3a3a3a;font-weight:400;transform:scaleX(0.8421)">内部フレーム</span></div>
<div class="row" style="top:894.5px;height:19.0px"><div class="rb" style="left:84.0px;width:190.8px"></div><svg class="ic" style="left:86.5px" width="18" height="12" viewBox="0 0 18 12"><path d="M.8 6C3.4 1.7 6.4.7 9 .7S14.6 1.7 17.2 6C14.6 10.3 11.6 11.3 9 11.3S3.4 10.3.8 6Z" fill="#9c9c9c"/><circle cx="9" cy="6" r="3.7" fill="#f1f1f1"/><circle cx="9" cy="6" r="2.2" fill="#8c8c8c"/></svg><svg class="ic" style="left:111.5px" width="17" height="18" viewBox="0 0 17 18"><defs><linearGradient id="bg28" x1="0" x2="1"><stop offset="0" stop-color="#c0c5ce"/><stop offset=".6" stop-color="#fdfdfd"/><stop offset="1" stop-color="#e4e7ec"/></linearGradient></defs><path d="M1.3 4Q1.3 1 8.5 1T15.7 4V14Q15.7 17 8.5 17T1.3 14Z" fill="#fff" stroke="#3a3a3a" stroke-width="1"/><path d="M3.4 7h6v8.6Q5 15.6 3.4 14.2Z" fill="url(#bg28)"/></svg><span class="rt" style="left:141.5px;color:#3a3a3a;font-weight:400;transform:scaleX(0.7743)">フロントパネル･タイマーボタン</span></div>
<div class="row" style="top:918.5px;height:19.0px"><div class="rb" style="left:84.0px;width:190.8px"></div><svg class="ic" style="left:86.5px" width="18" height="12" viewBox="0 0 18 12"><path d="M.8 6C3.4 1.7 6.4.7 9 .7S14.6 1.7 17.2 6C14.6 10.3 11.6 11.3 9 11.3S3.4 10.3.8 6Z" fill="#9c9c9c"/><circle cx="9" cy="6" r="3.7" fill="#f1f1f1"/><circle cx="9" cy="6" r="2.2" fill="#8c8c8c"/></svg><svg class="ic" style="left:111.5px" width="17" height="18" viewBox="0 0 17 18"><defs><linearGradient id="bg29" x1="0" x2="1"><stop offset="0" stop-color="#c0c5ce"/><stop offset=".6" stop-color="#fdfdfd"/><stop offset="1" stop-color="#e4e7ec"/></linearGradient></defs><path d="M1.3 4Q1.3 1 8.5 1T15.7 4V14Q15.7 17 8.5 17T1.3 14Z" fill="#fff" stroke="#3a3a3a" stroke-width="1"/><path d="M3.4 7h6v8.6Q5 15.6 3.4 14.2Z" fill="url(#bg29)"/></svg><span class="rt" style="left:141.5px;color:#3a3a3a;font-weight:400;transform:scaleX(0.7743)">フロントパネル･リセットボタン</span></div>
<div class="row" style="top:942.5px;height:19.0px"><div class="rb" style="left:84.0px;width:98.7px"></div><svg class="ic" style="left:86.5px" width="18" height="12" viewBox="0 0 18 12"><path d="M.8 6C3.4 1.7 6.4.7 9 .7S14.6 1.7 17.2 6C14.6 10.3 11.6 11.3 9 11.3S3.4 10.3.8 6Z" fill="#9c9c9c"/><circle cx="9" cy="6" r="3.7" fill="#f1f1f1"/><circle cx="9" cy="6" r="2.2" fill="#8c8c8c"/></svg><svg class="ic" style="left:111.5px" width="17" height="18" viewBox="0 0 17 18"><defs><linearGradient id="bg30" x1="0" x2="1"><stop offset="0" stop-color="#c0c5ce"/><stop offset=".6" stop-color="#fdfdfd"/><stop offset="1" stop-color="#e4e7ec"/></linearGradient></defs><path d="M1.3 4Q1.3 1 8.5 1T15.7 4V14Q15.7 17 8.5 17T1.3 14Z" fill="#fff" stroke="#3a3a3a" stroke-width="1"/><path d="M3.4 7h6v8.6Q5 15.6 3.4 14.2Z" fill="url(#bg30)"/></svg><span class="rt" style="left:141.5px;color:#3a3a3a;font-weight:400;transform:scaleX(0.7136)">マウンタ</span></div>
<div class="row" style="top:966.5px;height:19.0px"><div class="rb" style="left:84.0px;width:150.5px"></div><svg class="ic" style="left:86.5px" width="18" height="12" viewBox="0 0 18 12"><path d="M.8 6C3.4 1.7 6.4.7 9 .7S14.6 1.7 17.2 6C14.6 10.3 11.6 11.3 9 11.3S3.4 10.3.8 6Z" fill="#9c9c9c"/><circle cx="9" cy="6" r="3.7" fill="#f1f1f1"/><circle cx="9" cy="6" r="2.2" fill="#8c8c8c"/></svg><svg class="ic" style="left:111.5px" width="17" height="18" viewBox="0 0 17 18"><defs><linearGradient id="bg31" x1="0" x2="1"><stop offset="0" stop-color="#c0c5ce"/><stop offset=".6" stop-color="#fdfdfd"/><stop offset="1" stop-color="#e4e7ec"/></linearGradient></defs><path d="M1.3 4Q1.3 1 8.5 1T15.7 4V14Q15.7 17 8.5 17T1.3 14Z" fill="#fff" stroke="#3a3a3a" stroke-width="1"/><path d="M3.4 7h6v8.6Q5 15.6 3.4 14.2Z" fill="url(#bg31)"/></svg><span class="rt" style="left:141.5px;color:#3a3a3a;font-weight:400;transform:scaleX(0.9538)">ボディ･底面･背面</span></div>
<div class="row" style="top:990.5px;height:19.0px"><div class="rb" style="left:84.0px;width:146.8px"></div><svg class="ic" style="left:86.5px" width="18" height="12" viewBox="0 0 18 12"><path d="M.8 6C3.4 1.7 6.4.7 9 .7S14.6 1.7 17.2 6C14.6 10.3 11.6 11.3 9 11.3S3.4 10.3.8 6Z" fill="#9c9c9c"/><circle cx="9" cy="6" r="3.7" fill="#f1f1f1"/><circle cx="9" cy="6" r="2.2" fill="#8c8c8c"/></svg><svg class="ic" style="left:111.5px" width="17" height="18" viewBox="0 0 17 18"><defs><linearGradient id="bg32" x1="0" x2="1"><stop offset="0" stop-color="#c0c5ce"/><stop offset=".6" stop-color="#fdfdfd"/><stop offset="1" stop-color="#e4e7ec"/></linearGradient></defs><path d="M1.3 4Q1.3 1 8.5 1T15.7 4V14Q15.7 17 8.5 17T1.3 14Z" fill="#fff" stroke="#3a3a3a" stroke-width="1"/><path d="M3.4 7h6v8.6Q5 15.6 3.4 14.2Z" fill="url(#bg32)"/></svg><span class="rt" style="left:141.5px;color:#3a3a3a;font-weight:400;transform:scaleX(0.9113)">ボディ･上面･左面</span></div>
<div class="row" style="top:1014.5px;height:19.0px"><div class="rb" style="left:84.0px;width:146.8px"></div><svg class="ic" style="left:86.5px" width="18" height="12" viewBox="0 0 18 12"><path d="M.8 6C3.4 1.7 6.4.7 9 .7S14.6 1.7 17.2 6C14.6 10.3 11.6 11.3 9 11.3S3.4 10.3.8 6Z" fill="#9c9c9c"/><circle cx="9" cy="6" r="3.7" fill="#f1f1f1"/><circle cx="9" cy="6" r="2.2" fill="#8c8c8c"/></svg><svg class="ic" style="left:111.5px" width="17" height="18" viewBox="0 0 17 18"><defs><linearGradient id="bg33" x1="0" x2="1"><stop offset="0" stop-color="#c0c5ce"/><stop offset=".6" stop-color="#fdfdfd"/><stop offset="1" stop-color="#e4e7ec"/></linearGradient></defs><path d="M1.3 4Q1.3 1 8.5 1T15.7 4V14Q15.7 17 8.5 17T1.3 14Z" fill="#fff" stroke="#3a3a3a" stroke-width="1"/><path d="M3.4 7h6v8.6Q5 15.6 3.4 14.2Z" fill="url(#bg33)"/></svg><span class="rt" style="left:141.5px;color:#3a3a3a;font-weight:400;transform:scaleX(0.9113)">ボディ･上面･背面</span></div>
<div class="row" style="top:1038.5px;height:19.0px"><div class="rb" style="left:84.0px;width:146.8px"></div><svg class="ic" style="left:86.5px" width="18" height="12" viewBox="0 0 18 12"><path d="M.8 6C3.4 1.7 6.4.7 9 .7S14.6 1.7 17.2 6C14.6 10.3 11.6 11.3 9 11.3S3.4 10.3.8 6Z" fill="#9c9c9c"/><circle cx="9" cy="6" r="3.7" fill="#f1f1f1"/><circle cx="9" cy="6" r="2.2" fill="#8c8c8c"/></svg><svg class="ic" style="left:111.5px" width="17" height="18" viewBox="0 0 17 18"><defs><linearGradient id="bg34" x1="0" x2="1"><stop offset="0" stop-color="#c0c5ce"/><stop offset=".6" stop-color="#fdfdfd"/><stop offset="1" stop-color="#e4e7ec"/></linearGradient></defs><path d="M1.3 4Q1.3 1 8.5 1T15.7 4V14Q15.7 17 8.5 17T1.3 14Z" fill="#fff" stroke="#3a3a3a" stroke-width="1"/><path d="M3.4 7h6v8.6Q5 15.6 3.4 14.2Z" fill="url(#bg34)"/></svg><span class="rt" style="left:141.5px;color:#3a3a3a;font-weight:400;transform:scaleX(0.9113)">ボディ･上面･上面</span></div>
<div class="row" style="top:1062.5px;height:19.0px"><div class="rb" style="left:84.0px;width:146.8px"></div><svg class="ic" style="left:86.5px" width="18" height="12" viewBox="0 0 18 12"><path d="M.8 6C3.4 1.7 6.4.7 9 .7S14.6 1.7 17.2 6C14.6 10.3 11.6 11.3 9 11.3S3.4 10.3.8 6Z" fill="#9c9c9c"/><circle cx="9" cy="6" r="3.7" fill="#f1f1f1"/><circle cx="9" cy="6" r="2.2" fill="#8c8c8c"/></svg><svg class="ic" style="left:111.5px" width="17" height="18" viewBox="0 0 17 18"><defs><linearGradient id="bg35" x1="0" x2="1"><stop offset="0" stop-color="#c0c5ce"/><stop offset=".6" stop-color="#fdfdfd"/><stop offset="1" stop-color="#e4e7ec"/></linearGradient></defs><path d="M1.3 4Q1.3 1 8.5 1T15.7 4V14Q15.7 17 8.5 17T1.3 14Z" fill="#fff" stroke="#3a3a3a" stroke-width="1"/><path d="M3.4 7h6v8.6Q5 15.6 3.4 14.2Z" fill="url(#bg35)"/></svg><span class="rt" style="left:141.5px;color:#3a3a3a;font-weight:400;transform:scaleX(0.9113)">ボディ･上面･右面</span></div>
<div class="row" style="top:1086.5px;height:19.0px"><div class="rb" style="left:84.0px;width:150.5px"></div><svg class="ic" style="left:86.5px" width="18" height="12" viewBox="0 0 18 12"><path d="M.8 6C3.4 1.7 6.4.7 9 .7S14.6 1.7 17.2 6C14.6 10.3 11.6 11.3 9 11.3S3.4 10.3.8 6Z" fill="#9c9c9c"/><circle cx="9" cy="6" r="3.7" fill="#f1f1f1"/><circle cx="9" cy="6" r="2.2" fill="#8c8c8c"/></svg><svg class="ic" style="left:111.5px" width="17" height="18" viewBox="0 0 17 18"><defs><linearGradient id="bg36" x1="0" x2="1"><stop offset="0" stop-color="#c0c5ce"/><stop offset=".6" stop-color="#fdfdfd"/><stop offset="1" stop-color="#e4e7ec"/></linearGradient></defs><path d="M1.3 4Q1.3 1 8.5 1T15.7 4V14Q15.7 17 8.5 17T1.3 14Z" fill="#fff" stroke="#3a3a3a" stroke-width="1"/><path d="M3.4 7h6v8.6Q5 15.6 3.4 14.2Z" fill="url(#bg36)"/></svg><span class="rt" style="left:141.5px;color:#3a3a3a;font-weight:400;transform:scaleX(0.9538)">ボディ･底面･左面</span></div>
<div id="comment"></div>
<svg style="position:absolute;left:0;top:1128px" width="330" height="30" viewBox="0 1128 330 30"><text x="37.0" y="1147.2" font-size="11.3" fill="#555" font-weight="400" textLength="31.5" lengthAdjust="spacingAndGlyphs" >コメント</text><circle cx="295.5" cy="1143" r="4.6" fill="#222"/><path d="M292.8 1143h5.4M295.5 1140.3v5.4" stroke="#f1f1f1" stroke-width="1.3"/></svg>
</body></html>
